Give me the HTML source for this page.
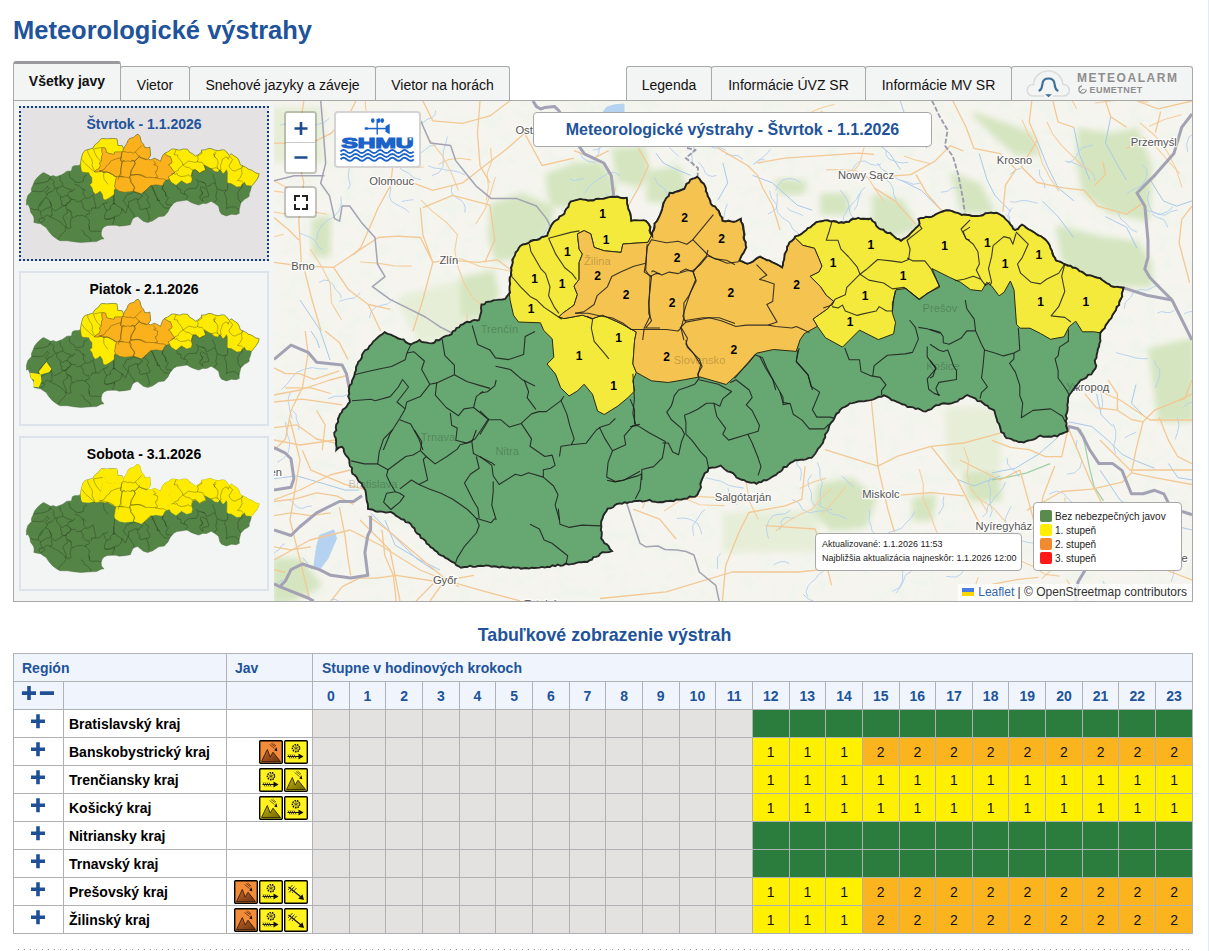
<!DOCTYPE html>
<html><head><meta charset="utf-8">
<style>
html,body{margin:0;padding:0;background:#fff;}
body{width:1209px;height:951px;overflow:hidden;position:relative;font-family:"Liberation Sans",sans-serif;}
.abs{position:absolute;}
h1{position:absolute;left:13px;top:16px;margin:0;font-size:25.5px;font-weight:bold;color:#21539a;white-space:nowrap;letter-spacing:0px}
.tab{position:absolute;top:66px;height:33px;border:1px solid #a9a9a9;border-bottom:none;border-radius:3px 3px 0 0;background:#f3f4f4;font-size:14px;color:#111;text-align:center;line-height:36px;box-sizing:content-box}
.tab.act{top:61px;border-top:3px solid #9a9a9e;font-weight:bold;line-height:35px;z-index:3;height:36px}
.panel{position:absolute;left:13px;top:100px;width:1178px;height:500px;border:1px solid #a9a9a9;background:#f3f4f4}
.card{position:absolute;left:5px;width:246px;height:151px;border:2px solid #dde3ea;background:#f3f4f4}
.card.sel{border:2px dotted #0a3c88;background:#e4e2e2}
.ctitle{position:absolute;left:0;right:0;top:8px;text-align:center;font-weight:bold;font-size:14px;color:#000}
.sel .ctitle{color:#21539a}
.map{position:absolute;left:260px;top:0px;width:918px;height:500px;overflow:hidden;background:#f2efe9}
.ttl{position:absolute;left:0;right:0;top:625px;text-align:center;font-size:17.8px;font-weight:bold;color:#21539a}
table.t{position:absolute;left:13px;top:653px;border-collapse:collapse;table-layout:fixed;width:1180px}
table.t td, table.t th{border:1px solid #b0b1b5;padding:0;height:27px;font-size:14px}
table.t th{background:#f0f5fd;color:#21539a;font-weight:bold;text-align:left}
table.t th.h{text-align:center}
td.pl{color:#21539a;font-weight:bold;font-size:22px !important;text-align:center}
td.nm{font-weight:bold;padding-left:5px !important;font-size:14px !important;color:#000}
td.jv{text-align:right;padding-right:4px !important;font-size:0 !important;white-space:nowrap}
.ic{display:inline-block;width:24px;height:24px;margin-left:1px;vertical-align:middle}
.ic svg{display:block}
td.g{background:#e4e2e0}
td.gr{background:#2a7d3d}
td.y{background:#fff000;text-align:center;color:#111}
td.o{background:#fbb41d;text-align:center;color:#111}
.lbar{position:absolute;box-sizing:border-box;border:2px solid rgba(0,0,0,0.2);border-radius:4px;background:#fff;overflow:hidden;background-clip:padding-box}
.zb{background:#fff} .zb svg, .lbar svg{display:block}
.lbox{position:absolute;box-sizing:border-box;background:#fff;border:1px solid #a8a8a8;border-radius:4px}
.mtitle{font-size:16px;font-weight:bold;color:#21539a;text-align:center;line-height:33px}
.upd{font-size:9px;color:#222;padding:3px 0 0 6px;line-height:14px;white-space:nowrap}
.leg{font-size:10px;color:#222;padding:7px 0 0 6px;line-height:14px;white-space:nowrap}
.leg i{display:inline-block;width:12px;height:12px;border-radius:2px;vertical-align:-2px;margin-right:3px}
.leg div{height:14px}
.attr{position:absolute;right:0;bottom:0;height:17px;background:rgba(255,255,255,0.8);font-size:12px;color:#333;padding:0 5px 0 4px;line-height:17px;white-space:nowrap}
.dots{position:absolute;left:0;top:0}
</style></head><body>
<h1>Meteorologické výstrahy</h1>
<div class="tab act" style="left:13px;width:106px">Všetky javy</div>
<div class="tab" style="left:120px;width:68px">Vietor</div>
<div class="tab" style="left:189px;width:185px">Snehové jazyky a záveje</div>
<div class="tab" style="left:375px;width:133px">Vietor na horách</div>
<div class="tab" style="left:626px;width:84px">Legenda</div>
<div class="tab" style="left:711px;width:153px">Informácie ÚVZ SR</div>
<div class="tab" style="left:865px;width:145px">Informácie MV SR</div>
<div class="tab" style="left:1011px;width:180px"><svg width="181" height="33" viewBox="1012 67 181 33" style="position:absolute;left:0;top:0;display:block">
<path d="M1033 96 C1025 96 1025.5 84 1033.5 84.5 C1034 76 1041 71 1048.5 71 C1056 71 1062 76 1063 84.5 C1071 84 1071.5 96 1063.5 96 L1053 96 M1044 96 L1033 96" fill="none" stroke="#dcdcdc" stroke-width="1.6"/>
<path d="M1039.5 90.5 C1042.5 89 1042 85 1042.5 83.5 C1043 80 1045.5 78.5 1048.5 78.5 C1051.5 78.5 1054 80 1054.5 83.5 C1055 85 1054.5 89 1057.5 90.5" fill="none" stroke="#3f7099" stroke-width="2.2" stroke-linecap="round"/>
<path d="M1045 94.2 L1052 94.2 L1048.5 97.2 Z" fill="#3f7099"/>
<text x="1077" y="82" font-family="Liberation Sans" font-weight="bold" font-size="12" fill="#8e8e8e" letter-spacing="1.55">METEOALARM</text>
<circle cx="1082.5" cy="89.5" r="3.6" fill="none" stroke="#8e8e8e" stroke-width="1.3" stroke-dasharray="16 7"/>
<path d="M1080 92.5 C1081 90 1083 89 1084.5 89.5" fill="none" stroke="#8e8e8e" stroke-width="1"/>
<text x="1089.5" y="93" font-family="Liberation Sans" font-weight="bold" font-size="9" fill="#8e8e8e" letter-spacing="0.45">EUMETNET</text>
</svg>
</div>
<div class="panel">
  <div class="card sel" style="top:5px"><svg width="246" height="151" viewBox="21 108 246 151" style="position:absolute;left:0;top:0;display:block">
<g transform="matrix(0.29069,0.01866,-0.02494,0.2839,-60.169,71.096)">
<polygon points="336.8,450.0 335.1,433.0 338.5,416.2 349.4,401.9 348.6,391.0 353.6,375.8 357.0,364.0 365.4,350.6 375.5,339.6 384.8,332.0 394.0,335.4 400.8,338.8 410.8,343.8 419.3,340.5 429.4,343.8 441.1,338.8 451.2,333.7 464.7,322.0 479.9,320.0 482.0,305.2 488.3,301.0 505.1,298.9 509.3,292.6 510.1,277.7 513.5,257.5 520.2,245.7 533.6,240.7 547.1,235.6 552.2,223.8 563.9,213.7 570.7,202.0 577.4,199.4 590.8,200.3 600.9,198.6 614.4,196.9 626.2,197.8 629.5,212.0 631.2,220.5 646.4,220.5 649.7,227.2 651.4,235.6 654.8,223.8 661.5,212.0 664.9,200.3 669.9,193.6 683.7,188.5 690.5,180.1 697.2,176.7 703.9,183.5 710.7,203.6 719.1,210.4 722.4,220.5 734.2,222.2 740.9,218.8 742.6,227.2 746.0,247.4 739.3,260.8 747.7,264.2 760.0,257.1 771.8,261.5 782.1,267.4 785.0,254.2 789.5,242.4 795.3,236.5 804.2,232.1 816.0,221.8 824.8,220.3 833.6,221.8 844.0,223.3 855.7,218.4 870.9,218.4 878.4,227.9 889.8,233.5 901.2,241.1 910.6,233.5 920.1,224.1 918.2,218.4 931.5,216.5 942.8,210.8 952.3,210.8 961.7,214.6 976.9,216.5 988.3,212.7 996.7,212.7 1005.1,218.6 1015.2,230.4 1022.0,224.5 1033.7,232.1 1045.5,238.8 1052.2,250.6 1055.6,260.7 1065.7,264.0 1077.5,269.1 1084.2,274.1 1097.7,277.5 1111.1,285.9 1122.9,287.6 1121.2,299.4 1114.5,312.8 1107.8,322.9 1101.0,333.0 1099.4,343.6 1097.7,352.0 1095.1,360.4 1096.0,368.8 1091.0,373.8 1080.8,380.6 1069.1,394.0 1067.4,407.5 1065.7,421.0 1067.4,431.0 1057.3,436.1 1040.5,436.1 1023.6,442.8 1006.8,437.8 1000.1,429.4 995.0,414.2 993.8,411.1 980.6,401.6 967.3,395.0 952.2,403.5 938.9,404.5 925.7,411.1 910.5,407.3 899.2,403.5 884.1,396.0 868.9,399.7 850.0,403.5 839.8,410.0 828.4,427.0 822.7,442.2 811.4,457.3 792.5,461.1 773.5,476.2 756.5,483.8 741.4,480.0 728.1,470.6 720.5,464.9 709.2,468.7 703.5,476.2 697.8,495.2 678.9,499.9 660.0,502.7 649.7,500.4 634.6,501.4 619.5,503.3 608.1,508.9 602.5,518.4 600.6,529.7 602.5,541.1 611.9,550.6 602.5,552.4 587.3,561.9 568.4,563.8 555.1,565.7 534.3,568.5 507.8,567.6 488.9,565.7 470.0,566.6 461.3,567.0 449.5,561.1 434.4,551.0 421.0,537.6 410.8,524.1 399.1,517.4 390.7,512.3 375.5,510.7 367.1,509.0 367.1,498.9 365.4,490.5 361.2,483.7 352.8,473.6 349.4,460.2 341.9,446.7" fill="#548446" stroke="#4a6e3e" stroke-width="1.5"/>
<polygon points="509.3,292.6 510.1,277.7 513.5,257.5 520.2,245.7 533.6,240.7 547.1,235.6 552.2,223.8 563.9,213.7 570.7,202.0 577.4,199.4 590.8,200.3 600.9,198.6 614.4,196.9 626.2,197.8 629.5,212.0 631.2,220.5 646.4,220.5 649.7,227.2 651.4,235.6 648.0,242.3 622.8,244.0 621.1,252.4 604.3,250.8 594.2,247.4 590.8,233.9 584.1,230.6 577.4,233.9 579.1,249.1 582.4,254.1 579.1,262.5 579.1,279.4 574.0,286.1 577.4,294.5 574.0,305.1 562.2,313.6 558.9,316.9 563.9,318.6 582.4,315.2 592.5,318.6 602.6,315.2 621.1,323.6 636.3,332.0 634.6,340.5 632.9,364.0 636.3,372.4 632.9,380.8 634.6,391.0 627.9,397.7 617.8,406.1 604.3,414.5 597.6,411.1 592.5,394.3 584.1,384.2 577.4,391.0 569.0,396.0 560.6,387.6 555.5,374.1 547.1,364.0 553.8,357.3 552.2,338.8 543.7,330.4 540.4,322.8 518.5,322.0 513.5,315.2 510.1,300.1" fill="#ffeb00" stroke="#5a5a20" stroke-width="1.2"/>
<polygon points="795.3,236.5 804.2,232.1 816.0,221.8 824.8,220.3 833.6,221.8 844.0,223.3 855.7,218.4 870.9,218.4 878.4,227.9 889.8,233.5 901.2,241.1 910.6,233.5 920.1,224.1 918.2,218.4 931.5,216.5 942.8,210.8 952.3,210.8 961.7,214.6 976.9,216.5 988.3,212.7 996.7,212.7 1005.1,218.6 1015.2,230.4 1022.0,224.5 1033.7,232.1 1045.5,238.8 1052.2,250.6 1055.6,260.7 1065.7,264.0 1077.5,269.1 1084.2,274.1 1097.7,277.5 1111.1,285.9 1122.9,287.6 1121.2,299.4 1114.5,312.8 1107.8,322.9 1101.0,333.0 1094.3,331.8 1082.5,331.8 1075.8,321.2 1069.1,326.7 1064.0,336.8 1050.6,339.3 1040.5,333.5 1030.0,328.2 1020.2,328.2 1016.5,324.4 1014.0,289.7 1010.3,281.0 1004.1,292.2 999.1,295.9 991.7,286.0 986.7,282.3 981.7,290.9 970.6,289.7 960.6,282.3 949.5,277.3 932.1,268.6 939.6,287.2 927.1,293.4 919.7,299.6 906.0,288.5 896.1,289.7 892.4,303.3 892.4,313.3 895.5,322.5 893.6,333.9 878.4,339.6 859.5,330.1 842.5,347.1 825.4,337.7 817.4,326.3 813.0,319.0 827.7,308.7 833.6,301.3 826.3,295.4 820.4,286.6 810.1,276.3 818.9,271.9 821.9,266.0 818.9,258.6 814.5,248.3 802.7,245.3 795.3,238.0" fill="#ffeb00" stroke="#5a5a20" stroke-width="1.2"/>
<polygon points="651.4,235.6 648.0,242.3 622.8,244.0 621.1,252.4 604.3,250.8 594.2,247.4 590.8,233.9 584.1,230.6 577.4,233.9 579.1,249.1 582.4,254.1 579.1,262.5 579.1,279.4 574.0,286.1 577.4,294.5 574.0,305.1 562.2,313.6 558.9,316.9 563.9,318.6 582.4,315.2 592.5,318.6 602.6,315.2 621.1,323.6 636.3,332.0 634.6,340.5 632.9,364.0 636.3,372.4 651.4,380.8 668.2,382.5 684.6,379.7 699.7,376.9 726.2,384.5 735.7,376.0 748.9,362.7 756.5,353.2 773.5,349.5 796.2,351.4 800.0,340.0 804.2,333.7 817.4,326.3 813.0,319.0 827.7,308.7 833.6,301.3 826.3,295.4 820.4,286.6 810.1,276.3 818.9,271.9 821.9,266.0 818.9,258.6 814.5,248.3 802.7,245.3 795.3,238.0 789.5,242.4 785.0,254.2 782.1,267.4 771.8,261.5 760.0,257.1 747.7,264.2 739.3,260.8 746.0,247.4 742.6,227.2 740.9,218.8 734.2,222.2 722.4,220.5 719.1,210.4 710.7,203.6 703.9,183.5 697.2,176.7 690.5,180.1 683.7,188.5 669.9,193.6 664.9,200.3 661.5,212.0 654.8,223.8" fill="#fbb11b" stroke="#5a5a20" stroke-width="1.2"/>
<g clip-path="url(#skc0)" fill="none" stroke="#1f2a14" stroke-width="2" stroke-opacity="0.55">
<clipPath id="skc0"><polygon points="336.8,450.0 335.1,433.0 338.5,416.2 349.4,401.9 348.6,391.0 353.6,375.8 357.0,364.0 365.4,350.6 375.5,339.6 384.8,332.0 394.0,335.4 400.8,338.8 410.8,343.8 419.3,340.5 429.4,343.8 441.1,338.8 451.2,333.7 464.7,322.0 479.9,320.0 482.0,305.2 488.3,301.0 505.1,298.9 509.3,292.6 510.1,277.7 513.5,257.5 520.2,245.7 533.6,240.7 547.1,235.6 552.2,223.8 563.9,213.7 570.7,202.0 577.4,199.4 590.8,200.3 600.9,198.6 614.4,196.9 626.2,197.8 629.5,212.0 631.2,220.5 646.4,220.5 649.7,227.2 651.4,235.6 654.8,223.8 661.5,212.0 664.9,200.3 669.9,193.6 683.7,188.5 690.5,180.1 697.2,176.7 703.9,183.5 710.7,203.6 719.1,210.4 722.4,220.5 734.2,222.2 740.9,218.8 742.6,227.2 746.0,247.4 739.3,260.8 747.7,264.2 760.0,257.1 771.8,261.5 782.1,267.4 785.0,254.2 789.5,242.4 795.3,236.5 804.2,232.1 816.0,221.8 824.8,220.3 833.6,221.8 844.0,223.3 855.7,218.4 870.9,218.4 878.4,227.9 889.8,233.5 901.2,241.1 910.6,233.5 920.1,224.1 918.2,218.4 931.5,216.5 942.8,210.8 952.3,210.8 961.7,214.6 976.9,216.5 988.3,212.7 996.7,212.7 1005.1,218.6 1015.2,230.4 1022.0,224.5 1033.7,232.1 1045.5,238.8 1052.2,250.6 1055.6,260.7 1065.7,264.0 1077.5,269.1 1084.2,274.1 1097.7,277.5 1111.1,285.9 1122.9,287.6 1121.2,299.4 1114.5,312.8 1107.8,322.9 1101.0,333.0 1099.4,343.6 1097.7,352.0 1095.1,360.4 1096.0,368.8 1091.0,373.8 1080.8,380.6 1069.1,394.0 1067.4,407.5 1065.7,421.0 1067.4,431.0 1057.3,436.1 1040.5,436.1 1023.6,442.8 1006.8,437.8 1000.1,429.4 995.0,414.2 993.8,411.1 980.6,401.6 967.3,395.0 952.2,403.5 938.9,404.5 925.7,411.1 910.5,407.3 899.2,403.5 884.1,396.0 868.9,399.7 850.0,403.5 839.8,410.0 828.4,427.0 822.7,442.2 811.4,457.3 792.5,461.1 773.5,476.2 756.5,483.8 741.4,480.0 728.1,470.6 720.5,464.9 709.2,468.7 703.5,476.2 697.8,495.2 678.9,499.9 660.0,502.7 649.7,500.4 634.6,501.4 619.5,503.3 608.1,508.9 602.5,518.4 600.6,529.7 602.5,541.1 611.9,550.6 602.5,552.4 587.3,561.9 568.4,563.8 555.1,565.7 534.3,568.5 507.8,567.6 488.9,565.7 470.0,566.6 461.3,567.0 449.5,561.1 434.4,551.0 421.0,537.6 410.8,524.1 399.1,517.4 390.7,512.3 375.5,510.7 367.1,509.0 367.1,498.9 365.4,490.5 361.2,483.7 352.8,473.6 349.4,460.2 341.9,446.7"/></clipPath>
<polyline points="354.6,374.7 365.6,372.0 377.9,369.2 391.5,366.5 405.2,359.7 407.0,353.0 410.7,344.6"/>
<polyline points="407.0,353.0 413.8,351.7 424.4,361.0 421.6,369.2 429.8,384.3 436.7,382.9 454.4,374.7 454.4,365.1 444.9,355.6 442.1,339.1"/>
<polyline points="429.8,384.3 420.3,396.6 406.6,402.0 405.2,408.9"/>
<polyline points="402.5,379.5 408.6,387.0 397.0,402.0 405.2,408.9"/>
<polyline points="351.9,400.7 371.0,399.3 375.1,400.7 390.2,396.6 398.4,387.0 402.5,379.5"/>
<polyline points="405.2,408.9 399.7,418.5 390.2,433.5 383.3,450.0"/>
<polyline points="399.7,419.8 410.7,423.9 418.9,439.0 423.0,450.0"/>
<polyline points="436.7,382.9 435.3,395.2 446.2,407.5 458.5,415.7 464.0,408.9 473.6,407.5 487.3,418.5"/>
<polyline points="454.4,374.7 466.8,381.5 480.4,385.6 490.0,388.4"/>
<polyline points="472.2,325.5 477.7,344.6 490.0,350.1"/>
<polyline points="473.6,407.5 476.3,396.6 483.2,391.1"/>
<polyline points="450.3,413.0 451.7,425.3 457.2,428.0 455.8,440.3 466.8,443.1 475.0,439.0 483.2,426.7 488.6,418.5"/>
<polyline points="392.4,430.0 383.6,438.8 379.2,452.1 377.7,463.9 364.4,463.9 351.2,460.9"/>
<polyline points="377.7,463.9 388.0,469.7 405.7,456.5 413.0,455.0 420.4,450.6"/>
<polyline points="414.5,430.0 421.8,441.8 420.4,450.6 426.3,456.5 435.1,463.9 446.9,456.5 457.2,449.1 460.1,444.7 471.9,441.8 476.3,430.0"/>
<polyline points="471.9,441.8 473.4,453.6 482.2,458.0 491.0,462.4 495.0,465.3"/>
<polyline points="388.0,469.7 386.5,475.6 390.9,484.5 395.3,491.8 386.5,493.3 383.6,502.1 390.9,509.5"/>
<polyline points="395.3,491.8 399.8,493.3 404.2,496.2 399.8,502.1 390.9,509.5"/>
<polyline points="399.8,488.9 411.5,480.0 418.9,484.5 427.7,480.0 424.8,466.8 423.3,459.4 426.3,456.5"/>
<polyline points="418.9,484.5 429.2,488.9 441.0,493.3 452.8,499.2 467.5,509.5 476.3,518.3 479.2,525.7 476.3,533.0 464.5,546.3 457.2,558.1 455.7,562.5"/>
<polyline points="476.3,518.3 491.0,522.7 495.0,518.3"/>
<polyline points="476.3,456.5 479.2,468.3 470.4,474.2 464.5,483.0 468.9,491.8 473.4,500.7 477.8,508.0 479.2,518.3"/>
<polyline points="480.0,410.9 488.8,419.7 500.6,419.7 509.4,427.1 521.2,423.4 531.5,413.9 538.9,411.6 546.2,411.6 561.0,400.6 563.9,396.2"/>
<polyline points="488.8,419.7 480.0,434.5"/>
<polyline points="521.2,423.4 531.5,438.9 530.0,446.2 544.8,456.5 552.1,455.1 555.1,465.4 550.7,468.3 543.3,469.8 543.3,477.1"/>
<polyline points="561.0,400.6 566.8,413.9 569.8,425.6 574.2,438.9 571.3,444.8 561.0,446.2 559.5,456.5"/>
<polyline points="571.3,444.8 586.0,443.3 596.3,430.0 600.7,427.1 609.5,424.2 615.4,418.3"/>
<polyline points="599.2,427.1 605.1,438.9 612.5,450.7 608.1,462.4 606.6,477.1 615.4,481.6 624.2,480.1 640.0,471.3"/>
<polyline points="612.5,450.7 625.7,444.8 624.2,435.9 633.1,425.6 640.0,424.2"/>
<polyline points="630.1,399.1 634.5,409.4 634.5,424.2"/>
<polyline points="480.0,456.5 491.8,465.4 493.2,475.7 499.1,484.5 515.3,474.2 521.2,475.7 528.6,472.7 543.3,477.1 553.6,486.0 558.0,494.8 555.1,505.1 559.5,520.0"/>
<polyline points="493.2,481.6 493.2,491.9 491.8,505.1 496.2,520.0"/>
<polyline points="524.2,380.0 528.6,391.8 527.1,397.7 535.9,409.4"/>
<polyline points="480.0,393.2 487.4,391.8 494.7,385.9 496.2,380.0"/>
<polyline points="685.9,340.0 687.4,347.4 699.2,359.1 702.1,366.5 697.7,373.9 699.2,378.3"/>
<polyline points="699.2,378.3 694.8,384.2 687.4,387.1 678.6,390.0 674.2,395.9 672.7,401.8 671.2,406.2 666.8,412.1 671.2,419.5 681.5,428.3 684.5,434.2 681.5,441.6 678.6,454.8 672.7,451.9 668.3,443.0 662.4,443.0"/>
<polyline points="699.2,379.7 718.3,384.2 731.6,391.5 722.7,398.9 719.8,406.2 713.9,403.3 706.5,403.3 697.7,409.2 688.9,413.6 684.5,415.1"/>
<polyline points="684.5,415.1 685.9,422.4 685.9,434.2 691.8,440.1 700.7,451.9 706.5,457.8 709.5,472.5"/>
<polyline points="713.9,403.3 716.8,416.5 725.7,428.3 722.7,434.2 728.6,440.1 747.8,434.2 758.1,431.3 759.5,425.4 752.2,410.7 746.3,404.8 752.2,397.4 749.2,390.0 736.0,379.7 730.1,382.7"/>
<polyline points="734.5,378.3 755.1,354.7 762.5,357.7 766.9,368.0 771.3,376.8 777.2,387.1 783.1,397.4 783.1,404.8 790.0,403.3"/>
<polyline points="747.8,434.2 752.2,443.0 758.1,457.8 761.0,466.6 758.1,475.4"/>
<polyline points="630.0,426.8 637.4,425.4 649.1,432.7 665.3,441.6 662.4,457.8 653.6,466.6 641.8,469.5 641.8,480.0"/>
<polyline points="632.9,373.9 634.4,398.9 632.9,413.6 635.9,425.4"/>
<polyline points="799.1,348.0 796.2,361.2 808.0,374.5 810.9,386.2 819.7,392.1 812.4,409.8 816.8,417.1 830.0,417.1 835.9,418.6"/>
<polyline points="780.0,392.1 782.9,402.4 790.3,403.9 793.2,414.2 802.1,420.1 809.4,428.9 824.2,428.9 828.6,424.5"/>
<polyline points="844.8,348.0 849.2,359.7 859.5,359.7 861.0,371.5 871.3,375.9 880.1,377.4 886.0,384.8 881.6,390.7 881.6,395.1"/>
<polyline points="872.7,375.9 874.2,365.6 887.4,355.3 905.1,353.9 912.5,352.4 918.4,339.1 915.4,327.4 909.5,320.0"/>
<polyline points="927.2,346.5 927.2,356.8 936.0,368.6 927.2,378.9 928.7,389.2 934.5,393.6 940.0,395.1"/>
<polyline points="918.4,327.4 927.2,328.8 940.0,333.2"/>
<polyline points="965.3,300.0 966.8,308.8 974.2,319.1 975.6,330.9 981.5,344.2 984.5,350.0 983.0,366.2 981.5,378.0 987.4,386.8 981.5,392.7 980.0,398.6"/>
<polyline points="930.0,329.4 940.3,332.4 943.2,336.8 943.2,342.7 949.1,344.2 960.9,338.3 966.8,330.9 975.6,330.9"/>
<polyline points="930.0,344.2 938.8,350.0 943.2,351.5 947.7,350.0 950.6,357.4 953.6,366.2 956.5,370.7 956.5,379.5 938.8,382.4 935.9,388.3 938.8,395.7"/>
<polyline points="930.0,360.3 935.9,367.7 932.9,376.5 930.0,378.0"/>
<polyline points="984.5,350.0 994.8,353.0 1003.6,355.9 1013.9,353.0 1019.8,350.0 1018.3,328.0"/>
<polyline points="1013.9,353.0 1013.9,358.9 1009.5,363.3 1015.4,372.1 1019.8,385.4 1019.8,395.7 1022.7,403.0 1021.3,417.8 1033.0,410.4 1050.7,408.9 1062.5,416.3 1065.4,422.2"/>
<polyline points="1068.4,329.4 1068.4,341.2 1059.5,347.1 1058.1,355.9 1055.1,358.9 1058.1,370.7 1058.1,378.0 1065.4,388.3 1069.8,395.7"/>
<polyline points="832.1,221.2 829.1,231.5 826.2,240.3 838.0,240.3 840.9,249.2 848.3,256.5 857.1,266.8 860.0,274.2 846.8,287.4 845.3,294.8 835.0,299.2 832.1,305.1 823.2,308.0"/>
<polyline points="860.0,274.2 868.9,280.1 883.6,283.0 892.4,288.9 904.2,287.4 918.9,299.2 927.8,293.3 939.5,286.0 930.7,268.3 924.8,260.9 913.0,260.9 907.1,258.0"/>
<polyline points="860.0,274.2 865.9,269.8 877.7,259.5 891.0,260.9 901.3,262.4 908.6,259.5 910.1,249.2 907.1,240.3 921.9,228.6 916.0,219.7"/>
<polyline points="832.1,306.6 838.0,308.0 842.4,305.1 845.3,311.0 857.1,315.4 863.0,313.9 876.2,311.0 879.2,306.6 886.5,311.0 892.4,311.0 893.9,297.7 895.4,290.4"/>
<polyline points="970.0,227.1 963.1,231.5 966.0,238.9 970.0,240.3"/>
<polyline points="970.2,219.8 961.1,229.0 965.7,238.1 973.3,244.2 977.9,251.8 979.4,264.0 976.3,270.1 980.9,279.3 973.3,276.2 964.1,279.3 955.0,280.8"/>
<polyline points="993.1,245.7 1003.8,236.6 1009.9,238.1 1012.9,244.2 1016.0,233.5"/>
<polyline points="1016.0,232.0 1028.2,244.2 1022.1,257.9 1017.5,264.0 1020.6,273.2 1031.2,282.3 1040.4,283.9 1046.5,279.3 1058.7,273.2 1064.8,264.0"/>
<polyline points="993.1,245.7 991.6,256.4 988.5,268.6 991.6,282.3 990.1,285.4"/>
<polyline points="1064.8,264.0 1061.7,276.2 1064.8,291.5 1058.7,306.7 1051.1,315.9 1064.8,317.4 1070.9,322.0"/>
<polyline points="980.9,279.3 985.5,285.4 990.1,282.3"/>
<polyline points="645.7,263.3 633.9,266.2 620.6,272.1 611.8,276.5 607.4,286.8 597.1,295.7 594.1,304.5 583.8,311.9 575.0,313.3"/>
<polyline points="645.7,263.3 647.1,247.1 651.5,239.7 666.3,242.7 678.0,241.2 686.9,244.2 692.8,239.7 713.4,214.7"/>
<polyline points="692.8,239.7 707.5,254.5 714.8,258.9 726.6,260.3 735.0,264.8"/>
<polyline points="707.5,255.9 700.1,264.8 692.8,270.7 695.7,279.5 689.8,294.2 683.9,303.0 683.9,317.8 681.0,328.1 683.9,340.0"/>
<polyline points="651.5,272.1 653.0,270.7 661.8,275.1 669.2,272.1 678.0,273.6 686.9,270.7 692.8,270.7"/>
<polyline points="645.7,263.3 644.2,272.1 651.5,276.5 648.6,303.0 650.1,316.3 644.2,328.1 642.7,340.0"/>
<polyline points="683.9,320.7 703.1,317.8 719.2,317.8 735.0,323.6"/>
<polyline points="575.0,313.3 588.2,313.3 601.5,316.3 611.8,317.8 623.6,323.6 630.9,329.5 644.2,329.5 666.3,329.5 678.0,331.0 681.0,328.1"/>
<polyline points="680.0,272.1 685.9,269.1 693.2,272.1 696.2,280.9 690.3,292.7 685.9,305.9 682.9,316.2 685.9,322.1 680.0,328.0"/>
<polyline points="685.9,322.1 709.4,317.7 721.2,320.7 735.9,326.5 746.2,325.1 768.3,325.1 777.1,322.1 766.8,304.5 772.7,301.5 774.2,283.9 765.4,280.9 759.5,279.4 766.8,275.0 756.5,264.7"/>
<polyline points="768.3,325.1 775.7,326.5 791.9,328.0 796.3,326.5 809.5,332.4"/>
<polyline points="708.0,250.0 706.5,255.9 697.7,266.2 693.2,272.1"/>
<polyline points="708.0,255.9 719.7,260.3 727.1,263.2 738.9,261.8"/>
<polyline points="681.5,328.0 687.4,338.3 685.9,344.2 693.2,353.0 700.6,364.8 697.7,376.6"/>
<polyline points="759.5,356.0 765.4,367.8 772.7,379.5 775.7,390.0"/>
<polyline points="797.8,350.1 796.3,361.9 808.1,375.1 812.5,390.0"/>
<polyline points="548.6,238.2 570.7,232.4 579.5,230.9"/>
<polyline points="529.4,244.1 530.9,251.5 541.2,269.2 545.6,273.6 550.0,286.8 548.6,295.7 554.5,307.4 558.9,313.3"/>
<polyline points="548.6,238.2 555.9,254.4 564.8,267.7 572.1,273.6 576.5,279.5"/>
<polyline points="511.8,276.5 520.6,286.8 530.9,297.1 536.8,300.1 544.2,307.4 553.0,313.3 561.8,319.2"/>
<polyline points="586.8,316.3 592.7,319.2 591.3,328.0 594.2,341.3 603.0,351.6 608.9,358.9"/>
<polyline points="647.2,244.1 645.7,270.6 650.1,276.5 656.0,273.6 660.0,273.6"/>
<polyline points="650.1,276.5 648.7,313.3 651.6,320.7 645.7,328.0 660.0,328.0"/>
<polyline points="558.3,508.6 559.9,524.3 569.3,527.4 581.9,525.1 600.7,525.9"/>
<polyline points="530.0,524.3 539.4,529.0 544.1,540.0 552.0,543.2 567.7,555.7 566.1,563.6"/>
<polyline points="607.0,480.3 614.9,481.9 622.7,480.3 638.4,475.6 641.6,474.0 640.0,489.7 635.3,499.1"/>
<polyline points="489.7,349.6 495.5,357.9 508.7,359.6 523.6,354.6 525.2,336.4 535.0,331.4"/>
<polyline points="495.5,366.2 510.4,369.5 521.9,379.4 535.0,386.0"/>
</g>
</g>
</svg><div class="ctitle">Štvrtok - 1.1.2026</div></div>
  <div class="card" style="top:170px"><svg width="246" height="151" viewBox="21 273 246 151" style="position:absolute;left:0;top:0;display:block">
<g transform="matrix(0.29069,0.01866,-0.02494,0.2839,-60.169,236.096)">
<polygon points="336.8,450.0 335.1,433.0 338.5,416.2 349.4,401.9 348.6,391.0 353.6,375.8 357.0,364.0 365.4,350.6 375.5,339.6 384.8,332.0 394.0,335.4 400.8,338.8 410.8,343.8 419.3,340.5 429.4,343.8 441.1,338.8 451.2,333.7 464.7,322.0 479.9,320.0 482.0,305.2 488.3,301.0 505.1,298.9 509.3,292.6 510.1,277.7 513.5,257.5 520.2,245.7 533.6,240.7 547.1,235.6 552.2,223.8 563.9,213.7 570.7,202.0 577.4,199.4 590.8,200.3 600.9,198.6 614.4,196.9 626.2,197.8 629.5,212.0 631.2,220.5 646.4,220.5 649.7,227.2 651.4,235.6 654.8,223.8 661.5,212.0 664.9,200.3 669.9,193.6 683.7,188.5 690.5,180.1 697.2,176.7 703.9,183.5 710.7,203.6 719.1,210.4 722.4,220.5 734.2,222.2 740.9,218.8 742.6,227.2 746.0,247.4 739.3,260.8 747.7,264.2 760.0,257.1 771.8,261.5 782.1,267.4 785.0,254.2 789.5,242.4 795.3,236.5 804.2,232.1 816.0,221.8 824.8,220.3 833.6,221.8 844.0,223.3 855.7,218.4 870.9,218.4 878.4,227.9 889.8,233.5 901.2,241.1 910.6,233.5 920.1,224.1 918.2,218.4 931.5,216.5 942.8,210.8 952.3,210.8 961.7,214.6 976.9,216.5 988.3,212.7 996.7,212.7 1005.1,218.6 1015.2,230.4 1022.0,224.5 1033.7,232.1 1045.5,238.8 1052.2,250.6 1055.6,260.7 1065.7,264.0 1077.5,269.1 1084.2,274.1 1097.7,277.5 1111.1,285.9 1122.9,287.6 1121.2,299.4 1114.5,312.8 1107.8,322.9 1101.0,333.0 1099.4,343.6 1097.7,352.0 1095.1,360.4 1096.0,368.8 1091.0,373.8 1080.8,380.6 1069.1,394.0 1067.4,407.5 1065.7,421.0 1067.4,431.0 1057.3,436.1 1040.5,436.1 1023.6,442.8 1006.8,437.8 1000.1,429.4 995.0,414.2 993.8,411.1 980.6,401.6 967.3,395.0 952.2,403.5 938.9,404.5 925.7,411.1 910.5,407.3 899.2,403.5 884.1,396.0 868.9,399.7 850.0,403.5 839.8,410.0 828.4,427.0 822.7,442.2 811.4,457.3 792.5,461.1 773.5,476.2 756.5,483.8 741.4,480.0 728.1,470.6 720.5,464.9 709.2,468.7 703.5,476.2 697.8,495.2 678.9,499.9 660.0,502.7 649.7,500.4 634.6,501.4 619.5,503.3 608.1,508.9 602.5,518.4 600.6,529.7 602.5,541.1 611.9,550.6 602.5,552.4 587.3,561.9 568.4,563.8 555.1,565.7 534.3,568.5 507.8,567.6 488.9,565.7 470.0,566.6 461.3,567.0 449.5,561.1 434.4,551.0 421.0,537.6 410.8,524.1 399.1,517.4 390.7,512.3 375.5,510.7 367.1,509.0 367.1,498.9 365.4,490.5 361.2,483.7 352.8,473.6 349.4,460.2 341.9,446.7" fill="#548446" stroke="#4a6e3e" stroke-width="1.5"/>
<polygon points="509.3,292.6 510.1,277.7 513.5,257.5 520.2,245.7 533.6,240.7 547.1,235.6 552.2,223.8 563.9,213.7 570.7,202.0 577.4,199.4 590.8,200.3 600.9,198.6 614.4,196.9 626.2,197.8 629.5,212.0 631.2,220.5 646.4,220.5 649.7,227.2 651.4,235.6 648.0,242.3 622.8,244.0 621.1,252.4 604.3,250.8 594.2,247.4 590.8,233.9 584.1,230.6 577.4,233.9 579.1,249.1 582.4,254.1 579.1,262.5 579.1,279.4 574.0,286.1 577.4,294.5 574.0,305.1 562.2,313.6 558.9,316.9 563.9,318.6 582.4,315.2 592.5,318.6 602.6,315.2 621.1,323.6 636.3,332.0 634.6,340.5 632.9,364.0 636.3,372.4 632.9,380.8 634.6,391.0 627.9,397.7 617.8,406.1 604.3,414.5 597.6,411.1 592.5,394.3 584.1,384.2 577.4,391.0 569.0,396.0 560.6,387.6 555.5,374.1 547.1,364.0 553.8,357.3 552.2,338.8 543.7,330.4 540.4,322.8 518.5,322.0 513.5,315.2 510.1,300.1" fill="#ffeb00" stroke="#5a5a20" stroke-width="1.2"/>
<polygon points="795.3,236.5 804.2,232.1 816.0,221.8 824.8,220.3 833.6,221.8 844.0,223.3 855.7,218.4 870.9,218.4 878.4,227.9 889.8,233.5 901.2,241.1 910.6,233.5 920.1,224.1 918.2,218.4 931.5,216.5 942.8,210.8 952.3,210.8 961.7,214.6 976.9,216.5 988.3,212.7 996.7,212.7 1005.1,218.6 1015.2,230.4 1022.0,224.5 1033.7,232.1 1045.5,238.8 1052.2,250.6 1055.6,260.7 1065.7,264.0 1077.5,269.1 1084.2,274.1 1097.7,277.5 1111.1,285.9 1122.9,287.6 1121.2,299.4 1114.5,312.8 1107.8,322.9 1101.0,333.0 1094.3,331.8 1082.5,331.8 1075.8,321.2 1069.1,326.7 1064.0,336.8 1050.6,339.3 1040.5,333.5 1030.0,328.2 1020.2,328.2 1016.5,324.4 1014.0,289.7 1010.3,281.0 1004.1,292.2 999.1,295.9 991.7,286.0 986.7,282.3 981.7,290.9 970.6,289.7 960.6,282.3 949.5,277.3 932.1,268.6 939.6,287.2 927.1,293.4 919.7,299.6 906.0,288.5 896.1,289.7 892.4,303.3 892.4,313.3 895.5,322.5 893.6,333.9 878.4,339.6 859.5,330.1 842.5,347.1 825.4,337.7 817.4,326.3 813.0,319.0 827.7,308.7 833.6,301.3 826.3,295.4 820.4,286.6 810.1,276.3 818.9,271.9 821.9,266.0 818.9,258.6 814.5,248.3 802.7,245.3 795.3,238.0" fill="#ffeb00" stroke="#5a5a20" stroke-width="1.2"/>
<polygon points="651.4,235.6 648.0,242.3 622.8,244.0 621.1,252.4 604.3,250.8 594.2,247.4 590.8,233.9 584.1,230.6 577.4,233.9 579.1,249.1 582.4,254.1 579.1,262.5 579.1,279.4 574.0,286.1 577.4,294.5 574.0,305.1 562.2,313.6 558.9,316.9 563.9,318.6 582.4,315.2 592.5,318.6 602.6,315.2 621.1,323.6 636.3,332.0 634.6,340.5 632.9,364.0 636.3,372.4 651.4,380.8 668.2,382.5 684.6,379.7 699.7,376.9 726.2,384.5 735.7,376.0 748.9,362.7 756.5,353.2 773.5,349.5 796.2,351.4 800.0,340.0 804.2,333.7 817.4,326.3 813.0,319.0 827.7,308.7 833.6,301.3 826.3,295.4 820.4,286.6 810.1,276.3 818.9,271.9 821.9,266.0 818.9,258.6 814.5,248.3 802.7,245.3 795.3,238.0 789.5,242.4 785.0,254.2 782.1,267.4 771.8,261.5 760.0,257.1 747.7,264.2 739.3,260.8 746.0,247.4 742.6,227.2 740.9,218.8 734.2,222.2 722.4,220.5 719.1,210.4 710.7,203.6 703.9,183.5 697.2,176.7 690.5,180.1 683.7,188.5 669.9,193.6 664.9,200.3 661.5,212.0 654.8,223.8" fill="#fbb11b" stroke="#5a5a20" stroke-width="1.2"/>
<g clip-path="url(#skc1)" fill="none" stroke="#1f2a14" stroke-width="2" stroke-opacity="0.55">
<clipPath id="skc1"><polygon points="336.8,450.0 335.1,433.0 338.5,416.2 349.4,401.9 348.6,391.0 353.6,375.8 357.0,364.0 365.4,350.6 375.5,339.6 384.8,332.0 394.0,335.4 400.8,338.8 410.8,343.8 419.3,340.5 429.4,343.8 441.1,338.8 451.2,333.7 464.7,322.0 479.9,320.0 482.0,305.2 488.3,301.0 505.1,298.9 509.3,292.6 510.1,277.7 513.5,257.5 520.2,245.7 533.6,240.7 547.1,235.6 552.2,223.8 563.9,213.7 570.7,202.0 577.4,199.4 590.8,200.3 600.9,198.6 614.4,196.9 626.2,197.8 629.5,212.0 631.2,220.5 646.4,220.5 649.7,227.2 651.4,235.6 654.8,223.8 661.5,212.0 664.9,200.3 669.9,193.6 683.7,188.5 690.5,180.1 697.2,176.7 703.9,183.5 710.7,203.6 719.1,210.4 722.4,220.5 734.2,222.2 740.9,218.8 742.6,227.2 746.0,247.4 739.3,260.8 747.7,264.2 760.0,257.1 771.8,261.5 782.1,267.4 785.0,254.2 789.5,242.4 795.3,236.5 804.2,232.1 816.0,221.8 824.8,220.3 833.6,221.8 844.0,223.3 855.7,218.4 870.9,218.4 878.4,227.9 889.8,233.5 901.2,241.1 910.6,233.5 920.1,224.1 918.2,218.4 931.5,216.5 942.8,210.8 952.3,210.8 961.7,214.6 976.9,216.5 988.3,212.7 996.7,212.7 1005.1,218.6 1015.2,230.4 1022.0,224.5 1033.7,232.1 1045.5,238.8 1052.2,250.6 1055.6,260.7 1065.7,264.0 1077.5,269.1 1084.2,274.1 1097.7,277.5 1111.1,285.9 1122.9,287.6 1121.2,299.4 1114.5,312.8 1107.8,322.9 1101.0,333.0 1099.4,343.6 1097.7,352.0 1095.1,360.4 1096.0,368.8 1091.0,373.8 1080.8,380.6 1069.1,394.0 1067.4,407.5 1065.7,421.0 1067.4,431.0 1057.3,436.1 1040.5,436.1 1023.6,442.8 1006.8,437.8 1000.1,429.4 995.0,414.2 993.8,411.1 980.6,401.6 967.3,395.0 952.2,403.5 938.9,404.5 925.7,411.1 910.5,407.3 899.2,403.5 884.1,396.0 868.9,399.7 850.0,403.5 839.8,410.0 828.4,427.0 822.7,442.2 811.4,457.3 792.5,461.1 773.5,476.2 756.5,483.8 741.4,480.0 728.1,470.6 720.5,464.9 709.2,468.7 703.5,476.2 697.8,495.2 678.9,499.9 660.0,502.7 649.7,500.4 634.6,501.4 619.5,503.3 608.1,508.9 602.5,518.4 600.6,529.7 602.5,541.1 611.9,550.6 602.5,552.4 587.3,561.9 568.4,563.8 555.1,565.7 534.3,568.5 507.8,567.6 488.9,565.7 470.0,566.6 461.3,567.0 449.5,561.1 434.4,551.0 421.0,537.6 410.8,524.1 399.1,517.4 390.7,512.3 375.5,510.7 367.1,509.0 367.1,498.9 365.4,490.5 361.2,483.7 352.8,473.6 349.4,460.2 341.9,446.7"/></clipPath>
<polyline points="354.6,374.7 365.6,372.0 377.9,369.2 391.5,366.5 405.2,359.7 407.0,353.0 410.7,344.6"/>
<polyline points="407.0,353.0 413.8,351.7 424.4,361.0 421.6,369.2 429.8,384.3 436.7,382.9 454.4,374.7 454.4,365.1 444.9,355.6 442.1,339.1"/>
<polyline points="429.8,384.3 420.3,396.6 406.6,402.0 405.2,408.9"/>
<polyline points="402.5,379.5 408.6,387.0 397.0,402.0 405.2,408.9"/>
<polyline points="351.9,400.7 371.0,399.3 375.1,400.7 390.2,396.6 398.4,387.0 402.5,379.5"/>
<polyline points="405.2,408.9 399.7,418.5 390.2,433.5 383.3,450.0"/>
<polyline points="399.7,419.8 410.7,423.9 418.9,439.0 423.0,450.0"/>
<polyline points="436.7,382.9 435.3,395.2 446.2,407.5 458.5,415.7 464.0,408.9 473.6,407.5 487.3,418.5"/>
<polyline points="454.4,374.7 466.8,381.5 480.4,385.6 490.0,388.4"/>
<polyline points="472.2,325.5 477.7,344.6 490.0,350.1"/>
<polyline points="473.6,407.5 476.3,396.6 483.2,391.1"/>
<polyline points="450.3,413.0 451.7,425.3 457.2,428.0 455.8,440.3 466.8,443.1 475.0,439.0 483.2,426.7 488.6,418.5"/>
<polyline points="392.4,430.0 383.6,438.8 379.2,452.1 377.7,463.9 364.4,463.9 351.2,460.9"/>
<polyline points="377.7,463.9 388.0,469.7 405.7,456.5 413.0,455.0 420.4,450.6"/>
<polyline points="414.5,430.0 421.8,441.8 420.4,450.6 426.3,456.5 435.1,463.9 446.9,456.5 457.2,449.1 460.1,444.7 471.9,441.8 476.3,430.0"/>
<polyline points="471.9,441.8 473.4,453.6 482.2,458.0 491.0,462.4 495.0,465.3"/>
<polyline points="388.0,469.7 386.5,475.6 390.9,484.5 395.3,491.8 386.5,493.3 383.6,502.1 390.9,509.5"/>
<polyline points="395.3,491.8 399.8,493.3 404.2,496.2 399.8,502.1 390.9,509.5"/>
<polyline points="399.8,488.9 411.5,480.0 418.9,484.5 427.7,480.0 424.8,466.8 423.3,459.4 426.3,456.5"/>
<polyline points="418.9,484.5 429.2,488.9 441.0,493.3 452.8,499.2 467.5,509.5 476.3,518.3 479.2,525.7 476.3,533.0 464.5,546.3 457.2,558.1 455.7,562.5"/>
<polyline points="476.3,518.3 491.0,522.7 495.0,518.3"/>
<polyline points="476.3,456.5 479.2,468.3 470.4,474.2 464.5,483.0 468.9,491.8 473.4,500.7 477.8,508.0 479.2,518.3"/>
<polyline points="480.0,410.9 488.8,419.7 500.6,419.7 509.4,427.1 521.2,423.4 531.5,413.9 538.9,411.6 546.2,411.6 561.0,400.6 563.9,396.2"/>
<polyline points="488.8,419.7 480.0,434.5"/>
<polyline points="521.2,423.4 531.5,438.9 530.0,446.2 544.8,456.5 552.1,455.1 555.1,465.4 550.7,468.3 543.3,469.8 543.3,477.1"/>
<polyline points="561.0,400.6 566.8,413.9 569.8,425.6 574.2,438.9 571.3,444.8 561.0,446.2 559.5,456.5"/>
<polyline points="571.3,444.8 586.0,443.3 596.3,430.0 600.7,427.1 609.5,424.2 615.4,418.3"/>
<polyline points="599.2,427.1 605.1,438.9 612.5,450.7 608.1,462.4 606.6,477.1 615.4,481.6 624.2,480.1 640.0,471.3"/>
<polyline points="612.5,450.7 625.7,444.8 624.2,435.9 633.1,425.6 640.0,424.2"/>
<polyline points="630.1,399.1 634.5,409.4 634.5,424.2"/>
<polyline points="480.0,456.5 491.8,465.4 493.2,475.7 499.1,484.5 515.3,474.2 521.2,475.7 528.6,472.7 543.3,477.1 553.6,486.0 558.0,494.8 555.1,505.1 559.5,520.0"/>
<polyline points="493.2,481.6 493.2,491.9 491.8,505.1 496.2,520.0"/>
<polyline points="524.2,380.0 528.6,391.8 527.1,397.7 535.9,409.4"/>
<polyline points="480.0,393.2 487.4,391.8 494.7,385.9 496.2,380.0"/>
<polyline points="685.9,340.0 687.4,347.4 699.2,359.1 702.1,366.5 697.7,373.9 699.2,378.3"/>
<polyline points="699.2,378.3 694.8,384.2 687.4,387.1 678.6,390.0 674.2,395.9 672.7,401.8 671.2,406.2 666.8,412.1 671.2,419.5 681.5,428.3 684.5,434.2 681.5,441.6 678.6,454.8 672.7,451.9 668.3,443.0 662.4,443.0"/>
<polyline points="699.2,379.7 718.3,384.2 731.6,391.5 722.7,398.9 719.8,406.2 713.9,403.3 706.5,403.3 697.7,409.2 688.9,413.6 684.5,415.1"/>
<polyline points="684.5,415.1 685.9,422.4 685.9,434.2 691.8,440.1 700.7,451.9 706.5,457.8 709.5,472.5"/>
<polyline points="713.9,403.3 716.8,416.5 725.7,428.3 722.7,434.2 728.6,440.1 747.8,434.2 758.1,431.3 759.5,425.4 752.2,410.7 746.3,404.8 752.2,397.4 749.2,390.0 736.0,379.7 730.1,382.7"/>
<polyline points="734.5,378.3 755.1,354.7 762.5,357.7 766.9,368.0 771.3,376.8 777.2,387.1 783.1,397.4 783.1,404.8 790.0,403.3"/>
<polyline points="747.8,434.2 752.2,443.0 758.1,457.8 761.0,466.6 758.1,475.4"/>
<polyline points="630.0,426.8 637.4,425.4 649.1,432.7 665.3,441.6 662.4,457.8 653.6,466.6 641.8,469.5 641.8,480.0"/>
<polyline points="632.9,373.9 634.4,398.9 632.9,413.6 635.9,425.4"/>
<polyline points="799.1,348.0 796.2,361.2 808.0,374.5 810.9,386.2 819.7,392.1 812.4,409.8 816.8,417.1 830.0,417.1 835.9,418.6"/>
<polyline points="780.0,392.1 782.9,402.4 790.3,403.9 793.2,414.2 802.1,420.1 809.4,428.9 824.2,428.9 828.6,424.5"/>
<polyline points="844.8,348.0 849.2,359.7 859.5,359.7 861.0,371.5 871.3,375.9 880.1,377.4 886.0,384.8 881.6,390.7 881.6,395.1"/>
<polyline points="872.7,375.9 874.2,365.6 887.4,355.3 905.1,353.9 912.5,352.4 918.4,339.1 915.4,327.4 909.5,320.0"/>
<polyline points="927.2,346.5 927.2,356.8 936.0,368.6 927.2,378.9 928.7,389.2 934.5,393.6 940.0,395.1"/>
<polyline points="918.4,327.4 927.2,328.8 940.0,333.2"/>
<polyline points="965.3,300.0 966.8,308.8 974.2,319.1 975.6,330.9 981.5,344.2 984.5,350.0 983.0,366.2 981.5,378.0 987.4,386.8 981.5,392.7 980.0,398.6"/>
<polyline points="930.0,329.4 940.3,332.4 943.2,336.8 943.2,342.7 949.1,344.2 960.9,338.3 966.8,330.9 975.6,330.9"/>
<polyline points="930.0,344.2 938.8,350.0 943.2,351.5 947.7,350.0 950.6,357.4 953.6,366.2 956.5,370.7 956.5,379.5 938.8,382.4 935.9,388.3 938.8,395.7"/>
<polyline points="930.0,360.3 935.9,367.7 932.9,376.5 930.0,378.0"/>
<polyline points="984.5,350.0 994.8,353.0 1003.6,355.9 1013.9,353.0 1019.8,350.0 1018.3,328.0"/>
<polyline points="1013.9,353.0 1013.9,358.9 1009.5,363.3 1015.4,372.1 1019.8,385.4 1019.8,395.7 1022.7,403.0 1021.3,417.8 1033.0,410.4 1050.7,408.9 1062.5,416.3 1065.4,422.2"/>
<polyline points="1068.4,329.4 1068.4,341.2 1059.5,347.1 1058.1,355.9 1055.1,358.9 1058.1,370.7 1058.1,378.0 1065.4,388.3 1069.8,395.7"/>
<polyline points="832.1,221.2 829.1,231.5 826.2,240.3 838.0,240.3 840.9,249.2 848.3,256.5 857.1,266.8 860.0,274.2 846.8,287.4 845.3,294.8 835.0,299.2 832.1,305.1 823.2,308.0"/>
<polyline points="860.0,274.2 868.9,280.1 883.6,283.0 892.4,288.9 904.2,287.4 918.9,299.2 927.8,293.3 939.5,286.0 930.7,268.3 924.8,260.9 913.0,260.9 907.1,258.0"/>
<polyline points="860.0,274.2 865.9,269.8 877.7,259.5 891.0,260.9 901.3,262.4 908.6,259.5 910.1,249.2 907.1,240.3 921.9,228.6 916.0,219.7"/>
<polyline points="832.1,306.6 838.0,308.0 842.4,305.1 845.3,311.0 857.1,315.4 863.0,313.9 876.2,311.0 879.2,306.6 886.5,311.0 892.4,311.0 893.9,297.7 895.4,290.4"/>
<polyline points="970.0,227.1 963.1,231.5 966.0,238.9 970.0,240.3"/>
<polyline points="970.2,219.8 961.1,229.0 965.7,238.1 973.3,244.2 977.9,251.8 979.4,264.0 976.3,270.1 980.9,279.3 973.3,276.2 964.1,279.3 955.0,280.8"/>
<polyline points="993.1,245.7 1003.8,236.6 1009.9,238.1 1012.9,244.2 1016.0,233.5"/>
<polyline points="1016.0,232.0 1028.2,244.2 1022.1,257.9 1017.5,264.0 1020.6,273.2 1031.2,282.3 1040.4,283.9 1046.5,279.3 1058.7,273.2 1064.8,264.0"/>
<polyline points="993.1,245.7 991.6,256.4 988.5,268.6 991.6,282.3 990.1,285.4"/>
<polyline points="1064.8,264.0 1061.7,276.2 1064.8,291.5 1058.7,306.7 1051.1,315.9 1064.8,317.4 1070.9,322.0"/>
<polyline points="980.9,279.3 985.5,285.4 990.1,282.3"/>
<polyline points="645.7,263.3 633.9,266.2 620.6,272.1 611.8,276.5 607.4,286.8 597.1,295.7 594.1,304.5 583.8,311.9 575.0,313.3"/>
<polyline points="645.7,263.3 647.1,247.1 651.5,239.7 666.3,242.7 678.0,241.2 686.9,244.2 692.8,239.7 713.4,214.7"/>
<polyline points="692.8,239.7 707.5,254.5 714.8,258.9 726.6,260.3 735.0,264.8"/>
<polyline points="707.5,255.9 700.1,264.8 692.8,270.7 695.7,279.5 689.8,294.2 683.9,303.0 683.9,317.8 681.0,328.1 683.9,340.0"/>
<polyline points="651.5,272.1 653.0,270.7 661.8,275.1 669.2,272.1 678.0,273.6 686.9,270.7 692.8,270.7"/>
<polyline points="645.7,263.3 644.2,272.1 651.5,276.5 648.6,303.0 650.1,316.3 644.2,328.1 642.7,340.0"/>
<polyline points="683.9,320.7 703.1,317.8 719.2,317.8 735.0,323.6"/>
<polyline points="575.0,313.3 588.2,313.3 601.5,316.3 611.8,317.8 623.6,323.6 630.9,329.5 644.2,329.5 666.3,329.5 678.0,331.0 681.0,328.1"/>
<polyline points="680.0,272.1 685.9,269.1 693.2,272.1 696.2,280.9 690.3,292.7 685.9,305.9 682.9,316.2 685.9,322.1 680.0,328.0"/>
<polyline points="685.9,322.1 709.4,317.7 721.2,320.7 735.9,326.5 746.2,325.1 768.3,325.1 777.1,322.1 766.8,304.5 772.7,301.5 774.2,283.9 765.4,280.9 759.5,279.4 766.8,275.0 756.5,264.7"/>
<polyline points="768.3,325.1 775.7,326.5 791.9,328.0 796.3,326.5 809.5,332.4"/>
<polyline points="708.0,250.0 706.5,255.9 697.7,266.2 693.2,272.1"/>
<polyline points="708.0,255.9 719.7,260.3 727.1,263.2 738.9,261.8"/>
<polyline points="681.5,328.0 687.4,338.3 685.9,344.2 693.2,353.0 700.6,364.8 697.7,376.6"/>
<polyline points="759.5,356.0 765.4,367.8 772.7,379.5 775.7,390.0"/>
<polyline points="797.8,350.1 796.3,361.9 808.1,375.1 812.5,390.0"/>
<polyline points="548.6,238.2 570.7,232.4 579.5,230.9"/>
<polyline points="529.4,244.1 530.9,251.5 541.2,269.2 545.6,273.6 550.0,286.8 548.6,295.7 554.5,307.4 558.9,313.3"/>
<polyline points="548.6,238.2 555.9,254.4 564.8,267.7 572.1,273.6 576.5,279.5"/>
<polyline points="511.8,276.5 520.6,286.8 530.9,297.1 536.8,300.1 544.2,307.4 553.0,313.3 561.8,319.2"/>
<polyline points="586.8,316.3 592.7,319.2 591.3,328.0 594.2,341.3 603.0,351.6 608.9,358.9"/>
<polyline points="647.2,244.1 645.7,270.6 650.1,276.5 656.0,273.6 660.0,273.6"/>
<polyline points="650.1,276.5 648.7,313.3 651.6,320.7 645.7,328.0 660.0,328.0"/>
<polyline points="558.3,508.6 559.9,524.3 569.3,527.4 581.9,525.1 600.7,525.9"/>
<polyline points="530.0,524.3 539.4,529.0 544.1,540.0 552.0,543.2 567.7,555.7 566.1,563.6"/>
<polyline points="607.0,480.3 614.9,481.9 622.7,480.3 638.4,475.6 641.6,474.0 640.0,489.7 635.3,499.1"/>
<polyline points="489.7,349.6 495.5,357.9 508.7,359.6 523.6,354.6 525.2,336.4 535.0,331.4"/>
<polyline points="495.5,366.2 510.4,369.5 521.9,379.4 535.0,386.0"/>
</g>
</g>
<polygon points="46.5,362.1 51.5,369.0 49.0,372.2 40.2,374.7 38.9,371.5 42.7,366.5" fill="#ffeb00"/>
<polygon points="30.1,372.8 38.9,374.1 40.8,375.3 41.5,381.6 38.9,387.3 33.9,386.7 33.9,379.7 30.7,377.9" fill="#ffeb00"/>
</svg><div class="ctitle">Piatok - 2.1.2026</div></div>
  <div class="card" style="top:335px"><svg width="246" height="151" viewBox="21 438 246 151" style="position:absolute;left:0;top:0;display:block">
<g transform="matrix(0.29069,0.01866,-0.02494,0.2839,-60.169,401.096)">
<polygon points="336.8,450.0 335.1,433.0 338.5,416.2 349.4,401.9 348.6,391.0 353.6,375.8 357.0,364.0 365.4,350.6 375.5,339.6 384.8,332.0 394.0,335.4 400.8,338.8 410.8,343.8 419.3,340.5 429.4,343.8 441.1,338.8 451.2,333.7 464.7,322.0 479.9,320.0 482.0,305.2 488.3,301.0 505.1,298.9 509.3,292.6 510.1,277.7 513.5,257.5 520.2,245.7 533.6,240.7 547.1,235.6 552.2,223.8 563.9,213.7 570.7,202.0 577.4,199.4 590.8,200.3 600.9,198.6 614.4,196.9 626.2,197.8 629.5,212.0 631.2,220.5 646.4,220.5 649.7,227.2 651.4,235.6 654.8,223.8 661.5,212.0 664.9,200.3 669.9,193.6 683.7,188.5 690.5,180.1 697.2,176.7 703.9,183.5 710.7,203.6 719.1,210.4 722.4,220.5 734.2,222.2 740.9,218.8 742.6,227.2 746.0,247.4 739.3,260.8 747.7,264.2 760.0,257.1 771.8,261.5 782.1,267.4 785.0,254.2 789.5,242.4 795.3,236.5 804.2,232.1 816.0,221.8 824.8,220.3 833.6,221.8 844.0,223.3 855.7,218.4 870.9,218.4 878.4,227.9 889.8,233.5 901.2,241.1 910.6,233.5 920.1,224.1 918.2,218.4 931.5,216.5 942.8,210.8 952.3,210.8 961.7,214.6 976.9,216.5 988.3,212.7 996.7,212.7 1005.1,218.6 1015.2,230.4 1022.0,224.5 1033.7,232.1 1045.5,238.8 1052.2,250.6 1055.6,260.7 1065.7,264.0 1077.5,269.1 1084.2,274.1 1097.7,277.5 1111.1,285.9 1122.9,287.6 1121.2,299.4 1114.5,312.8 1107.8,322.9 1101.0,333.0 1099.4,343.6 1097.7,352.0 1095.1,360.4 1096.0,368.8 1091.0,373.8 1080.8,380.6 1069.1,394.0 1067.4,407.5 1065.7,421.0 1067.4,431.0 1057.3,436.1 1040.5,436.1 1023.6,442.8 1006.8,437.8 1000.1,429.4 995.0,414.2 993.8,411.1 980.6,401.6 967.3,395.0 952.2,403.5 938.9,404.5 925.7,411.1 910.5,407.3 899.2,403.5 884.1,396.0 868.9,399.7 850.0,403.5 839.8,410.0 828.4,427.0 822.7,442.2 811.4,457.3 792.5,461.1 773.5,476.2 756.5,483.8 741.4,480.0 728.1,470.6 720.5,464.9 709.2,468.7 703.5,476.2 697.8,495.2 678.9,499.9 660.0,502.7 649.7,500.4 634.6,501.4 619.5,503.3 608.1,508.9 602.5,518.4 600.6,529.7 602.5,541.1 611.9,550.6 602.5,552.4 587.3,561.9 568.4,563.8 555.1,565.7 534.3,568.5 507.8,567.6 488.9,565.7 470.0,566.6 461.3,567.0 449.5,561.1 434.4,551.0 421.0,537.6 410.8,524.1 399.1,517.4 390.7,512.3 375.5,510.7 367.1,509.0 367.1,498.9 365.4,490.5 361.2,483.7 352.8,473.6 349.4,460.2 341.9,446.7" fill="#548446" stroke="#4a6e3e" stroke-width="1.5"/>
<polygon points="509.3,292.6 510.1,277.7 513.5,257.5 520.2,245.7 533.6,240.7 547.1,235.6 552.2,223.8 563.9,213.7 570.7,202.0 577.4,199.4 590.8,200.3 600.9,198.6 614.4,196.9 626.2,197.8 629.5,212.0 631.2,220.5 646.4,220.5 649.7,227.2 651.4,235.6 648.0,242.3 622.8,244.0 621.1,252.4 604.3,250.8 594.2,247.4 590.8,233.9 584.1,230.6 577.4,233.9 579.1,249.1 582.4,254.1 579.1,262.5 579.1,279.4 574.0,286.1 577.4,294.5 574.0,305.1 562.2,313.6 558.9,316.9 540.4,322.8 518.5,322.0 513.5,315.2 510.1,300.1" fill="#ffeb00"/>
<polygon points="651.4,235.6 648.0,242.3 622.8,244.0 621.1,252.4 604.3,250.8 594.2,247.4 590.8,233.9 584.1,230.6 577.4,233.9 579.1,249.1 582.4,254.1 579.1,262.5 579.1,279.4 574.0,286.1 577.4,294.5 574.0,305.1 562.2,313.6 558.9,316.9 563.9,318.6 582.4,315.2 592.5,318.6 602.6,315.2 621.1,323.6 636.3,332.0 634.6,340.5 632.9,364.0 636.3,372.4 651.4,380.8 668.2,382.5 684.6,379.7 699.7,376.9 726.2,384.5 735.7,376.0 748.9,362.7 756.5,353.2 773.5,349.5 796.2,351.4 800.0,340.0 804.2,333.7 817.4,326.3 813.0,319.0 827.7,308.7 833.6,301.3 826.3,295.4 820.4,286.6 810.1,276.3 818.9,271.9 821.9,266.0 818.9,258.6 814.5,248.3 802.7,245.3 795.3,238.0 789.5,242.4 785.0,254.2 782.1,267.4 771.8,261.5 760.0,257.1 747.7,264.2 739.3,260.8 746.0,247.4 742.6,227.2 740.9,218.8 734.2,222.2 722.4,220.5 719.1,210.4 710.7,203.6 703.9,183.5 697.2,176.7 690.5,180.1 683.7,188.5 669.9,193.6 664.9,200.3 661.5,212.0 654.8,223.8" fill="#ffeb00" stroke="#ffeb00" stroke-width="2"/>
<polygon points="795.3,236.5 804.2,232.1 816.0,221.8 824.8,220.3 833.6,221.8 844.0,223.3 855.7,218.4 870.9,218.4 878.4,227.9 889.8,233.5 901.2,241.1 910.6,233.5 920.1,224.1 918.2,218.4 931.5,216.5 942.8,210.8 952.3,210.8 961.7,214.6 976.9,216.5 988.3,212.7 996.7,212.7 1005.1,218.6 1015.2,230.4 1022.0,224.5 1033.7,232.1 1045.5,238.8 1052.2,250.6 1055.6,260.7 1065.7,264.0 1077.5,269.1 1084.2,274.1 1097.7,277.5 1111.1,285.9 1122.9,287.6 1121.2,299.4 1114.5,312.8 1107.8,322.9 1101.0,333.0 1094.3,331.8 1082.5,331.8 1075.8,321.2 1069.1,326.7 1064.0,336.8 1050.6,339.3 1040.5,333.5 1030.0,328.2 1020.2,328.2 1016.5,324.4 1014.0,289.7 1010.3,281.0 1004.1,292.2 999.1,295.9 991.7,286.0 986.7,282.3 981.7,290.9 970.6,289.7 960.6,282.3 949.5,277.3 932.1,268.6 939.6,287.2 927.1,293.4 919.7,299.6 906.0,288.5 896.1,289.7 892.4,303.3 892.4,313.3 895.5,322.5 893.6,333.9 878.4,339.6 859.5,330.1 842.5,347.1 825.4,337.7 817.4,326.3 813.0,319.0 827.7,308.7 833.6,301.3 826.3,295.4 820.4,286.6 810.1,276.3 818.9,271.9 821.9,266.0 818.9,258.6 814.5,248.3 802.7,245.3 795.3,238.0" fill="#ffeb00" stroke="#ffeb00" stroke-width="2"/>
<g clip-path="url(#skc2)" fill="none" stroke="#1f2a14" stroke-width="2" stroke-opacity="0.55">
<clipPath id="skc2"><polygon points="336.8,450.0 335.1,433.0 338.5,416.2 349.4,401.9 348.6,391.0 353.6,375.8 357.0,364.0 365.4,350.6 375.5,339.6 384.8,332.0 394.0,335.4 400.8,338.8 410.8,343.8 419.3,340.5 429.4,343.8 441.1,338.8 451.2,333.7 464.7,322.0 479.9,320.0 482.0,305.2 488.3,301.0 505.1,298.9 509.3,292.6 510.1,277.7 513.5,257.5 520.2,245.7 533.6,240.7 547.1,235.6 552.2,223.8 563.9,213.7 570.7,202.0 577.4,199.4 590.8,200.3 600.9,198.6 614.4,196.9 626.2,197.8 629.5,212.0 631.2,220.5 646.4,220.5 649.7,227.2 651.4,235.6 654.8,223.8 661.5,212.0 664.9,200.3 669.9,193.6 683.7,188.5 690.5,180.1 697.2,176.7 703.9,183.5 710.7,203.6 719.1,210.4 722.4,220.5 734.2,222.2 740.9,218.8 742.6,227.2 746.0,247.4 739.3,260.8 747.7,264.2 760.0,257.1 771.8,261.5 782.1,267.4 785.0,254.2 789.5,242.4 795.3,236.5 804.2,232.1 816.0,221.8 824.8,220.3 833.6,221.8 844.0,223.3 855.7,218.4 870.9,218.4 878.4,227.9 889.8,233.5 901.2,241.1 910.6,233.5 920.1,224.1 918.2,218.4 931.5,216.5 942.8,210.8 952.3,210.8 961.7,214.6 976.9,216.5 988.3,212.7 996.7,212.7 1005.1,218.6 1015.2,230.4 1022.0,224.5 1033.7,232.1 1045.5,238.8 1052.2,250.6 1055.6,260.7 1065.7,264.0 1077.5,269.1 1084.2,274.1 1097.7,277.5 1111.1,285.9 1122.9,287.6 1121.2,299.4 1114.5,312.8 1107.8,322.9 1101.0,333.0 1099.4,343.6 1097.7,352.0 1095.1,360.4 1096.0,368.8 1091.0,373.8 1080.8,380.6 1069.1,394.0 1067.4,407.5 1065.7,421.0 1067.4,431.0 1057.3,436.1 1040.5,436.1 1023.6,442.8 1006.8,437.8 1000.1,429.4 995.0,414.2 993.8,411.1 980.6,401.6 967.3,395.0 952.2,403.5 938.9,404.5 925.7,411.1 910.5,407.3 899.2,403.5 884.1,396.0 868.9,399.7 850.0,403.5 839.8,410.0 828.4,427.0 822.7,442.2 811.4,457.3 792.5,461.1 773.5,476.2 756.5,483.8 741.4,480.0 728.1,470.6 720.5,464.9 709.2,468.7 703.5,476.2 697.8,495.2 678.9,499.9 660.0,502.7 649.7,500.4 634.6,501.4 619.5,503.3 608.1,508.9 602.5,518.4 600.6,529.7 602.5,541.1 611.9,550.6 602.5,552.4 587.3,561.9 568.4,563.8 555.1,565.7 534.3,568.5 507.8,567.6 488.9,565.7 470.0,566.6 461.3,567.0 449.5,561.1 434.4,551.0 421.0,537.6 410.8,524.1 399.1,517.4 390.7,512.3 375.5,510.7 367.1,509.0 367.1,498.9 365.4,490.5 361.2,483.7 352.8,473.6 349.4,460.2 341.9,446.7"/></clipPath>
<polyline points="354.6,374.7 365.6,372.0 377.9,369.2 391.5,366.5 405.2,359.7 407.0,353.0 410.7,344.6"/>
<polyline points="407.0,353.0 413.8,351.7 424.4,361.0 421.6,369.2 429.8,384.3 436.7,382.9 454.4,374.7 454.4,365.1 444.9,355.6 442.1,339.1"/>
<polyline points="429.8,384.3 420.3,396.6 406.6,402.0 405.2,408.9"/>
<polyline points="402.5,379.5 408.6,387.0 397.0,402.0 405.2,408.9"/>
<polyline points="351.9,400.7 371.0,399.3 375.1,400.7 390.2,396.6 398.4,387.0 402.5,379.5"/>
<polyline points="405.2,408.9 399.7,418.5 390.2,433.5 383.3,450.0"/>
<polyline points="399.7,419.8 410.7,423.9 418.9,439.0 423.0,450.0"/>
<polyline points="436.7,382.9 435.3,395.2 446.2,407.5 458.5,415.7 464.0,408.9 473.6,407.5 487.3,418.5"/>
<polyline points="454.4,374.7 466.8,381.5 480.4,385.6 490.0,388.4"/>
<polyline points="472.2,325.5 477.7,344.6 490.0,350.1"/>
<polyline points="473.6,407.5 476.3,396.6 483.2,391.1"/>
<polyline points="450.3,413.0 451.7,425.3 457.2,428.0 455.8,440.3 466.8,443.1 475.0,439.0 483.2,426.7 488.6,418.5"/>
<polyline points="392.4,430.0 383.6,438.8 379.2,452.1 377.7,463.9 364.4,463.9 351.2,460.9"/>
<polyline points="377.7,463.9 388.0,469.7 405.7,456.5 413.0,455.0 420.4,450.6"/>
<polyline points="414.5,430.0 421.8,441.8 420.4,450.6 426.3,456.5 435.1,463.9 446.9,456.5 457.2,449.1 460.1,444.7 471.9,441.8 476.3,430.0"/>
<polyline points="471.9,441.8 473.4,453.6 482.2,458.0 491.0,462.4 495.0,465.3"/>
<polyline points="388.0,469.7 386.5,475.6 390.9,484.5 395.3,491.8 386.5,493.3 383.6,502.1 390.9,509.5"/>
<polyline points="395.3,491.8 399.8,493.3 404.2,496.2 399.8,502.1 390.9,509.5"/>
<polyline points="399.8,488.9 411.5,480.0 418.9,484.5 427.7,480.0 424.8,466.8 423.3,459.4 426.3,456.5"/>
<polyline points="418.9,484.5 429.2,488.9 441.0,493.3 452.8,499.2 467.5,509.5 476.3,518.3 479.2,525.7 476.3,533.0 464.5,546.3 457.2,558.1 455.7,562.5"/>
<polyline points="476.3,518.3 491.0,522.7 495.0,518.3"/>
<polyline points="476.3,456.5 479.2,468.3 470.4,474.2 464.5,483.0 468.9,491.8 473.4,500.7 477.8,508.0 479.2,518.3"/>
<polyline points="480.0,410.9 488.8,419.7 500.6,419.7 509.4,427.1 521.2,423.4 531.5,413.9 538.9,411.6 546.2,411.6 561.0,400.6 563.9,396.2"/>
<polyline points="488.8,419.7 480.0,434.5"/>
<polyline points="521.2,423.4 531.5,438.9 530.0,446.2 544.8,456.5 552.1,455.1 555.1,465.4 550.7,468.3 543.3,469.8 543.3,477.1"/>
<polyline points="561.0,400.6 566.8,413.9 569.8,425.6 574.2,438.9 571.3,444.8 561.0,446.2 559.5,456.5"/>
<polyline points="571.3,444.8 586.0,443.3 596.3,430.0 600.7,427.1 609.5,424.2 615.4,418.3"/>
<polyline points="599.2,427.1 605.1,438.9 612.5,450.7 608.1,462.4 606.6,477.1 615.4,481.6 624.2,480.1 640.0,471.3"/>
<polyline points="612.5,450.7 625.7,444.8 624.2,435.9 633.1,425.6 640.0,424.2"/>
<polyline points="630.1,399.1 634.5,409.4 634.5,424.2"/>
<polyline points="480.0,456.5 491.8,465.4 493.2,475.7 499.1,484.5 515.3,474.2 521.2,475.7 528.6,472.7 543.3,477.1 553.6,486.0 558.0,494.8 555.1,505.1 559.5,520.0"/>
<polyline points="493.2,481.6 493.2,491.9 491.8,505.1 496.2,520.0"/>
<polyline points="524.2,380.0 528.6,391.8 527.1,397.7 535.9,409.4"/>
<polyline points="480.0,393.2 487.4,391.8 494.7,385.9 496.2,380.0"/>
<polyline points="685.9,340.0 687.4,347.4 699.2,359.1 702.1,366.5 697.7,373.9 699.2,378.3"/>
<polyline points="699.2,378.3 694.8,384.2 687.4,387.1 678.6,390.0 674.2,395.9 672.7,401.8 671.2,406.2 666.8,412.1 671.2,419.5 681.5,428.3 684.5,434.2 681.5,441.6 678.6,454.8 672.7,451.9 668.3,443.0 662.4,443.0"/>
<polyline points="699.2,379.7 718.3,384.2 731.6,391.5 722.7,398.9 719.8,406.2 713.9,403.3 706.5,403.3 697.7,409.2 688.9,413.6 684.5,415.1"/>
<polyline points="684.5,415.1 685.9,422.4 685.9,434.2 691.8,440.1 700.7,451.9 706.5,457.8 709.5,472.5"/>
<polyline points="713.9,403.3 716.8,416.5 725.7,428.3 722.7,434.2 728.6,440.1 747.8,434.2 758.1,431.3 759.5,425.4 752.2,410.7 746.3,404.8 752.2,397.4 749.2,390.0 736.0,379.7 730.1,382.7"/>
<polyline points="734.5,378.3 755.1,354.7 762.5,357.7 766.9,368.0 771.3,376.8 777.2,387.1 783.1,397.4 783.1,404.8 790.0,403.3"/>
<polyline points="747.8,434.2 752.2,443.0 758.1,457.8 761.0,466.6 758.1,475.4"/>
<polyline points="630.0,426.8 637.4,425.4 649.1,432.7 665.3,441.6 662.4,457.8 653.6,466.6 641.8,469.5 641.8,480.0"/>
<polyline points="632.9,373.9 634.4,398.9 632.9,413.6 635.9,425.4"/>
<polyline points="799.1,348.0 796.2,361.2 808.0,374.5 810.9,386.2 819.7,392.1 812.4,409.8 816.8,417.1 830.0,417.1 835.9,418.6"/>
<polyline points="780.0,392.1 782.9,402.4 790.3,403.9 793.2,414.2 802.1,420.1 809.4,428.9 824.2,428.9 828.6,424.5"/>
<polyline points="844.8,348.0 849.2,359.7 859.5,359.7 861.0,371.5 871.3,375.9 880.1,377.4 886.0,384.8 881.6,390.7 881.6,395.1"/>
<polyline points="872.7,375.9 874.2,365.6 887.4,355.3 905.1,353.9 912.5,352.4 918.4,339.1 915.4,327.4 909.5,320.0"/>
<polyline points="927.2,346.5 927.2,356.8 936.0,368.6 927.2,378.9 928.7,389.2 934.5,393.6 940.0,395.1"/>
<polyline points="918.4,327.4 927.2,328.8 940.0,333.2"/>
<polyline points="965.3,300.0 966.8,308.8 974.2,319.1 975.6,330.9 981.5,344.2 984.5,350.0 983.0,366.2 981.5,378.0 987.4,386.8 981.5,392.7 980.0,398.6"/>
<polyline points="930.0,329.4 940.3,332.4 943.2,336.8 943.2,342.7 949.1,344.2 960.9,338.3 966.8,330.9 975.6,330.9"/>
<polyline points="930.0,344.2 938.8,350.0 943.2,351.5 947.7,350.0 950.6,357.4 953.6,366.2 956.5,370.7 956.5,379.5 938.8,382.4 935.9,388.3 938.8,395.7"/>
<polyline points="930.0,360.3 935.9,367.7 932.9,376.5 930.0,378.0"/>
<polyline points="984.5,350.0 994.8,353.0 1003.6,355.9 1013.9,353.0 1019.8,350.0 1018.3,328.0"/>
<polyline points="1013.9,353.0 1013.9,358.9 1009.5,363.3 1015.4,372.1 1019.8,385.4 1019.8,395.7 1022.7,403.0 1021.3,417.8 1033.0,410.4 1050.7,408.9 1062.5,416.3 1065.4,422.2"/>
<polyline points="1068.4,329.4 1068.4,341.2 1059.5,347.1 1058.1,355.9 1055.1,358.9 1058.1,370.7 1058.1,378.0 1065.4,388.3 1069.8,395.7"/>
<polyline points="832.1,221.2 829.1,231.5 826.2,240.3 838.0,240.3 840.9,249.2 848.3,256.5 857.1,266.8 860.0,274.2 846.8,287.4 845.3,294.8 835.0,299.2 832.1,305.1 823.2,308.0"/>
<polyline points="860.0,274.2 868.9,280.1 883.6,283.0 892.4,288.9 904.2,287.4 918.9,299.2 927.8,293.3 939.5,286.0 930.7,268.3 924.8,260.9 913.0,260.9 907.1,258.0"/>
<polyline points="860.0,274.2 865.9,269.8 877.7,259.5 891.0,260.9 901.3,262.4 908.6,259.5 910.1,249.2 907.1,240.3 921.9,228.6 916.0,219.7"/>
<polyline points="832.1,306.6 838.0,308.0 842.4,305.1 845.3,311.0 857.1,315.4 863.0,313.9 876.2,311.0 879.2,306.6 886.5,311.0 892.4,311.0 893.9,297.7 895.4,290.4"/>
<polyline points="970.0,227.1 963.1,231.5 966.0,238.9 970.0,240.3"/>
<polyline points="970.2,219.8 961.1,229.0 965.7,238.1 973.3,244.2 977.9,251.8 979.4,264.0 976.3,270.1 980.9,279.3 973.3,276.2 964.1,279.3 955.0,280.8"/>
<polyline points="993.1,245.7 1003.8,236.6 1009.9,238.1 1012.9,244.2 1016.0,233.5"/>
<polyline points="1016.0,232.0 1028.2,244.2 1022.1,257.9 1017.5,264.0 1020.6,273.2 1031.2,282.3 1040.4,283.9 1046.5,279.3 1058.7,273.2 1064.8,264.0"/>
<polyline points="993.1,245.7 991.6,256.4 988.5,268.6 991.6,282.3 990.1,285.4"/>
<polyline points="1064.8,264.0 1061.7,276.2 1064.8,291.5 1058.7,306.7 1051.1,315.9 1064.8,317.4 1070.9,322.0"/>
<polyline points="980.9,279.3 985.5,285.4 990.1,282.3"/>
<polyline points="645.7,263.3 633.9,266.2 620.6,272.1 611.8,276.5 607.4,286.8 597.1,295.7 594.1,304.5 583.8,311.9 575.0,313.3"/>
<polyline points="645.7,263.3 647.1,247.1 651.5,239.7 666.3,242.7 678.0,241.2 686.9,244.2 692.8,239.7 713.4,214.7"/>
<polyline points="692.8,239.7 707.5,254.5 714.8,258.9 726.6,260.3 735.0,264.8"/>
<polyline points="707.5,255.9 700.1,264.8 692.8,270.7 695.7,279.5 689.8,294.2 683.9,303.0 683.9,317.8 681.0,328.1 683.9,340.0"/>
<polyline points="651.5,272.1 653.0,270.7 661.8,275.1 669.2,272.1 678.0,273.6 686.9,270.7 692.8,270.7"/>
<polyline points="645.7,263.3 644.2,272.1 651.5,276.5 648.6,303.0 650.1,316.3 644.2,328.1 642.7,340.0"/>
<polyline points="683.9,320.7 703.1,317.8 719.2,317.8 735.0,323.6"/>
<polyline points="575.0,313.3 588.2,313.3 601.5,316.3 611.8,317.8 623.6,323.6 630.9,329.5 644.2,329.5 666.3,329.5 678.0,331.0 681.0,328.1"/>
<polyline points="680.0,272.1 685.9,269.1 693.2,272.1 696.2,280.9 690.3,292.7 685.9,305.9 682.9,316.2 685.9,322.1 680.0,328.0"/>
<polyline points="685.9,322.1 709.4,317.7 721.2,320.7 735.9,326.5 746.2,325.1 768.3,325.1 777.1,322.1 766.8,304.5 772.7,301.5 774.2,283.9 765.4,280.9 759.5,279.4 766.8,275.0 756.5,264.7"/>
<polyline points="768.3,325.1 775.7,326.5 791.9,328.0 796.3,326.5 809.5,332.4"/>
<polyline points="708.0,250.0 706.5,255.9 697.7,266.2 693.2,272.1"/>
<polyline points="708.0,255.9 719.7,260.3 727.1,263.2 738.9,261.8"/>
<polyline points="681.5,328.0 687.4,338.3 685.9,344.2 693.2,353.0 700.6,364.8 697.7,376.6"/>
<polyline points="759.5,356.0 765.4,367.8 772.7,379.5 775.7,390.0"/>
<polyline points="797.8,350.1 796.3,361.9 808.1,375.1 812.5,390.0"/>
<polyline points="548.6,238.2 570.7,232.4 579.5,230.9"/>
<polyline points="529.4,244.1 530.9,251.5 541.2,269.2 545.6,273.6 550.0,286.8 548.6,295.7 554.5,307.4 558.9,313.3"/>
<polyline points="548.6,238.2 555.9,254.4 564.8,267.7 572.1,273.6 576.5,279.5"/>
<polyline points="511.8,276.5 520.6,286.8 530.9,297.1 536.8,300.1 544.2,307.4 553.0,313.3 561.8,319.2"/>
<polyline points="586.8,316.3 592.7,319.2 591.3,328.0 594.2,341.3 603.0,351.6 608.9,358.9"/>
<polyline points="647.2,244.1 645.7,270.6 650.1,276.5 656.0,273.6 660.0,273.6"/>
<polyline points="650.1,276.5 648.7,313.3 651.6,320.7 645.7,328.0 660.0,328.0"/>
<polyline points="558.3,508.6 559.9,524.3 569.3,527.4 581.9,525.1 600.7,525.9"/>
<polyline points="530.0,524.3 539.4,529.0 544.1,540.0 552.0,543.2 567.7,555.7 566.1,563.6"/>
<polyline points="607.0,480.3 614.9,481.9 622.7,480.3 638.4,475.6 641.6,474.0 640.0,489.7 635.3,499.1"/>
<polyline points="489.7,349.6 495.5,357.9 508.7,359.6 523.6,354.6 525.2,336.4 535.0,331.4"/>
<polyline points="495.5,366.2 510.4,369.5 521.9,379.4 535.0,386.0"/>
</g>
</g>
</svg><div class="ctitle">Sobota - 3.1.2026</div></div>
  <div class="map"><svg width="918" height="500" viewBox="274 101 918 500" style="display:block;font-family:'Liberation Sans',sans-serif">
<defs><filter id="bl" x="-50%" y="-50%" width="200%" height="200%"><feGaussianBlur stdDeviation="6"/></filter><filter id="bl2" x="-30%" y="-30%" width="160%" height="160%"><feGaussianBlur stdDeviation="3.2"/></filter><filter id="hal"><feMorphology operator="dilate" radius="1"/></filter></defs>
<rect x="274" y="101" width="918" height="500" fill="#f6f4ef"/>
<filter id="tex" x="0" y="0" width="100%" height="100%"><feTurbulence type="fractalNoise" baseFrequency="0.07" numOctaves="3" seed="11"/><feColorMatrix type="matrix" values="0 0 0 0 0.88  0 0 0 0 0.915  0 0 0 0 0.84  4.5 0 0 0 -1.9"/></filter>
<rect x="274" y="101" width="918" height="500" filter="url(#tex)" opacity="0.9"/>
<polygon points="725.7,515.8 815.1,512.5 815.1,548.9 725.7,548.9" fill="#e6eed8" stroke="#e6eed8" stroke-width="6" stroke-linejoin="round" filter="url(#bl2)"/>
<polygon points="947.4,409.9 1000.0,409.9 997.0,466.2 950.7,466.2" fill="#e6eed8" stroke="#e6eed8" stroke-width="6" stroke-linejoin="round" filter="url(#bl2)"/>
<polygon points="274.0,110.0 320.0,110.0 320.0,160.0 274.0,160.0" fill="#e6eed8" stroke="#e6eed8" stroke-width="6" stroke-linejoin="round" filter="url(#bl2)"/>
<polygon points="400.0,300.0 470.0,280.0 480.0,330.0 420.0,340.0" fill="#e6eed8" stroke="#e6eed8" stroke-width="6" stroke-linejoin="round" filter="url(#bl2)"/>
<polygon points="492.4,205.2 522.1,195.3 551.9,207.7 547.0,230.0 522.1,254.8 497.3,259.8 489.9,237.5" fill="#d4e5c0" stroke="#d4e5c0" stroke-width="4" stroke-linejoin="round" filter="url(#bl2)"/>
<polygon points="462.6,279.7 492.4,272.2 497.3,294.5 482.4,314.4 462.6,314.4" fill="#d4e5c0" stroke="#d4e5c0" stroke-width="4" stroke-linejoin="round" filter="url(#bl2)"/>
<polygon points="313.7,220.1 328.6,217.6 328.6,254.8 313.7,254.8" fill="#d4e5c0" stroke="#d4e5c0" stroke-width="4" stroke-linejoin="round" filter="url(#bl2)"/>
<polygon points="547.0,175.4 574.0,165.5 574.0,205.2 551.9,205.2" fill="#d4e5c0" stroke="#d4e5c0" stroke-width="4" stroke-linejoin="round" filter="url(#bl2)"/>
<polygon points="574.0,165.5 598.8,163.0 613.7,182.9 611.2,200.3 574.0,200.3" fill="#d4e5c0" stroke="#d4e5c0" stroke-width="4" stroke-linejoin="round" filter="url(#bl2)"/>
<polygon points="613.7,150.6 643.5,148.1 648.4,175.4 638.5,185.4 618.7,180.4" fill="#d4e5c0" stroke="#d4e5c0" stroke-width="4" stroke-linejoin="round" filter="url(#bl2)"/>
<polygon points="648.4,173.0 678.2,168.0 685.7,187.8 673.3,200.3 648.4,200.3" fill="#d4e5c0" stroke="#d4e5c0" stroke-width="4" stroke-linejoin="round" filter="url(#bl2)"/>
<polygon points="777.5,180.4 804.8,182.9 802.3,192.8 780.0,192.8" fill="#d4e5c0" stroke="#d4e5c0" stroke-width="4" stroke-linejoin="round" filter="url(#bl2)"/>
<polygon points="822.1,195.3 847.0,195.3 847.0,212.7 822.1,212.7" fill="#d4e5c0" stroke="#d4e5c0" stroke-width="4" stroke-linejoin="round" filter="url(#bl2)"/>
<polygon points="973.9,114.2 997.6,122.0 1031.8,135.2 1037.1,153.6 1016.0,153.6 995.0,135.2" fill="#d4e5c0" stroke="#d4e5c0" stroke-width="4" stroke-linejoin="round" filter="url(#bl2)"/>
<polygon points="1079.2,129.9 1110.7,135.2 1137.0,129.9 1150.2,166.8 1147.5,219.4 1110.7,211.5 1084.4,193.1 1079.2,166.8" fill="#d4e5c0" stroke="#d4e5c0" stroke-width="4" stroke-linejoin="round" filter="url(#bl2)"/>
<polygon points="1058.1,227.2 1097.6,237.8 1137.0,243.0 1150.2,264.1 1150.2,285.1 1084.4,285.1 1063.4,258.8" fill="#d4e5c0" stroke="#d4e5c0" stroke-width="4" stroke-linejoin="round" filter="url(#bl2)"/>
<polygon points="874.0,195.7 900.3,200.9 916.1,227.2 895.0,235.1 874.0,232.5" fill="#d4e5c0" stroke="#d4e5c0" stroke-width="4" stroke-linejoin="round" filter="url(#bl2)"/>
<polygon points="952.9,174.6 979.2,185.2 992.4,211.5 963.4,211.5" fill="#d4e5c0" stroke="#d4e5c0" stroke-width="4" stroke-linejoin="round" filter="url(#bl2)"/>
<polygon points="818.4,486.0 851.4,479.4 874.6,499.3 864.7,525.7 831.6,529.0 815.1,512.5" fill="#d4e5c0" stroke="#d4e5c0" stroke-width="4" stroke-linejoin="round" filter="url(#bl2)"/>
<polygon points="914.3,499.3 934.2,495.9 930.9,519.1 914.3,519.1" fill="#d4e5c0" stroke="#d4e5c0" stroke-width="4" stroke-linejoin="round" filter="url(#bl2)"/>
<polygon points="963.9,472.8 997.0,472.8 1000.0,499.3 970.6,499.3" fill="#d4e5c0" stroke="#d4e5c0" stroke-width="4" stroke-linejoin="round" filter="url(#bl2)"/>
<polygon points="1150.0,350.0 1192.0,340.0 1192.0,420.0 1160.0,420.0" fill="#d4e5c0" stroke="#d4e5c0" stroke-width="4" stroke-linejoin="round" filter="url(#bl2)"/>
<polygon points="274.0,560.0 300.0,560.0 320.0,585.0 290.0,601.0 274.0,601.0" fill="#d4e5c0" stroke="#d4e5c0" stroke-width="4" stroke-linejoin="round" filter="url(#bl2)"/>
<polyline points="655.9,153.1 663.3,163.0 673.3,168.0 690.6,175.4" fill="none" stroke="#a9c9ea" stroke-width="1"/>
<polyline points="722.9,163.0 727.8,182.9 717.9,200.3" fill="none" stroke="#a9c9ea" stroke-width="1"/>
<polyline points="752.7,175.4 772.5,182.9 797.3,205.2 812.2,210.2" fill="none" stroke="#a9c9ea" stroke-width="1"/>
<polyline points="900.3,179.9 921.3,190.4 942.4,211.5" fill="none" stroke="#a9c9ea" stroke-width="1"/>
<polyline points="1042.3,200.9 1058.1,216.7 1073.9,237.8" fill="none" stroke="#a9c9ea" stroke-width="1"/>
<polyline points="1105.5,216.7 1126.5,227.2 1137.0,248.3" fill="none" stroke="#a9c9ea" stroke-width="1"/>
<polyline points="957.3,479.4 973.9,486.0 1000.0,476.1" fill="none" stroke="#a9c9ea" stroke-width="1"/>
<polyline points="300.0,300.0 320.0,330.0 330.0,360.0" fill="none" stroke="#a9c9ea" stroke-width="1"/>
<polyline points="1100.0,470.0 1120.0,500.0 1150.0,520.0 1192.0,530.0" fill="none" stroke="#a9c9ea" stroke-width="1"/>
<polyline points="385.0,520.0 395.0,545.0 420.0,560.0 440.0,570.0" fill="none" stroke="#a9c9ea" stroke-width="1"/>
<polyline points="274.0,478.7 296.7,475.9 316.6,481.6 345.0,490.1 359.2,490.1" fill="none" stroke="#a9c9ea" stroke-width="1"/>
<polyline points="370.6,512.8 382.0,524.2 393.3,535.5 404.7,546.9 416.0,558.3 433.1,569.6" fill="none" stroke="#a9c9ea" stroke-width="1"/>
<polyline points="310.9,331.0 316.6,339.5 319.5,348.0" fill="none" stroke="#a9c9ea" stroke-width="1"/>
<polyline points="1068.7,421.8 1091.9,426.5 1108.1,440.4 1122.1,454.3 1131.4,459.0 1154.6,468.3" fill="none" stroke="#a9c9ea" stroke-width="1"/>
<polyline points="992.0,472.9 1015.2,468.3 1038.5,454.3 1057.0,438.1" fill="none" stroke="#a9c9ea" stroke-width="1"/>
<polyline points="1096.5,393.9 1101.2,414.8 1112.8,426.5" fill="none" stroke="#a9c9ea" stroke-width="1"/>
<polyline points="1136.0,384.6 1131.4,403.2 1145.3,417.2" fill="none" stroke="#a9c9ea" stroke-width="1"/>
<polyline points="1168.5,463.6 1177.8,477.6 1192.0,479.9" fill="none" stroke="#a9c9ea" stroke-width="1"/>
<polyline points="900.3,101.0 905.6,116.8 921.3,127.3 926.6,148.3" fill="none" stroke="#a9c9ea" stroke-width="1"/>
<polyline points="979.2,153.6 987.1,179.9 995.0,195.7 1010.8,211.5" fill="none" stroke="#a9c9ea" stroke-width="1"/>
<polyline points="1037.1,140.5 1047.6,166.8 1058.1,187.8 1073.9,200.9" fill="none" stroke="#a9c9ea" stroke-width="1"/>
<polyline points="1073.9,127.3 1079.2,153.6 1089.7,179.9" fill="none" stroke="#a9c9ea" stroke-width="1"/>
<polyline points="1110.7,116.8 1105.5,143.1 1118.6,166.8 1126.5,179.9" fill="none" stroke="#a9c9ea" stroke-width="1"/>
<polyline points="1150.2,179.9 1163.3,200.9 1176.5,206.2 1192.0,200.9" fill="none" stroke="#a9c9ea" stroke-width="1"/>
<polyline points="874.0,140.5 889.8,153.6 900.3,169.4" fill="none" stroke="#a9c9ea" stroke-width="1"/>
<polyline points="764.7,159.8 760.4,159.7 756.8,162.0 753.2,164.3" fill="none" stroke="#b3cfee" stroke-width="0.9"/>
<polyline points="583.7,178.2 579.0,179.6 574.1,180.7 569.6,178.6" fill="none" stroke="#b3cfee" stroke-width="0.9"/>
<polyline points="958.6,187.9 952.2,187.8 947.1,191.4 940.8,192.2" fill="none" stroke="#b3cfee" stroke-width="0.9"/>
<polyline points="743.0,159.4 738.0,155.7 731.7,155.2 725.5,154.1" fill="none" stroke="#b3cfee" stroke-width="0.9"/>
<polyline points="678.7,156.3 674.1,152.1 669.7,147.7 667.3,141.9" fill="none" stroke="#b3cfee" stroke-width="0.9"/>
<polyline points="854.3,210.0 857.0,205.6 858.0,200.5 859.6,195.5 861.3,190.6 865.2,187.2" fill="none" stroke="#b3cfee" stroke-width="0.9"/>
<polyline points="1021.0,168.7 1016.6,169.4 1013.0,172.1 1009.5,174.8" fill="none" stroke="#b3cfee" stroke-width="0.9"/>
<polyline points="584.8,193.4 587.9,188.0 592.4,183.6 597.5,179.8 602.9,176.7 608.1,173.2 614.4,172.4 619.9,175.5" fill="none" stroke="#b3cfee" stroke-width="0.9"/>
<polyline points="859.6,193.2 856.4,199.3 851.8,204.4 847.5,209.9" fill="none" stroke="#b3cfee" stroke-width="0.9"/>
<polyline points="1012.9,207.7 1009.8,210.3 1008.5,214.2 1009.6,218.1 1009.3,222.2 1011.0,225.9" fill="none" stroke="#b3cfee" stroke-width="0.9"/>
<polyline points="716.5,175.4 712.3,176.5 708.2,175.3 704.9,172.4 703.5,168.3 701.0,164.8 698.0,161.7" fill="none" stroke="#b3cfee" stroke-width="0.9"/>
<polyline points="786.7,207.5 790.2,210.5 794.5,212.2 798.8,213.7 802.9,215.7" fill="none" stroke="#b3cfee" stroke-width="0.9"/>
<polyline points="726.1,150.3 720.5,147.7 714.4,148.2 708.8,145.8 705.7,140.5 703.8,134.6 703.9,128.5" fill="none" stroke="#b3cfee" stroke-width="0.9"/>
<polyline points="848.6,206.6 846.5,211.8 843.5,216.5 843.8,222.0 847.2,226.5 852.0,229.2 857.6,229.4 863.1,228.4" fill="none" stroke="#b3cfee" stroke-width="0.9"/>
<polyline points="593.2,150.0 599.3,149.0 603.7,144.7 606.1,139.1 607.4,133.1" fill="none" stroke="#b3cfee" stroke-width="0.9"/>
<polyline points="960.9,212.1 962.6,217.3 960.6,222.4 958.8,227.5 957.2,232.7 958.6,238.0 962.6,241.7 967.4,244.4" fill="none" stroke="#b3cfee" stroke-width="0.9"/>
<polyline points="727.3,203.9 725.2,209.6 724.3,215.6 721.8,221.1 716.7,224.4" fill="none" stroke="#b3cfee" stroke-width="0.9"/>
<polyline points="1039.1,169.4 1039.9,176.1 1043.7,181.8 1045.1,188.4" fill="none" stroke="#b3cfee" stroke-width="0.9"/>
<polyline points="896.6,200.6 893.7,194.8 893.1,188.3 889.8,182.6 884.7,178.4 879.1,175.1" fill="none" stroke="#b3cfee" stroke-width="0.9"/>
<polyline points="1067.7,163.0 1072.5,160.5 1076.3,156.7 1078.7,151.8 1082.2,147.7 1087.5,146.5 1092.7,145.0" fill="none" stroke="#b3cfee" stroke-width="0.9"/>
<polyline points="1152.2,214.2 1155.8,216.7 1159.8,218.2 1163.9,219.7 1166.1,223.4 1167.7,227.4" fill="none" stroke="#b3cfee" stroke-width="0.9"/>
<polyline points="561.2,209.1 566.4,214.0 568.1,221.0 567.0,228.1 563.5,234.4 560.3,240.8" fill="none" stroke="#b3cfee" stroke-width="0.9"/>
<polyline points="672.8,201.3 677.2,201.2 681.5,200.8 685.7,201.9 689.8,200.5 692.9,197.4" fill="none" stroke="#b3cfee" stroke-width="0.9"/>
<polyline points="1187.6,151.8 1186.6,144.2 1188.9,137.0 1195.3,132.8 1202.4,130.1 1208.8,126.0 1215.5,122.3 1219.4,115.8" fill="none" stroke="#b3cfee" stroke-width="0.9"/>
<polyline points="569.0,213.1 574.3,210.1 580.4,210.2 585.9,212.9" fill="none" stroke="#b3cfee" stroke-width="0.9"/>
<polyline points="693.4,166.4 692.4,160.4 691.8,154.5 694.0,148.9 692.5,143.0 693.1,137.1" fill="none" stroke="#b3cfee" stroke-width="0.9"/>
<polyline points="1127.3,193.1 1132.3,190.2 1137.3,187.7 1142.5,185.2 1145.0,180.1 1147.1,174.8 1146.7,169.2 1142.7,165.1" fill="none" stroke="#b3cfee" stroke-width="0.9"/>
<polyline points="1065.1,161.2 1071.5,162.1 1077.5,164.6 1083.3,167.4 1089.2,170.0 1093.7,174.7 1095.2,181.0" fill="none" stroke="#b3cfee" stroke-width="0.9"/>
<polyline points="595.9,162.4 588.9,161.5 582.7,158.1 579.3,151.9" fill="none" stroke="#b3cfee" stroke-width="0.9"/>
<polyline points="840.1,189.8 843.9,195.0 847.6,200.2 848.9,206.5 850.0,212.9 853.2,218.4 856.3,224.1 856.1,230.5" fill="none" stroke="#b3cfee" stroke-width="0.9"/>
<polyline points="1146.4,210.0 1153.3,212.4 1160.5,214.2 1167.4,211.7 1173.0,206.9" fill="none" stroke="#b3cfee" stroke-width="0.9"/>
<polyline points="606.2,193.5 608.4,200.8 609.0,208.3 613.1,214.7" fill="none" stroke="#b3cfee" stroke-width="0.9"/>
<polyline points="1118.0,212.9 1120.9,219.2 1126.5,223.5 1130.8,228.9 1137.0,232.3" fill="none" stroke="#b3cfee" stroke-width="0.9"/>
<polyline points="1006.4,214.6 1009.4,219.0 1010.9,224.2 1015.3,227.3 1019.4,230.7 1023.8,233.7 1029.2,233.4" fill="none" stroke="#b3cfee" stroke-width="0.9"/>
<polyline points="769.5,190.6 771.6,198.1 776.4,204.3 777.4,212.1 782.6,218.0 789.3,222.1 792.8,229.1 799.0,233.9" fill="none" stroke="#b3cfee" stroke-width="0.9"/>
<polyline points="1037.7,203.3 1032.2,201.9 1026.7,200.6 1021.1,200.6 1015.8,202.3 1010.2,201.7" fill="none" stroke="#b3cfee" stroke-width="0.9"/>
<polyline points="675.9,208.2 673.5,200.8 667.5,195.9 664.6,188.7 658.1,184.5 654.4,177.7" fill="none" stroke="#b3cfee" stroke-width="0.9"/>
<polyline points="846.8,172.0 852.1,170.0 855.1,165.2 859.4,161.5 865.1,161.0 869.9,164.0 875.4,165.3 880.9,164.1" fill="none" stroke="#b3cfee" stroke-width="0.9"/>
<polyline points="1149.2,190.9 1147.4,197.7 1148.8,204.6 1151.7,211.0 1157.9,214.3 1164.9,215.2 1170.9,211.5 1177.8,210.0" fill="none" stroke="#b3cfee" stroke-width="0.9"/>
<polyline points="908.3,162.3 903.3,162.9 898.4,162.4 893.6,160.8 889.0,159.0 886.0,155.0 886.1,150.0" fill="none" stroke="#b3cfee" stroke-width="0.9"/>
<polyline points="754.5,164.0 758.4,160.3 762.9,157.3 767.0,153.8 770.2,149.5" fill="none" stroke="#b3cfee" stroke-width="0.9"/>
<polyline points="594.4,158.4 598.6,153.5 599.3,147.1 601.3,140.9" fill="none" stroke="#b3cfee" stroke-width="0.9"/>
<polyline points="800.7,182.9 795.3,179.4 789.0,178.6 782.7,179.8 778.7,184.8 775.7,190.4" fill="none" stroke="#b3cfee" stroke-width="0.9"/>
<polyline points="767.9,214.0 772.3,211.7 776.1,208.5 777.1,203.7 777.2,198.7 777.1,193.7" fill="none" stroke="#b3cfee" stroke-width="0.9"/>
<polyline points="877.7,163.1 881.5,169.1 887.7,172.6 893.4,176.8 899.7,180.2 906.6,181.6 913.2,184.3 920.2,183.0" fill="none" stroke="#b3cfee" stroke-width="0.9"/>
<polyline points="1171.2,581.8 1173.2,575.5 1174.3,568.9 1173.7,562.3 1177.4,556.8" fill="none" stroke="#b3cfee" stroke-width="0.9"/>
<polyline points="773.5,564.9 777.2,562.9 781.2,561.6 785.4,561.7 789.1,563.5" fill="none" stroke="#b3cfee" stroke-width="0.9"/>
<polyline points="768.5,538.6 766.8,532.6 766.6,526.3 769.0,520.5 773.0,515.7 779.1,514.2 785.4,513.9 790.5,510.2" fill="none" stroke="#b3cfee" stroke-width="0.9"/>
<polyline points="720.6,553.5 717.3,557.9 717.5,563.4 717.5,568.9" fill="none" stroke="#b3cfee" stroke-width="0.9"/>
<polyline points="820.3,504.6 820.3,497.4 820.5,490.2 822.4,483.2 820.0,476.5 819.9,469.3 817.4,462.5" fill="none" stroke="#b3cfee" stroke-width="0.9"/>
<polyline points="736.6,504.8 733.5,501.0 732.5,496.2 729.0,492.7 727.9,487.9" fill="none" stroke="#b3cfee" stroke-width="0.9"/>
<polyline points="841.4,476.1 845.0,478.5 847.6,481.9 851.0,484.5 854.2,487.4" fill="none" stroke="#b3cfee" stroke-width="0.9"/>
<polyline points="706.1,477.9 713.8,479.7 721.5,481.4 728.4,485.3 736.1,486.9 743.9,488.1" fill="none" stroke="#b3cfee" stroke-width="0.9"/>
<polyline points="1077.4,600.1 1081.7,602.3 1086.4,601.3 1091.1,600.1 1095.8,601.0 1099.0,604.5 1102.4,607.9 1106.7,609.9" fill="none" stroke="#b3cfee" stroke-width="0.9"/>
<polyline points="803.2,593.9 805.9,597.3 809.5,599.6 813.4,601.2 817.2,603.4" fill="none" stroke="#b3cfee" stroke-width="0.9"/>
<polyline points="1010.8,506.6 1007.9,512.8 1005.1,519.0 1006.8,525.6" fill="none" stroke="#b3cfee" stroke-width="0.9"/>
<polyline points="701.8,534.4 700.3,529.0 697.9,523.9 693.3,520.7 688.1,518.7 682.5,518.0 676.9,518.6" fill="none" stroke="#b3cfee" stroke-width="0.9"/>
<polyline points="895.9,593.1 900.1,587.7 903.3,581.6 905.5,575.1 911.3,571.6" fill="none" stroke="#b3cfee" stroke-width="0.9"/>
<polyline points="989.9,517.3 992.3,510.6 990.3,503.9 989.9,496.9 990.8,489.9 988.4,483.4 990.5,476.6" fill="none" stroke="#b3cfee" stroke-width="0.9"/>
<polyline points="914.6,511.3 911.5,517.8 906.3,522.6 901.7,528.2 895.1,530.7 888.2,532.7" fill="none" stroke="#b3cfee" stroke-width="0.9"/>
<polyline points="800.1,480.6 801.3,474.9 800.9,469.1 797.1,464.7 796.4,459.0 792.9,454.3 789.3,449.8" fill="none" stroke="#b3cfee" stroke-width="0.9"/>
<polyline points="869.1,509.0 869.6,514.6 868.8,520.2 871.0,525.4 872.0,530.9 876.0,534.9" fill="none" stroke="#b3cfee" stroke-width="0.9"/>
<polyline points="946.3,576.3 951.2,576.9 956.0,577.0 960.4,574.8 963.4,571.0 963.9,566.1 963.3,561.3 960.1,557.5" fill="none" stroke="#b3cfee" stroke-width="0.9"/>
<polyline points="817.7,503.8 821.5,506.7 825.8,509.0 829.0,512.5 833.4,514.4 838.2,514.9 842.5,517.0 846.9,519.1" fill="none" stroke="#b3cfee" stroke-width="0.9"/>
<polyline points="982.5,517.2 986.7,512.7 987.7,506.6 991.7,502.0 995.0,496.9 999.2,492.5 1003.1,487.7 1005.5,482.1" fill="none" stroke="#b3cfee" stroke-width="0.9"/>
<polyline points="1100.7,596.8 1101.9,592.9 1102.9,588.9 1104.5,585.0 1103.2,581.1" fill="none" stroke="#b3cfee" stroke-width="0.9"/>
<polyline points="892.6,591.4 899.0,587.7 902.6,581.1 902.6,573.7 902.9,566.3 905.1,559.2 911.0,554.7 918.0,552.1" fill="none" stroke="#b3cfee" stroke-width="0.9"/>
<polyline points="1018.5,570.2 1016.3,566.4 1012.5,564.3 1009.0,561.8 1004.6,562.0 1000.4,560.8 997.8,557.4" fill="none" stroke="#b3cfee" stroke-width="0.9"/>
<polyline points="1008.2,539.2 1015.0,539.9 1021.7,540.8 1028.3,542.5 1035.1,543.2 1041.6,541.2 1048.3,540.2" fill="none" stroke="#b3cfee" stroke-width="0.9"/>
<polyline points="705.1,509.5 701.2,512.7 698.6,517.1 695.8,521.4 692.8,525.6 692.9,530.7 693.7,535.7" fill="none" stroke="#b3cfee" stroke-width="0.9"/>
<polyline points="1019.6,477.2 1016.3,472.3 1011.5,468.7 1007.7,464.1 1007.1,458.1" fill="none" stroke="#b3cfee" stroke-width="0.9"/>
<polyline points="811.6,474.5 807.9,480.3 808.8,487.1 811.6,493.4 811.2,500.2 814.8,506.1" fill="none" stroke="#b3cfee" stroke-width="0.9"/>
<polyline points="943.9,496.3 943.0,501.1 943.5,506.0 941.0,510.2 938.5,514.5" fill="none" stroke="#b3cfee" stroke-width="0.9"/>
<polyline points="792.2,499.3 798.9,502.8 802.5,509.6 809.4,512.9 816.9,511.3 824.5,510.7 832.0,509.2" fill="none" stroke="#b3cfee" stroke-width="0.9"/>
<polyline points="1049.3,494.1 1056.2,491.1 1063.5,493.3 1068.3,499.2 1074.3,503.8 1081.7,505.4 1086.9,511.0" fill="none" stroke="#b3cfee" stroke-width="0.9"/>
<polyline points="1067.2,474.2 1074.4,472.9 1079.9,468.0 1081.8,460.9 1079.4,453.9 1076.2,447.3 1076.9,440.0" fill="none" stroke="#b3cfee" stroke-width="0.9"/>
<polyline points="976.1,569.4 980.3,566.0 984.2,562.3 985.2,556.9 985.9,551.5 985.7,546.1 988.5,541.5" fill="none" stroke="#b3cfee" stroke-width="0.9"/>
<polyline points="795.0,517.7 790.9,518.2 786.9,517.2 783.1,518.8 781.0,522.4 781.4,526.5 779.4,530.1" fill="none" stroke="#b3cfee" stroke-width="0.9"/>
<polyline points="826.5,567.9 822.7,571.7 818.3,574.8 815.3,579.2 811.0,582.5 807.8,586.7 806.0,591.8 807.8,596.8" fill="none" stroke="#b3cfee" stroke-width="0.9"/>
<polyline points="1071.8,590.1 1072.3,594.1 1070.4,597.7 1066.6,599.4" fill="none" stroke="#b3cfee" stroke-width="0.9"/>
<polyline points="384.5,158.5 389.5,163.8 396.6,164.9 402.0,169.8 408.5,173.1 413.8,177.9 420.9,179.7" fill="none" stroke="#b3cfee" stroke-width="0.9"/>
<polyline points="341.5,298.2 339.5,293.2 335.5,289.4 333.1,284.6 329.1,280.8 323.8,280.0 319.0,282.6" fill="none" stroke="#b3cfee" stroke-width="0.9"/>
<polyline points="432.0,175.6 439.0,172.6 443.1,166.3 443.2,158.8 443.3,151.2 445.6,144.1 447.3,136.7" fill="none" stroke="#b3cfee" stroke-width="0.9"/>
<polyline points="341.0,196.5 341.3,204.0 338.8,211.1 333.9,216.9 327.1,220.4 321.6,225.6 318.0,232.2 316.7,239.7" fill="none" stroke="#b3cfee" stroke-width="0.9"/>
<polyline points="346.7,160.6 349.1,165.0 349.0,169.9 348.4,174.9 348.9,179.9 350.2,184.7 348.1,189.2" fill="none" stroke="#b3cfee" stroke-width="0.9"/>
<polyline points="419.1,154.0 424.5,150.2 429.7,146.1 436.2,144.8" fill="none" stroke="#b3cfee" stroke-width="0.9"/>
<polyline points="514.4,310.4 519.4,315.9 523.7,322.2 524.7,329.6" fill="none" stroke="#b3cfee" stroke-width="0.9"/>
<polyline points="329.5,118.2 323.6,122.8 316.4,124.7 309.4,122.1 302.1,123.6 294.7,124.1 287.2,123.3 280.1,125.4" fill="none" stroke="#b3cfee" stroke-width="0.9"/>
<polyline points="379.5,133.4 386.2,137.7 389.5,144.9 389.4,152.9 385.8,160.1" fill="none" stroke="#b3cfee" stroke-width="0.9"/>
<polyline points="391.0,186.1 390.3,191.4 389.4,196.5 391.5,201.3 395.9,204.2 400.6,206.5 405.2,209.0 409.2,212.4" fill="none" stroke="#b3cfee" stroke-width="0.9"/>
<polyline points="300.1,138.5 300.4,144.1 297.4,148.9 295.6,154.2 293.4,159.4 292.3,164.9" fill="none" stroke="#b3cfee" stroke-width="0.9"/>
<polyline points="393.1,298.9 388.6,303.7 382.2,305.0 375.9,307.0 371.2,311.6 369.5,317.9" fill="none" stroke="#b3cfee" stroke-width="0.9"/>
<polyline points="299.9,233.3 305.4,235.3 310.7,237.6 315.5,241.0 317.7,246.4 322.5,249.7" fill="none" stroke="#b3cfee" stroke-width="0.9"/>
<polyline points="451.9,185.9 451.3,190.6 452.8,195.0 456.5,197.8 460.7,200.0 463.8,203.5 465.3,207.9 464.8,212.6" fill="none" stroke="#b3cfee" stroke-width="0.9"/>
<polyline points="360.3,292.7 354.4,298.0 346.6,299.1 339.0,301.4" fill="none" stroke="#b3cfee" stroke-width="0.9"/>
<polyline points="532.6,243.1 537.5,238.7 543.0,235.1 546.5,229.6 549.9,223.9" fill="none" stroke="#b3cfee" stroke-width="0.9"/>
<polyline points="435.7,110.6 434.8,115.1 431.3,118.1 426.9,119.4 423.4,122.4 418.8,123.2 414.4,121.8 410.5,119.3" fill="none" stroke="#b3cfee" stroke-width="0.9"/>
<polyline points="465.0,175.2 459.4,172.2 453.1,170.8 446.8,170.2 440.5,168.7 434.2,168.0 428.1,165.8" fill="none" stroke="#b3cfee" stroke-width="0.9"/>
<polyline points="401.8,201.4 405.8,200.8 409.7,200.0 413.7,199.8" fill="none" stroke="#b3cfee" stroke-width="0.9"/>
<polyline points="508.2,292.6 513.7,293.8 519.3,294.0 524.3,296.5 529.3,299.0 533.7,302.5 539.3,302.8" fill="none" stroke="#b3cfee" stroke-width="0.9"/>
<polyline points="282.6,579.9 276.5,583.6 270.5,587.3 265.1,592.0 258.0,592.6 252.2,596.6" fill="none" stroke="#b3cfee" stroke-width="0.9"/>
<polyline points="330.6,599.9 335.3,599.3 339.5,601.7 341.7,605.9" fill="none" stroke="#b3cfee" stroke-width="0.9"/>
<polyline points="284.9,543.7 281.3,546.0 279.2,549.7 275.5,551.7 272.6,554.9" fill="none" stroke="#b3cfee" stroke-width="0.9"/>
<polyline points="327.8,368.9 320.0,368.9 312.2,367.6 304.5,369.2 297.2,372.1 291.8,377.8 287.1,384.1 281.4,389.5" fill="none" stroke="#b3cfee" stroke-width="0.9"/>
<polyline points="292.4,418.8 290.9,414.4 289.6,409.9 289.2,405.3 287.9,400.8 289.0,396.2 290.4,391.8" fill="none" stroke="#b3cfee" stroke-width="0.9"/>
<polyline points="312.3,569.2 308.5,565.9 306.1,561.5 302.8,557.7" fill="none" stroke="#b3cfee" stroke-width="0.9"/>
<polyline points="298.8,430.0 298.8,424.5 296.5,419.6 296.0,414.2 292.3,410.2" fill="none" stroke="#b3cfee" stroke-width="0.9"/>
<polyline points="328.1,398.7 335.4,396.2 343.1,396.3 350.3,393.5 356.3,388.7 363.1,385.1 369.5,380.7 374.9,375.2" fill="none" stroke="#b3cfee" stroke-width="0.9"/>
<polyline points="277.2,462.4 282.8,458.9 287.6,454.3 289.3,447.9 289.7,441.3 287.5,435.1 286.2,428.6 285.6,422.0" fill="none" stroke="#b3cfee" stroke-width="0.9"/>
<polyline points="287.5,499.1 291.5,501.4 294.7,504.7 298.2,507.8 302.8,508.3 307.1,506.6 311.7,506.0" fill="none" stroke="#b3cfee" stroke-width="0.9"/>
<polyline points="1124.8,438.0 1128.4,435.7 1132.2,433.8 1136.2,432.4" fill="none" stroke="#b3cfee" stroke-width="0.9"/>
<polyline points="1155.4,388.0 1157.0,383.3 1158.8,378.6 1159.9,373.7 1159.3,368.8 1155.9,365.1 1154.1,360.5" fill="none" stroke="#b3cfee" stroke-width="0.9"/>
<polyline points="1101.1,393.7 1101.9,398.2 1102.6,402.7 1102.4,407.2 1100.3,411.3" fill="none" stroke="#b3cfee" stroke-width="0.9"/>
<polyline points="1116.1,352.6 1122.3,354.4 1128.6,355.9 1134.9,357.8 1141.3,358.6 1147.8,358.8" fill="none" stroke="#b3cfee" stroke-width="0.9"/>
<polyline points="1183.9,313.7 1188.3,312.0 1193.0,311.3 1196.6,308.3 1201.3,307.7 1205.5,309.8 1207.7,313.9" fill="none" stroke="#b3cfee" stroke-width="0.9"/>
<polyline points="1124.2,308.9 1125.4,302.3 1130.4,297.8 1133.9,292.1 1140.1,289.4 1146.7,290.3 1152.8,287.4 1158.9,284.5" fill="none" stroke="#b3cfee" stroke-width="0.9"/>
<polyline points="1115.6,453.8 1113.6,446.3 1115.6,438.8 1115.8,431.0 1113.1,423.7" fill="none" stroke="#b3cfee" stroke-width="0.9"/>
<polyline points="1183.5,407.2 1187.9,403.3 1193.6,401.9 1199.2,400.1 1205.0,400.0 1210.9,400.6 1216.7,399.6 1221.6,396.3" fill="none" stroke="#b3cfee" stroke-width="0.9"/>
<polyline points="1157.3,313.2 1161.5,311.5 1166.0,312.5 1170.6,312.5 1174.6,310.3" fill="none" stroke="#b3cfee" stroke-width="0.9"/>
<polyline points="1102.6,307.1 1098.3,301.9 1094.7,296.1 1090.0,291.2" fill="none" stroke="#b3cfee" stroke-width="0.9"/>
<polyline points="1175.2,439.3 1177.6,432.2 1178.9,424.8 1177.5,417.4" fill="none" stroke="#b3cfee" stroke-width="0.9"/>
<polyline points="1118.7,305.8 1112.4,302.1 1105.1,302.3 1099.0,306.4" fill="none" stroke="#b3cfee" stroke-width="0.9"/>
<polyline points="490.6,147.9 491.7,161.3 487.1,173.8 488.4,187.1 486.3,200.3" fill="none" stroke="#f3cf9f" stroke-width="1.1"/>
<polyline points="534.4,277.2 516.5,272.2 498.3,268.8 479.9,266.5 462.9,259.4 444.9,255.0" fill="none" stroke="#f3cf9f" stroke-width="1.1"/>
<polyline points="475.5,224.2 484.7,209.7 490.5,193.5 495.3,177.1" fill="none" stroke="#f3cf9f" stroke-width="1.1"/>
<polyline points="423.7,167.0 413.7,167.7 403.9,165.4" fill="none" stroke="#f3cf9f" stroke-width="1.1"/>
<polyline points="326.8,214.3 307.5,210.9 288.2,214.2 268.8,211.4 252.5,200.6" fill="none" stroke="#f3cf9f" stroke-width="1.1"/>
<polyline points="340.2,139.0 355.1,139.0 368.9,133.3" fill="none" stroke="#f3cf9f" stroke-width="1.1"/>
<polyline points="367.4,122.8 365.3,104.0 366.0,85.1 364.3,66.2 358.9,48.1 352.2,30.4" fill="none" stroke="#f3cf9f" stroke-width="1.1"/>
<polyline points="429.9,140.2 442.1,155.3 451.2,172.4 458.5,190.5" fill="none" stroke="#f3cf9f" stroke-width="1.1"/>
<polyline points="283.7,234.2 265.6,239.0 248.7,246.9 232.1,255.4" fill="none" stroke="#f3cf9f" stroke-width="1.1"/>
<polyline points="471.1,159.9 459.9,158.3 448.7,159.6 438.5,164.2" fill="none" stroke="#f3cf9f" stroke-width="1.1"/>
<polyline points="360.2,262.0 377.4,263.1 394.4,265.9 411.7,266.1" fill="none" stroke="#f3cf9f" stroke-width="1.1"/>
<polyline points="341.6,319.9 331.5,302.9 330.1,283.2 321.1,265.6 310.2,249.1" fill="none" stroke="#f3cf9f" stroke-width="1.1"/>
<polyline points="555.4,283.0 558.2,297.1 566.3,309.0 577.4,318.0 589.5,325.8" fill="none" stroke="#f3cf9f" stroke-width="1.1"/>
<polyline points="283.7,192.4 266.9,190.1 250.1,188.5 233.7,192.8 217.0,195.5 200.6,199.7" fill="none" stroke="#f3cf9f" stroke-width="1.1"/>
<polyline points="485.9,308.9 472.8,298.0 464.2,283.4 458.2,267.5 454.7,250.8 457.5,234.0" fill="none" stroke="#f3cf9f" stroke-width="1.1"/>
<polyline points="457.5,234.7 446.3,222.2 433.0,211.9 421.1,200.1" fill="none" stroke="#f3cf9f" stroke-width="1.1"/>
<polyline points="302.0,197.1 287.5,187.9 272.3,179.9 256.9,172.6 242.4,163.5 227.1,155.7" fill="none" stroke="#f3cf9f" stroke-width="1.1"/>
<polyline points="467.1,314.0 467.1,333.0 460.9,350.9 448.2,364.9" fill="none" stroke="#f3cf9f" stroke-width="1.1"/>
<polyline points="663.0,502.9 669.9,493.6 677.0,484.4 679.9,473.2" fill="none" stroke="#f3cf9f" stroke-width="1.1"/>
<polyline points="940.1,540.9 934.7,526.8 929.5,512.6 923.1,498.8 923.3,483.7 919.2,469.2" fill="none" stroke="#f3cf9f" stroke-width="1.1"/>
<polyline points="1005.1,521.4 993.8,508.4 979.5,498.6" fill="none" stroke="#f3cf9f" stroke-width="1.1"/>
<polyline points="826.0,478.1 812.5,482.3 799.7,488.5" fill="none" stroke="#f3cf9f" stroke-width="1.1"/>
<polyline points="757.0,499.4 737.7,501.6 718.6,497.9 699.3,496.4 680.3,500.4 664.1,511.0" fill="none" stroke="#f3cf9f" stroke-width="1.1"/>
<polyline points="1059.8,576.1 1045.2,574.4 1032.9,566.4 1019.5,560.2" fill="none" stroke="#f3cf9f" stroke-width="1.1"/>
<polyline points="978.2,577.3 973.5,591.2 974.2,605.8 970.1,619.9 968.0,634.5 961.1,647.4" fill="none" stroke="#f3cf9f" stroke-width="1.1"/>
<polyline points="758.3,519.3 749.4,501.6 746.2,482.0 748.9,462.4 748.8,442.5" fill="none" stroke="#f3cf9f" stroke-width="1.1"/>
<polyline points="987.4,512.0 979.9,499.8 970.9,488.8 967.2,475.0 968.5,460.7 963.7,447.3" fill="none" stroke="#f3cf9f" stroke-width="1.1"/>
<polyline points="1090.1,588.7 1080.5,600.6 1069.1,610.8 1061.2,623.9" fill="none" stroke="#f3cf9f" stroke-width="1.1"/>
<polyline points="642.6,508.4 647.9,493.5 652.4,478.4" fill="none" stroke="#f3cf9f" stroke-width="1.1"/>
<polyline points="1064.7,497.3 1066.9,515.1 1067.2,533.0 1062.5,550.3 1055.0,566.6 1041.8,578.7" fill="none" stroke="#f3cf9f" stroke-width="1.1"/>
<polyline points="1066.5,579.9 1075.6,591.7 1080.3,606.0 1082.4,620.7" fill="none" stroke="#f3cf9f" stroke-width="1.1"/>
<polyline points="669.3,485.5 677.2,494.9 688.5,500.0 699.9,504.8 712.2,505.2 724.5,505.6" fill="none" stroke="#f3cf9f" stroke-width="1.1"/>
<polyline points="894.9,540.7 888.0,550.0 881.1,559.3" fill="none" stroke="#f3cf9f" stroke-width="1.1"/>
<polyline points="775.7,531.0 786.8,522.1 799.0,514.9 812.0,509.3 821.1,498.4 831.4,488.6" fill="none" stroke="#f3cf9f" stroke-width="1.1"/>
<polyline points="1004.1,592.0 1019.3,601.9 1031.5,615.2 1047.5,623.5 1065.3,626.9" fill="none" stroke="#f3cf9f" stroke-width="1.1"/>
<polyline points="846.0,486.6 834.0,500.8 821.6,514.7" fill="none" stroke="#f3cf9f" stroke-width="1.1"/>
<polyline points="1047.0,121.9 1052.7,134.0 1060.8,144.7 1070.4,154.1 1080.0,163.5 1091.0,171.1" fill="none" stroke="#f3cf9f" stroke-width="1.1"/>
<polyline points="1182.1,187.4 1176.0,168.6 1166.9,151.1 1154.8,135.5 1139.8,122.7" fill="none" stroke="#f3cf9f" stroke-width="1.1"/>
<polyline points="930.6,163.8 917.1,160.4 903.8,156.1" fill="none" stroke="#f3cf9f" stroke-width="1.1"/>
<polyline points="811.8,111.7 822.9,107.2 834.4,104.5" fill="none" stroke="#f3cf9f" stroke-width="1.1"/>
<polyline points="1058.7,191.1 1049.8,177.5 1042.3,163.2 1037.5,147.8 1028.5,134.4 1021.9,119.6" fill="none" stroke="#f3cf9f" stroke-width="1.1"/>
<polyline points="849.4,176.5 859.7,163.4 864.1,147.4" fill="none" stroke="#f3cf9f" stroke-width="1.1"/>
<polyline points="1148.1,102.3 1130.4,99.7 1112.6,100.6 1094.9,103.0" fill="none" stroke="#f3cf9f" stroke-width="1.1"/>
<polyline points="761.3,143.6 747.9,137.0 736.8,126.9" fill="none" stroke="#f3cf9f" stroke-width="1.1"/>
<polyline points="826.1,169.9 840.6,169.5 855.0,170.5 867.7,177.5 875.6,189.6 883.9,201.4" fill="none" stroke="#f3cf9f" stroke-width="1.1"/>
<polyline points="820.6,111.1 831.5,116.6 843.6,116.3 855.6,118.2 867.4,115.5 879.1,118.4" fill="none" stroke="#f3cf9f" stroke-width="1.1"/>
<polyline points="615.7,187.1 612.4,201.4 609.8,215.9 603.7,229.3" fill="none" stroke="#f3cf9f" stroke-width="1.1"/>
<polyline points="1143.2,137.2 1156.9,147.8 1168.1,161.0 1179.8,173.7" fill="none" stroke="#f3cf9f" stroke-width="1.1"/>
<polyline points="1149.2,126.2 1165.0,119.2 1181.5,114.8" fill="none" stroke="#f3cf9f" stroke-width="1.1"/>
<polyline points="1076.6,108.9 1070.4,97.3 1068.5,84.3 1067.9,71.2 1065.0,58.4" fill="none" stroke="#f3cf9f" stroke-width="1.1"/>
<polyline points="1080.3,428.8 1084.9,445.0 1089.6,468.3 1094.2,486.9 1103.5,500.8" fill="none" stroke="#9fcfa8" stroke-width="1.2"/>
<polyline points="992.0,479.9 1005.9,477.6 1026.8,472.9 1050.1,463.6" fill="none" stroke="#9fcfa8" stroke-width="1.2"/>
<polygon points="319.5,535.5 333.7,529.9 336.5,538.4 328.0,558.3 319.5,569.6 313.8,566.8 316.6,546.9" fill="#b5d2f0" stroke="#b5d2f0" stroke-width="1" stroke-linejoin="round"/>
<polygon points="603.0,112.0 607.0,107.0 614.0,105.0 624.0,104.0 624.0,112.0" fill="#b5d2f0" stroke="#b5d2f0" stroke-width="1" stroke-linejoin="round"/>
<polyline points="274.0,262.3 301.3,266.0 333.6,267.3 355.9,252.4 378.2,237.5 398.1,236.2 420.4,237.5 432.8,262.3 447.7,259.8 477.5,262.3 497.3,259.8" fill="none" stroke="#f3c894" stroke-width="1.3" stroke-linejoin="round"/>
<polyline points="390.6,185.4 378.2,207.7 370.8,225.1 360.8,247.4 353.4,254.8" fill="none" stroke="#f3c894" stroke-width="1.3" stroke-linejoin="round"/>
<polyline points="390.6,185.4 413.0,182.9 432.8,190.3 462.6,182.9 484.9,165.5 504.8,150.6 524.6,133.3" fill="none" stroke="#f3c894" stroke-width="1.3" stroke-linejoin="round"/>
<polyline points="420.4,207.7 422.9,235.0 432.8,262.3" fill="none" stroke="#f3c894" stroke-width="1.3" stroke-linejoin="round"/>
<polyline points="303.8,267.3 311.2,297.0 321.1,331.0" fill="none" stroke="#f3c894" stroke-width="1.3" stroke-linejoin="round"/>
<polyline points="301.3,262.3 298.8,220.1 303.8,182.9 296.3,150.6 303.8,101.0" fill="none" stroke="#f3c894" stroke-width="1.3" stroke-linejoin="round"/>
<polyline points="480.0,101.0 477.5,133.3 480.0,165.5 489.9,182.9" fill="none" stroke="#f3c894" stroke-width="1.3" stroke-linejoin="round"/>
<polyline points="422.9,207.7 452.7,195.3 489.9,205.2 494.8,240.0 484.9,262.3" fill="none" stroke="#f3c894" stroke-width="1.3" stroke-linejoin="round"/>
<polyline points="432.8,262.3 422.9,299.5 413.0,331.0" fill="none" stroke="#f3c894" stroke-width="1.3" stroke-linejoin="round"/>
<polyline points="274.0,143.2 311.2,143.2 331.1,133.3 348.4,115.9 355.9,101.0" fill="none" stroke="#f3c894" stroke-width="1.3" stroke-linejoin="round"/>
<polyline points="390.6,185.4 393.1,163.0 388.1,145.7" fill="none" stroke="#f3c894" stroke-width="1.3" stroke-linejoin="round"/>
<polyline points="274.0,217.6 288.9,230.0 298.8,240.0" fill="none" stroke="#f3c894" stroke-width="1.3" stroke-linejoin="round"/>
<polyline points="333.6,267.3 348.4,289.6 368.3,304.5 390.6,309.4" fill="none" stroke="#f3c894" stroke-width="1.3" stroke-linejoin="round"/>
<polyline points="422.9,101.0 432.8,120.9 462.6,123.3 489.9,115.9 509.7,101.0" fill="none" stroke="#f3c894" stroke-width="1.3" stroke-linejoin="round"/>
<polyline points="524.6,133.3 542.0,165.5 574.0,158.1" fill="none" stroke="#f3c894" stroke-width="1.3" stroke-linejoin="round"/>
<polyline points="497.3,259.8 517.2,274.7 522.1,289.6" fill="none" stroke="#f3c894" stroke-width="1.3" stroke-linejoin="round"/>
<polyline points="368.3,304.5 380.7,331.0" fill="none" stroke="#f3c894" stroke-width="1.3" stroke-linejoin="round"/>
<polyline points="717.9,148.1 747.7,165.5 757.6,175.4 762.6,187.8 772.5,205.2 780.0,230.0" fill="none" stroke="#f3c894" stroke-width="1.3" stroke-linejoin="round"/>
<polyline points="757.6,163.0 784.9,158.1 822.1,155.6 859.4,153.1 874.0,154.3" fill="none" stroke="#f3c894" stroke-width="1.3" stroke-linejoin="round"/>
<polyline points="638.5,148.1 648.4,165.5 638.5,187.8 628.6,205.2" fill="none" stroke="#f3c894" stroke-width="1.3" stroke-linejoin="round"/>
<polyline points="574.0,150.6 593.9,158.1 608.7,150.6" fill="none" stroke="#f3c894" stroke-width="1.3" stroke-linejoin="round"/>
<polyline points="952.9,101.0 966.1,127.3 973.9,148.3 1000.2,153.6 1016.0,169.4 1005.5,185.2 1002.9,211.5" fill="none" stroke="#f3c894" stroke-width="1.3" stroke-linejoin="round"/>
<polyline points="1031.8,101.0 1029.2,122.0 1037.1,140.5 1021.3,166.8 1037.1,182.5 1063.4,187.8 1084.4,190.4 1097.6,206.2 1126.5,214.1 1142.3,203.6" fill="none" stroke="#f3c894" stroke-width="1.3" stroke-linejoin="round"/>
<polyline points="874.0,177.3 910.8,174.6 934.5,161.5 950.3,145.7 963.4,151.0" fill="none" stroke="#f3c894" stroke-width="1.3" stroke-linejoin="round"/>
<polyline points="1137.0,101.0 1158.1,108.9 1192.0,101.0" fill="none" stroke="#f3c894" stroke-width="1.3" stroke-linejoin="round"/>
<polyline points="1160.7,111.5 1155.4,132.6" fill="none" stroke="#f3c894" stroke-width="1.3" stroke-linejoin="round"/>
<polyline points="1102.8,161.5 1105.5,174.6 1094.9,185.2" fill="none" stroke="#f3c894" stroke-width="1.3" stroke-linejoin="round"/>
<polyline points="1126.5,148.3 1137.0,143.1" fill="none" stroke="#f3c894" stroke-width="1.3" stroke-linejoin="round"/>
<polyline points="874.0,187.8 895.0,200.9 916.1,224.6" fill="none" stroke="#f3c894" stroke-width="1.3" stroke-linejoin="round"/>
<polyline points="1192.0,206.2 1181.7,219.4 1179.1,243.0 1189.6,282.5" fill="none" stroke="#f3c894" stroke-width="1.3" stroke-linejoin="round"/>
<polyline points="805.1,466.2 801.8,499.3 785.3,505.9 748.9,512.5 739.0,532.3 725.7,565.4 722.4,601.2" fill="none" stroke="#f3c894" stroke-width="1.3" stroke-linejoin="round"/>
<polyline points="825.0,449.6 877.9,466.2 897.8,456.2 930.9,446.3 963.9,443.0 1000.0,433.1" fill="none" stroke="#f3c894" stroke-width="1.3" stroke-linejoin="round"/>
<polyline points="871.3,400.0 874.6,433.1 877.9,466.2 887.8,509.2 894.5,532.3" fill="none" stroke="#f3c894" stroke-width="1.3" stroke-linejoin="round"/>
<polyline points="891.1,495.9 930.9,492.6 963.9,495.9" fill="none" stroke="#f3c894" stroke-width="1.3" stroke-linejoin="round"/>
<polyline points="765.4,525.7 815.1,529.0 825.0,558.8 831.6,585.3" fill="none" stroke="#f3c894" stroke-width="1.3" stroke-linejoin="round"/>
<polyline points="600.0,598.5 666.2,591.9 732.3,572.0 798.5,572.0 831.6,568.7" fill="none" stroke="#f3c894" stroke-width="1.3" stroke-linejoin="round"/>
<polyline points="930.9,446.3 957.3,479.4 980.5,525.7" fill="none" stroke="#f3c894" stroke-width="1.3" stroke-linejoin="round"/>
<polyline points="633.1,509.2 659.6,519.1 676.1,539.0" fill="none" stroke="#f3c894" stroke-width="1.3" stroke-linejoin="round"/>
<polyline points="274.0,395.0 300.0,390.0 330.0,380.0 345.0,376.0" fill="none" stroke="#f3c894" stroke-width="1.3" stroke-linejoin="round"/>
<polyline points="274.0,440.0 300.0,445.0 335.0,440.0" fill="none" stroke="#f3c894" stroke-width="1.3" stroke-linejoin="round"/>
<polyline points="274.0,560.0 310.0,540.0 350.0,530.0 380.0,545.0 420.0,570.0 445.0,580.0 480.0,590.0 520.0,601.0" fill="none" stroke="#f3c894" stroke-width="1.3" stroke-linejoin="round"/>
<polyline points="445.0,580.0 430.0,601.0" fill="none" stroke="#f3c894" stroke-width="1.3" stroke-linejoin="round"/>
<polyline points="274.0,500.0 300.0,490.0 330.0,475.0 350.0,470.0" fill="none" stroke="#f3c894" stroke-width="1.3" stroke-linejoin="round"/>
<polyline points="290.0,420.0 300.0,460.0 290.0,520.0 300.0,560.0 310.0,601.0" fill="none" stroke="#f3c894" stroke-width="1.3" stroke-linejoin="round"/>
<polyline points="360.0,520.0 390.0,550.0 400.0,601.0" fill="none" stroke="#f3c894" stroke-width="1.3" stroke-linejoin="round"/>
<polyline points="1065.0,420.0 1090.0,480.0 1110.0,520.0 1140.0,560.0 1192.0,580.0" fill="none" stroke="#f3c894" stroke-width="1.3" stroke-linejoin="round"/>
<polyline points="1087.0,386.0 1120.0,400.0 1150.0,420.0 1192.0,420.0" fill="none" stroke="#f3c894" stroke-width="1.3" stroke-linejoin="round"/>
<polyline points="1100.0,440.0 1130.0,470.0 1192.0,470.0" fill="none" stroke="#f3c894" stroke-width="1.3" stroke-linejoin="round"/>
<polyline points="1020.0,470.0 1035.0,525.0 1060.0,540.0 1100.0,545.0" fill="none" stroke="#f3c894" stroke-width="1.3" stroke-linejoin="round"/>
<polyline points="960.0,460.0 1000.0,480.0 1020.0,470.0" fill="none" stroke="#f3c894" stroke-width="1.3" stroke-linejoin="round"/>
<polyline points="274.0,367.9 285.4,373.6 299.6,373.6 313.8,379.3 339.3,370.8" fill="none" stroke="#f3c894" stroke-width="1.3" stroke-linejoin="round"/>
<polyline points="305.2,331.0 308.1,353.7 302.4,387.8 291.0,410.5 285.4,439.0 274.0,450.3" fill="none" stroke="#f3c894" stroke-width="1.3" stroke-linejoin="round"/>
<polyline points="274.0,402.0 302.4,399.2 342.2,404.9" fill="none" stroke="#f3c894" stroke-width="1.3" stroke-linejoin="round"/>
<polyline points="274.0,427.6 296.7,424.8 316.6,439.0 342.2,444.6" fill="none" stroke="#f3c894" stroke-width="1.3" stroke-linejoin="round"/>
<polyline points="302.4,450.3 310.9,470.2 345.0,484.4 367.8,490.1" fill="none" stroke="#f3c894" stroke-width="1.3" stroke-linejoin="round"/>
<polyline points="274.0,501.5 296.7,498.6 316.6,492.9 336.5,495.8 353.5,504.3" fill="none" stroke="#f3c894" stroke-width="1.3" stroke-linejoin="round"/>
<polyline points="339.3,507.1 345.0,535.5 347.9,558.3 350.7,575.3" fill="none" stroke="#f3c894" stroke-width="1.3" stroke-linejoin="round"/>
<polyline points="274.0,515.7 291.0,512.8 310.9,515.7 330.8,512.8" fill="none" stroke="#f3c894" stroke-width="1.3" stroke-linejoin="round"/>
<polyline points="367.8,515.7 387.6,529.9 407.5,546.9 427.4,564.0 444.5,578.2 458.7,586.7" fill="none" stroke="#f3c894" stroke-width="1.3" stroke-linejoin="round"/>
<polyline points="382.0,529.9 384.8,555.4 393.3,575.3 396.2,601.2" fill="none" stroke="#f3c894" stroke-width="1.3" stroke-linejoin="round"/>
<polyline points="330.8,601.2 342.2,586.7 359.2,578.2 376.3,578.2 396.2,575.3 433.1,581.0 458.7,578.2 474.0,575.3" fill="none" stroke="#f3c894" stroke-width="1.3" stroke-linejoin="round"/>
<polyline points="416.0,601.2 433.1,583.8" fill="none" stroke="#f3c894" stroke-width="1.3" stroke-linejoin="round"/>
<polyline points="325.1,331.0 339.3,342.4 347.9,359.4" fill="none" stroke="#f3c894" stroke-width="1.3" stroke-linejoin="round"/>
<polyline points="274.0,546.9 291.0,549.8 310.9,546.9" fill="none" stroke="#f3c894" stroke-width="1.3" stroke-linejoin="round"/>
<polyline points="274.0,569.6 285.4,572.5" fill="none" stroke="#f3c894" stroke-width="1.3" stroke-linejoin="round"/>
<polyline points="285.4,387.8 310.9,387.8 330.8,393.5" fill="none" stroke="#f3c894" stroke-width="1.3" stroke-linejoin="round"/>
<polyline points="316.6,410.5 325.1,424.8 322.3,450.3" fill="none" stroke="#f3c894" stroke-width="1.3" stroke-linejoin="round"/>
<polyline points="1084.9,393.9 1096.5,407.9 1117.4,410.2 1131.4,419.5 1143.0,421.8 1154.6,410.2 1177.8,400.9 1192.0,393.9" fill="none" stroke="#f3c894" stroke-width="1.3" stroke-linejoin="round"/>
<polyline points="1143.0,421.8 1136.0,449.7 1131.4,472.9 1122.1,482.2 1091.9,489.2 1061.7,491.5 1045.4,500.8 1026.8,510.1" fill="none" stroke="#f3c894" stroke-width="1.3" stroke-linejoin="round"/>
<polyline points="992.0,440.4 1010.6,447.4 1029.2,449.7 1045.4,456.7 1061.7,456.7 1068.7,426.5" fill="none" stroke="#f3c894" stroke-width="1.3" stroke-linejoin="round"/>
<polyline points="1131.4,472.9 1154.6,477.6 1192.0,484.5" fill="none" stroke="#f3c894" stroke-width="1.3" stroke-linejoin="round"/>
<polyline points="1159.2,417.2 1168.5,440.4 1177.8,456.7 1192.0,463.6" fill="none" stroke="#f3c894" stroke-width="1.3" stroke-linejoin="round"/>
<polyline points="1054.7,465.9 1043.1,496.1 1038.5,519.4" fill="none" stroke="#f3c894" stroke-width="1.3" stroke-linejoin="round"/>
<polyline points="992.0,584.4 1015.2,579.8 1038.5,577.4" fill="none" stroke="#f3c894" stroke-width="1.3" stroke-linejoin="round"/>
<polyline points="1108.1,380.0 1117.4,393.9 1117.4,410.2" fill="none" stroke="#f3c894" stroke-width="1.3" stroke-linejoin="round"/>
<polyline points="1191.8,380.0 1184.8,398.6 1177.8,400.9" fill="none" stroke="#f3c894" stroke-width="1.3" stroke-linejoin="round"/>
<polyline points="874.0,127.3 895.0,135.2 913.5,127.3 931.9,116.8" fill="none" stroke="#f3c894" stroke-width="1.3" stroke-linejoin="round"/>
<polyline points="916.1,174.6 926.6,193.1 942.4,211.5" fill="none" stroke="#f3c894" stroke-width="1.3" stroke-linejoin="round"/>
<polyline points="1052.9,101.0 1058.1,122.0 1073.9,127.3" fill="none" stroke="#f3c894" stroke-width="1.3" stroke-linejoin="round"/>
<polyline points="1105.5,101.0 1110.7,116.8 1126.5,127.3" fill="none" stroke="#f3c894" stroke-width="1.3" stroke-linejoin="round"/>
<polyline points="626.5,502.6 633.0,522.4 640.0,543.3 646.0,546.8 658.0,546.0 665.0,549.5 677.0,550.0 686.0,551.5 694.0,555.0 699.3,572.0 715.8,585.3 719.1,601.0" fill="none" stroke="#a3a3b3" stroke-width="1.5" stroke-linejoin="round"/>
<polyline points="320.7,100.0 323.2,130.3 325.7,163.1 320.7,183.3 329.5,195.9 334.6,218.6 339.6,221.1 342.1,206.0 349.7,206.0 362.3,223.6 375.0,237.5 377.5,264.0 385.0,276.6 372.4,286.7 390.0,299.3 405.2,306.9 425.4,317.0 440.5,327.1 452.0,333.0" fill="none" stroke="#a3a3b3" stroke-width="1.5" stroke-linejoin="round"/>
<polyline points="274.0,180.7 294.2,175.7 324.5,175.7" fill="none" stroke="#a3a3b3" stroke-width="1.5" stroke-linejoin="round"/>
<polyline points="420.4,120.2 430.4,142.9 450.6,145.4 455.7,160.6 465.8,173.2 475.9,185.8 491.0,198.4 516.2,198.4 536.4,206.0 546.5,218.6 551.6,228.7" fill="none" stroke="#a3a3b3" stroke-width="1.5" stroke-linejoin="round"/>
<polyline points="687.0,148.0 695.6,150.0 685.7,158.0 698.0,168.0 697.6,176.0" fill="none" stroke="#9a9aac" stroke-width="1.8" stroke-dasharray="5 2" stroke-linejoin="round"/>
<polyline points="932.0,100.7 939.8,116.8 947.6,130.0 945.0,145.7 952.9,156.2 958.2,174.6 963.4,201.0 963.6,205.0 965.0,212.0" fill="none" stroke="#9a9aac" stroke-width="1.8" stroke-dasharray="5 2" stroke-linejoin="round"/>
<polyline points="533.0,101.0 536.5,106.6 540.7,109.0 545.0,107.4 554.7,106.6 558.9,110.8 570.0,130.0 579.6,147.1 584.5,153.8 592.8,157.9 603.8,163.0 611.2,175.4 613.7,196.0" fill="none" stroke="#a2a2b4" stroke-width="3" stroke-linejoin="round"/>
<polyline points="1192.0,114.0 1181.7,127.3 1173.9,153.6 1155.4,174.6 1137.0,193.0 1144.9,206.2 1148.0,240.5 1148.0,257.3 1144.8,269.0 1149.8,277.5 1160.0,288.0 1172.0,300.0 1182.0,320.0 1192.0,340.0" fill="none" stroke="#a2a2b4" stroke-width="3" stroke-linejoin="round"/>
<polyline points="1122.9,287.6 1146.5,295.3 1172.0,300.0" fill="none" stroke="#a2a2b4" stroke-width="3" stroke-linejoin="round"/>
<polyline points="1067.4,431.0 1068.7,426.5 1078.0,428.8 1082.6,435.7 1089.6,449.7 1098.9,463.6 1112.8,463.6 1122.1,470.6 1126.7,482.2 1131.4,493.8 1143.0,493.8 1154.6,490.3 1163.9,493.8 1168.5,503.1 1177.8,510.1 1192.0,514.7" fill="none" stroke="#a2a2b4" stroke-width="3" stroke-linejoin="round"/>
<polyline points="1084.9,570.5 1078.0,582.1 1075.6,601.0" fill="none" stroke="#a2a2b4" stroke-width="3" stroke-linejoin="round"/>
<polyline points="370.6,515.7 370.6,529.9 367.8,535.5 364.9,552.6 367.8,575.3 350.7,578.1 330.8,575.3 319.5,569.6 302.4,564.0 291.0,569.6 285.4,581.0 279.7,586.7 274.0,583.8" fill="none" stroke="#a2a2b4" stroke-width="3" stroke-linejoin="round"/>
<polyline points="279.7,586.7 308.1,598.0 313.8,601.0" fill="none" stroke="#a2a2b4" stroke-width="3" stroke-linejoin="round"/>
<polyline points="274.0,359.4 291.0,345.2 308.1,352.3 316.6,362.3 342.2,365.1 346.4,373.6 349.2,387.8" fill="none" stroke="#a2a2b4" stroke-width="3" stroke-linejoin="round"/>
<polyline points="274.0,530.0 291.0,535.5 299.6,527.0 316.6,512.8 339.3,501.5 353.5,501.5 362.0,495.8" fill="none" stroke="#a2a2b4" stroke-width="3" stroke-linejoin="round"/>
<polyline points="274.0,447.5 285.4,453.2 291.0,458.8 293.9,478.7 291.0,487.3 274.0,490.1" fill="none" stroke="#a2a2b4" stroke-width="3" stroke-linejoin="round"/>
<text x="391.7" y="185.3" text-anchor="middle" font-size="11.2" fill="#555" stroke="#fff" stroke-width="2.5" paint-order="stroke" stroke-opacity="0.8">Olomouc</text>
<text x="303" y="270" text-anchor="middle" font-size="11.2" fill="#555" stroke="#fff" stroke-width="2.5" paint-order="stroke" stroke-opacity="0.8">Brno</text>
<text x="448.8" y="263.5" text-anchor="middle" font-size="11.2" fill="#555" stroke="#fff" stroke-width="2.5" paint-order="stroke" stroke-opacity="0.8">Zlín</text>
<text x="535" y="134" text-anchor="middle" font-size="11.2" fill="#555" stroke="#fff" stroke-width="2.5" paint-order="stroke" stroke-opacity="0.8">Ostrava</text>
<text x="866" y="178.7" text-anchor="middle" font-size="11.2" fill="#555" stroke="#fff" stroke-width="2.5" paint-order="stroke" stroke-opacity="0.8">Nowy Sącz</text>
<text x="1014.6" y="164" text-anchor="middle" font-size="11.2" fill="#555" stroke="#fff" stroke-width="2.5" paint-order="stroke" stroke-opacity="0.8">Krosno</text>
<text x="1153.8" y="145.7" text-anchor="middle" font-size="11.2" fill="#555" stroke="#fff" stroke-width="2.5" paint-order="stroke" stroke-opacity="0.8">Przemyśl</text>
<text x="275.8" y="476.2" text-anchor="middle" font-size="11.2" fill="#555" stroke="#fff" stroke-width="2.5" paint-order="stroke" stroke-opacity="0.8">en</text>
<text x="445" y="584" text-anchor="middle" font-size="11.2" fill="#555" stroke="#fff" stroke-width="2.5" paint-order="stroke" stroke-opacity="0.8">Győr</text>
<text x="550" y="608" text-anchor="middle" font-size="11.2" fill="#555" stroke="#fff" stroke-width="2.5" paint-order="stroke" stroke-opacity="0.8">Tatabánya</text>
<text x="743" y="500.7" text-anchor="middle" font-size="11.2" fill="#555" stroke="#fff" stroke-width="2.5" paint-order="stroke" stroke-opacity="0.8">Salgótarján</text>
<text x="880.9" y="498.4" text-anchor="middle" font-size="11.2" fill="#555" stroke="#fff" stroke-width="2.5" paint-order="stroke" stroke-opacity="0.8">Miskolc</text>
<text x="1007" y="529.5" text-anchor="middle" font-size="11.2" fill="#555" stroke="#fff" stroke-width="2.5" paint-order="stroke" stroke-opacity="0.8">Nyíregyháza</text>
<text x="1162" y="561.7" text-anchor="middle" font-size="11.2" fill="#555" stroke="#fff" stroke-width="2.5" paint-order="stroke" stroke-opacity="0.8">Satu Mare</text>
<text x="1087.7" y="390.7" text-anchor="middle" font-size="11.2" fill="#555" stroke="#fff" stroke-width="2.5" paint-order="stroke" stroke-opacity="0.8">Ужгород</text>
<polygon points="336.8,450.0 335.1,433.0 338.5,416.2 349.4,401.9 348.6,391.0 353.6,375.8 357.0,364.0 365.4,350.6 375.5,339.6 384.8,332.0 394.0,335.4 400.8,338.8 410.8,343.8 419.3,340.5 429.4,343.8 441.1,338.8 451.2,333.7 464.7,322.0 479.9,320.0 482.0,305.2 488.3,301.0 505.1,298.9 509.3,292.6 510.1,277.7 513.5,257.5 520.2,245.7 533.6,240.7 547.1,235.6 552.2,223.8 563.9,213.7 570.7,202.0 577.4,199.4 590.8,200.3 600.9,198.6 614.4,196.9 626.2,197.8 629.5,212.0 631.2,220.5 646.4,220.5 649.7,227.2 651.4,235.6 654.8,223.8 661.5,212.0 664.9,200.3 669.9,193.6 683.7,188.5 690.5,180.1 697.2,176.7 703.9,183.5 710.7,203.6 719.1,210.4 722.4,220.5 734.2,222.2 740.9,218.8 742.6,227.2 746.0,247.4 739.3,260.8 747.7,264.2 760.0,257.1 771.8,261.5 782.1,267.4 785.0,254.2 789.5,242.4 795.3,236.5 804.2,232.1 816.0,221.8 824.8,220.3 833.6,221.8 844.0,223.3 855.7,218.4 870.9,218.4 878.4,227.9 889.8,233.5 901.2,241.1 910.6,233.5 920.1,224.1 918.2,218.4 931.5,216.5 942.8,210.8 952.3,210.8 961.7,214.6 976.9,216.5 988.3,212.7 996.7,212.7 1005.1,218.6 1015.2,230.4 1022.0,224.5 1033.7,232.1 1045.5,238.8 1052.2,250.6 1055.6,260.7 1065.7,264.0 1077.5,269.1 1084.2,274.1 1097.7,277.5 1111.1,285.9 1122.9,287.6 1121.2,299.4 1114.5,312.8 1107.8,322.9 1101.0,333.0 1099.4,343.6 1097.7,352.0 1095.1,360.4 1096.0,368.8 1091.0,373.8 1080.8,380.6 1069.1,394.0 1067.4,407.5 1065.7,421.0 1067.4,431.0 1057.3,436.1 1040.5,436.1 1023.6,442.8 1006.8,437.8 1000.1,429.4 995.0,414.2 993.8,411.1 980.6,401.6 967.3,395.0 952.2,403.5 938.9,404.5 925.7,411.1 910.5,407.3 899.2,403.5 884.1,396.0 868.9,399.7 850.0,403.5 839.8,410.0 828.4,427.0 822.7,442.2 811.4,457.3 792.5,461.1 773.5,476.2 756.5,483.8 741.4,480.0 728.1,470.6 720.5,464.9 709.2,468.7 703.5,476.2 697.8,495.2 678.9,499.9 660.0,502.7 649.7,500.4 634.6,501.4 619.5,503.3 608.1,508.9 602.5,518.4 600.6,529.7 602.5,541.1 611.9,550.6 602.5,552.4 587.3,561.9 568.4,563.8 555.1,565.7 534.3,568.5 507.8,567.6 488.9,565.7 470.0,566.6 461.3,567.0 449.5,561.1 434.4,551.0 421.0,537.6 410.8,524.1 399.1,517.4 390.7,512.3 375.5,510.7 367.1,509.0 367.1,498.9 365.4,490.5 361.2,483.7 352.8,473.6 349.4,460.2 341.9,446.7" fill="#67a872" stroke="none"/>
<polygon points="509.3,292.6 510.1,277.7 513.5,257.5 520.2,245.7 533.6,240.7 547.1,235.6 552.2,223.8 563.9,213.7 570.7,202.0 577.4,199.4 590.8,200.3 600.9,198.6 614.4,196.9 626.2,197.8 629.5,212.0 631.2,220.5 646.4,220.5 649.7,227.2 651.4,235.6 648.0,242.3 622.8,244.0 621.1,252.4 604.3,250.8 594.2,247.4 590.8,233.9 584.1,230.6 577.4,233.9 579.1,249.1 582.4,254.1 579.1,262.5 579.1,279.4 574.0,286.1 577.4,294.5 574.0,305.1 562.2,313.6 558.9,316.9 563.9,318.6 582.4,315.2 592.5,318.6 602.6,315.2 621.1,323.6 636.3,332.0 634.6,340.5 632.9,364.0 636.3,372.4 632.9,380.8 634.6,391.0 627.9,397.7 617.8,406.1 604.3,414.5 597.6,411.1 592.5,394.3 584.1,384.2 577.4,391.0 569.0,396.0 560.6,387.6 555.5,374.1 547.1,364.0 553.8,357.3 552.2,338.8 543.7,330.4 540.4,322.8 518.5,322.0 513.5,315.2 510.1,300.1" fill="#f4ea3c" stroke="#2b2b10" stroke-width="1"/>
<polygon points="795.3,236.5 804.2,232.1 816.0,221.8 824.8,220.3 833.6,221.8 844.0,223.3 855.7,218.4 870.9,218.4 878.4,227.9 889.8,233.5 901.2,241.1 910.6,233.5 920.1,224.1 918.2,218.4 931.5,216.5 942.8,210.8 952.3,210.8 961.7,214.6 976.9,216.5 988.3,212.7 996.7,212.7 1005.1,218.6 1015.2,230.4 1022.0,224.5 1033.7,232.1 1045.5,238.8 1052.2,250.6 1055.6,260.7 1065.7,264.0 1077.5,269.1 1084.2,274.1 1097.7,277.5 1111.1,285.9 1122.9,287.6 1121.2,299.4 1114.5,312.8 1107.8,322.9 1101.0,333.0 1094.3,331.8 1082.5,331.8 1075.8,321.2 1069.1,326.7 1064.0,336.8 1050.6,339.3 1040.5,333.5 1030.0,328.2 1020.2,328.2 1016.5,324.4 1014.0,289.7 1010.3,281.0 1004.1,292.2 999.1,295.9 991.7,286.0 986.7,282.3 981.7,290.9 970.6,289.7 960.6,282.3 949.5,277.3 932.1,268.6 939.6,287.2 927.1,293.4 919.7,299.6 906.0,288.5 896.1,289.7 892.4,303.3 892.4,313.3 895.5,322.5 893.6,333.9 878.4,339.6 859.5,330.1 842.5,347.1 825.4,337.7 817.4,326.3 813.0,319.0 827.7,308.7 833.6,301.3 826.3,295.4 820.4,286.6 810.1,276.3 818.9,271.9 821.9,266.0 818.9,258.6 814.5,248.3 802.7,245.3 795.3,238.0" fill="#f4ea3c" stroke="#2b2b10" stroke-width="1"/>
<polygon points="651.4,235.6 648.0,242.3 622.8,244.0 621.1,252.4 604.3,250.8 594.2,247.4 590.8,233.9 584.1,230.6 577.4,233.9 579.1,249.1 582.4,254.1 579.1,262.5 579.1,279.4 574.0,286.1 577.4,294.5 574.0,305.1 562.2,313.6 558.9,316.9 563.9,318.6 582.4,315.2 592.5,318.6 602.6,315.2 621.1,323.6 636.3,332.0 634.6,340.5 632.9,364.0 636.3,372.4 651.4,380.8 668.2,382.5 684.6,379.7 699.7,376.9 726.2,384.5 735.7,376.0 748.9,362.7 756.5,353.2 773.5,349.5 796.2,351.4 800.0,340.0 804.2,333.7 817.4,326.3 813.0,319.0 827.7,308.7 833.6,301.3 826.3,295.4 820.4,286.6 810.1,276.3 818.9,271.9 821.9,266.0 818.9,258.6 814.5,248.3 802.7,245.3 795.3,238.0 789.5,242.4 785.0,254.2 782.1,267.4 771.8,261.5 760.0,257.1 747.7,264.2 739.3,260.8 746.0,247.4 742.6,227.2 740.9,218.8 734.2,222.2 722.4,220.5 719.1,210.4 710.7,203.6 703.9,183.5 697.2,176.7 690.5,180.1 683.7,188.5 669.9,193.6 664.9,200.3 661.5,212.0 654.8,223.8" fill="#f4c350" stroke="#2b2b10" stroke-width="1"/>
<clipPath id="skc"><polygon points="336.8,450.0 335.1,433.0 338.5,416.2 349.4,401.9 348.6,391.0 353.6,375.8 357.0,364.0 365.4,350.6 375.5,339.6 384.8,332.0 394.0,335.4 400.8,338.8 410.8,343.8 419.3,340.5 429.4,343.8 441.1,338.8 451.2,333.7 464.7,322.0 479.9,320.0 482.0,305.2 488.3,301.0 505.1,298.9 509.3,292.6 510.1,277.7 513.5,257.5 520.2,245.7 533.6,240.7 547.1,235.6 552.2,223.8 563.9,213.7 570.7,202.0 577.4,199.4 590.8,200.3 600.9,198.6 614.4,196.9 626.2,197.8 629.5,212.0 631.2,220.5 646.4,220.5 649.7,227.2 651.4,235.6 654.8,223.8 661.5,212.0 664.9,200.3 669.9,193.6 683.7,188.5 690.5,180.1 697.2,176.7 703.9,183.5 710.7,203.6 719.1,210.4 722.4,220.5 734.2,222.2 740.9,218.8 742.6,227.2 746.0,247.4 739.3,260.8 747.7,264.2 760.0,257.1 771.8,261.5 782.1,267.4 785.0,254.2 789.5,242.4 795.3,236.5 804.2,232.1 816.0,221.8 824.8,220.3 833.6,221.8 844.0,223.3 855.7,218.4 870.9,218.4 878.4,227.9 889.8,233.5 901.2,241.1 910.6,233.5 920.1,224.1 918.2,218.4 931.5,216.5 942.8,210.8 952.3,210.8 961.7,214.6 976.9,216.5 988.3,212.7 996.7,212.7 1005.1,218.6 1015.2,230.4 1022.0,224.5 1033.7,232.1 1045.5,238.8 1052.2,250.6 1055.6,260.7 1065.7,264.0 1077.5,269.1 1084.2,274.1 1097.7,277.5 1111.1,285.9 1122.9,287.6 1121.2,299.4 1114.5,312.8 1107.8,322.9 1101.0,333.0 1099.4,343.6 1097.7,352.0 1095.1,360.4 1096.0,368.8 1091.0,373.8 1080.8,380.6 1069.1,394.0 1067.4,407.5 1065.7,421.0 1067.4,431.0 1057.3,436.1 1040.5,436.1 1023.6,442.8 1006.8,437.8 1000.1,429.4 995.0,414.2 993.8,411.1 980.6,401.6 967.3,395.0 952.2,403.5 938.9,404.5 925.7,411.1 910.5,407.3 899.2,403.5 884.1,396.0 868.9,399.7 850.0,403.5 839.8,410.0 828.4,427.0 822.7,442.2 811.4,457.3 792.5,461.1 773.5,476.2 756.5,483.8 741.4,480.0 728.1,470.6 720.5,464.9 709.2,468.7 703.5,476.2 697.8,495.2 678.9,499.9 660.0,502.7 649.7,500.4 634.6,501.4 619.5,503.3 608.1,508.9 602.5,518.4 600.6,529.7 602.5,541.1 611.9,550.6 602.5,552.4 587.3,561.9 568.4,563.8 555.1,565.7 534.3,568.5 507.8,567.6 488.9,565.7 470.0,566.6 461.3,567.0 449.5,561.1 434.4,551.0 421.0,537.6 410.8,524.1 399.1,517.4 390.7,512.3 375.5,510.7 367.1,509.0 367.1,498.9 365.4,490.5 361.2,483.7 352.8,473.6 349.4,460.2 341.9,446.7"/></clipPath>
<g clip-path="url(#skc)" fill="none" stroke="#1c1c1c" stroke-width="1.1" stroke-linejoin="round" stroke-opacity="0.85">
<polyline points="354.6,374.7 365.6,372.0 377.9,369.2 391.5,366.5 405.2,359.7 407.0,353.0 410.7,344.6"/>
<polyline points="407.0,353.0 413.8,351.7 424.4,361.0 421.6,369.2 429.8,384.3 436.7,382.9 454.4,374.7 454.4,365.1 444.9,355.6 442.1,339.1"/>
<polyline points="429.8,384.3 420.3,396.6 406.6,402.0 405.2,408.9"/>
<polyline points="402.5,379.5 408.6,387.0 397.0,402.0 405.2,408.9"/>
<polyline points="351.9,400.7 371.0,399.3 375.1,400.7 390.2,396.6 398.4,387.0 402.5,379.5"/>
<polyline points="405.2,408.9 399.7,418.5 390.2,433.5 383.3,450.0"/>
<polyline points="399.7,419.8 410.7,423.9 418.9,439.0 423.0,450.0"/>
<polyline points="436.7,382.9 435.3,395.2 446.2,407.5 458.5,415.7 464.0,408.9 473.6,407.5 487.3,418.5"/>
<polyline points="454.4,374.7 466.8,381.5 480.4,385.6 490.0,388.4"/>
<polyline points="472.2,325.5 477.7,344.6 490.0,350.1"/>
<polyline points="473.6,407.5 476.3,396.6 483.2,391.1"/>
<polyline points="450.3,413.0 451.7,425.3 457.2,428.0 455.8,440.3 466.8,443.1 475.0,439.0 483.2,426.7 488.6,418.5"/>
<polyline points="392.4,430.0 383.6,438.8 379.2,452.1 377.7,463.9 364.4,463.9 351.2,460.9"/>
<polyline points="377.7,463.9 388.0,469.7 405.7,456.5 413.0,455.0 420.4,450.6"/>
<polyline points="414.5,430.0 421.8,441.8 420.4,450.6 426.3,456.5 435.1,463.9 446.9,456.5 457.2,449.1 460.1,444.7 471.9,441.8 476.3,430.0"/>
<polyline points="471.9,441.8 473.4,453.6 482.2,458.0 491.0,462.4 495.0,465.3"/>
<polyline points="388.0,469.7 386.5,475.6 390.9,484.5 395.3,491.8 386.5,493.3 383.6,502.1 390.9,509.5"/>
<polyline points="395.3,491.8 399.8,493.3 404.2,496.2 399.8,502.1 390.9,509.5"/>
<polyline points="399.8,488.9 411.5,480.0 418.9,484.5 427.7,480.0 424.8,466.8 423.3,459.4 426.3,456.5"/>
<polyline points="418.9,484.5 429.2,488.9 441.0,493.3 452.8,499.2 467.5,509.5 476.3,518.3 479.2,525.7 476.3,533.0 464.5,546.3 457.2,558.1 455.7,562.5"/>
<polyline points="476.3,518.3 491.0,522.7 495.0,518.3"/>
<polyline points="476.3,456.5 479.2,468.3 470.4,474.2 464.5,483.0 468.9,491.8 473.4,500.7 477.8,508.0 479.2,518.3"/>
<polyline points="480.0,410.9 488.8,419.7 500.6,419.7 509.4,427.1 521.2,423.4 531.5,413.9 538.9,411.6 546.2,411.6 561.0,400.6 563.9,396.2"/>
<polyline points="488.8,419.7 480.0,434.5"/>
<polyline points="521.2,423.4 531.5,438.9 530.0,446.2 544.8,456.5 552.1,455.1 555.1,465.4 550.7,468.3 543.3,469.8 543.3,477.1"/>
<polyline points="561.0,400.6 566.8,413.9 569.8,425.6 574.2,438.9 571.3,444.8 561.0,446.2 559.5,456.5"/>
<polyline points="571.3,444.8 586.0,443.3 596.3,430.0 600.7,427.1 609.5,424.2 615.4,418.3"/>
<polyline points="599.2,427.1 605.1,438.9 612.5,450.7 608.1,462.4 606.6,477.1 615.4,481.6 624.2,480.1 640.0,471.3"/>
<polyline points="612.5,450.7 625.7,444.8 624.2,435.9 633.1,425.6 640.0,424.2"/>
<polyline points="630.1,399.1 634.5,409.4 634.5,424.2"/>
<polyline points="480.0,456.5 491.8,465.4 493.2,475.7 499.1,484.5 515.3,474.2 521.2,475.7 528.6,472.7 543.3,477.1 553.6,486.0 558.0,494.8 555.1,505.1 559.5,520.0"/>
<polyline points="493.2,481.6 493.2,491.9 491.8,505.1 496.2,520.0"/>
<polyline points="524.2,380.0 528.6,391.8 527.1,397.7 535.9,409.4"/>
<polyline points="480.0,393.2 487.4,391.8 494.7,385.9 496.2,380.0"/>
<polyline points="685.9,340.0 687.4,347.4 699.2,359.1 702.1,366.5 697.7,373.9 699.2,378.3"/>
<polyline points="699.2,378.3 694.8,384.2 687.4,387.1 678.6,390.0 674.2,395.9 672.7,401.8 671.2,406.2 666.8,412.1 671.2,419.5 681.5,428.3 684.5,434.2 681.5,441.6 678.6,454.8 672.7,451.9 668.3,443.0 662.4,443.0"/>
<polyline points="699.2,379.7 718.3,384.2 731.6,391.5 722.7,398.9 719.8,406.2 713.9,403.3 706.5,403.3 697.7,409.2 688.9,413.6 684.5,415.1"/>
<polyline points="684.5,415.1 685.9,422.4 685.9,434.2 691.8,440.1 700.7,451.9 706.5,457.8 709.5,472.5"/>
<polyline points="713.9,403.3 716.8,416.5 725.7,428.3 722.7,434.2 728.6,440.1 747.8,434.2 758.1,431.3 759.5,425.4 752.2,410.7 746.3,404.8 752.2,397.4 749.2,390.0 736.0,379.7 730.1,382.7"/>
<polyline points="734.5,378.3 755.1,354.7 762.5,357.7 766.9,368.0 771.3,376.8 777.2,387.1 783.1,397.4 783.1,404.8 790.0,403.3"/>
<polyline points="747.8,434.2 752.2,443.0 758.1,457.8 761.0,466.6 758.1,475.4"/>
<polyline points="630.0,426.8 637.4,425.4 649.1,432.7 665.3,441.6 662.4,457.8 653.6,466.6 641.8,469.5 641.8,480.0"/>
<polyline points="632.9,373.9 634.4,398.9 632.9,413.6 635.9,425.4"/>
<polyline points="799.1,348.0 796.2,361.2 808.0,374.5 810.9,386.2 819.7,392.1 812.4,409.8 816.8,417.1 830.0,417.1 835.9,418.6"/>
<polyline points="780.0,392.1 782.9,402.4 790.3,403.9 793.2,414.2 802.1,420.1 809.4,428.9 824.2,428.9 828.6,424.5"/>
<polyline points="844.8,348.0 849.2,359.7 859.5,359.7 861.0,371.5 871.3,375.9 880.1,377.4 886.0,384.8 881.6,390.7 881.6,395.1"/>
<polyline points="872.7,375.9 874.2,365.6 887.4,355.3 905.1,353.9 912.5,352.4 918.4,339.1 915.4,327.4 909.5,320.0"/>
<polyline points="927.2,346.5 927.2,356.8 936.0,368.6 927.2,378.9 928.7,389.2 934.5,393.6 940.0,395.1"/>
<polyline points="918.4,327.4 927.2,328.8 940.0,333.2"/>
<polyline points="965.3,300.0 966.8,308.8 974.2,319.1 975.6,330.9 981.5,344.2 984.5,350.0 983.0,366.2 981.5,378.0 987.4,386.8 981.5,392.7 980.0,398.6"/>
<polyline points="930.0,329.4 940.3,332.4 943.2,336.8 943.2,342.7 949.1,344.2 960.9,338.3 966.8,330.9 975.6,330.9"/>
<polyline points="930.0,344.2 938.8,350.0 943.2,351.5 947.7,350.0 950.6,357.4 953.6,366.2 956.5,370.7 956.5,379.5 938.8,382.4 935.9,388.3 938.8,395.7"/>
<polyline points="930.0,360.3 935.9,367.7 932.9,376.5 930.0,378.0"/>
<polyline points="984.5,350.0 994.8,353.0 1003.6,355.9 1013.9,353.0 1019.8,350.0 1018.3,328.0"/>
<polyline points="1013.9,353.0 1013.9,358.9 1009.5,363.3 1015.4,372.1 1019.8,385.4 1019.8,395.7 1022.7,403.0 1021.3,417.8 1033.0,410.4 1050.7,408.9 1062.5,416.3 1065.4,422.2"/>
<polyline points="1068.4,329.4 1068.4,341.2 1059.5,347.1 1058.1,355.9 1055.1,358.9 1058.1,370.7 1058.1,378.0 1065.4,388.3 1069.8,395.7"/>
<polyline points="832.1,221.2 829.1,231.5 826.2,240.3 838.0,240.3 840.9,249.2 848.3,256.5 857.1,266.8 860.0,274.2 846.8,287.4 845.3,294.8 835.0,299.2 832.1,305.1 823.2,308.0"/>
<polyline points="860.0,274.2 868.9,280.1 883.6,283.0 892.4,288.9 904.2,287.4 918.9,299.2 927.8,293.3 939.5,286.0 930.7,268.3 924.8,260.9 913.0,260.9 907.1,258.0"/>
<polyline points="860.0,274.2 865.9,269.8 877.7,259.5 891.0,260.9 901.3,262.4 908.6,259.5 910.1,249.2 907.1,240.3 921.9,228.6 916.0,219.7"/>
<polyline points="832.1,306.6 838.0,308.0 842.4,305.1 845.3,311.0 857.1,315.4 863.0,313.9 876.2,311.0 879.2,306.6 886.5,311.0 892.4,311.0 893.9,297.7 895.4,290.4"/>
<polyline points="970.0,227.1 963.1,231.5 966.0,238.9 970.0,240.3"/>
<polyline points="970.2,219.8 961.1,229.0 965.7,238.1 973.3,244.2 977.9,251.8 979.4,264.0 976.3,270.1 980.9,279.3 973.3,276.2 964.1,279.3 955.0,280.8"/>
<polyline points="993.1,245.7 1003.8,236.6 1009.9,238.1 1012.9,244.2 1016.0,233.5"/>
<polyline points="1016.0,232.0 1028.2,244.2 1022.1,257.9 1017.5,264.0 1020.6,273.2 1031.2,282.3 1040.4,283.9 1046.5,279.3 1058.7,273.2 1064.8,264.0"/>
<polyline points="993.1,245.7 991.6,256.4 988.5,268.6 991.6,282.3 990.1,285.4"/>
<polyline points="1064.8,264.0 1061.7,276.2 1064.8,291.5 1058.7,306.7 1051.1,315.9 1064.8,317.4 1070.9,322.0"/>
<polyline points="980.9,279.3 985.5,285.4 990.1,282.3"/>
<polyline points="645.7,263.3 633.9,266.2 620.6,272.1 611.8,276.5 607.4,286.8 597.1,295.7 594.1,304.5 583.8,311.9 575.0,313.3"/>
<polyline points="645.7,263.3 647.1,247.1 651.5,239.7 666.3,242.7 678.0,241.2 686.9,244.2 692.8,239.7 713.4,214.7"/>
<polyline points="692.8,239.7 707.5,254.5 714.8,258.9 726.6,260.3 735.0,264.8"/>
<polyline points="707.5,255.9 700.1,264.8 692.8,270.7 695.7,279.5 689.8,294.2 683.9,303.0 683.9,317.8 681.0,328.1 683.9,340.0"/>
<polyline points="651.5,272.1 653.0,270.7 661.8,275.1 669.2,272.1 678.0,273.6 686.9,270.7 692.8,270.7"/>
<polyline points="645.7,263.3 644.2,272.1 651.5,276.5 648.6,303.0 650.1,316.3 644.2,328.1 642.7,340.0"/>
<polyline points="683.9,320.7 703.1,317.8 719.2,317.8 735.0,323.6"/>
<polyline points="575.0,313.3 588.2,313.3 601.5,316.3 611.8,317.8 623.6,323.6 630.9,329.5 644.2,329.5 666.3,329.5 678.0,331.0 681.0,328.1"/>
<polyline points="680.0,272.1 685.9,269.1 693.2,272.1 696.2,280.9 690.3,292.7 685.9,305.9 682.9,316.2 685.9,322.1 680.0,328.0"/>
<polyline points="685.9,322.1 709.4,317.7 721.2,320.7 735.9,326.5 746.2,325.1 768.3,325.1 777.1,322.1 766.8,304.5 772.7,301.5 774.2,283.9 765.4,280.9 759.5,279.4 766.8,275.0 756.5,264.7"/>
<polyline points="768.3,325.1 775.7,326.5 791.9,328.0 796.3,326.5 809.5,332.4"/>
<polyline points="708.0,250.0 706.5,255.9 697.7,266.2 693.2,272.1"/>
<polyline points="708.0,255.9 719.7,260.3 727.1,263.2 738.9,261.8"/>
<polyline points="681.5,328.0 687.4,338.3 685.9,344.2 693.2,353.0 700.6,364.8 697.7,376.6"/>
<polyline points="759.5,356.0 765.4,367.8 772.7,379.5 775.7,390.0"/>
<polyline points="797.8,350.1 796.3,361.9 808.1,375.1 812.5,390.0"/>
<polyline points="548.6,238.2 570.7,232.4 579.5,230.9"/>
<polyline points="529.4,244.1 530.9,251.5 541.2,269.2 545.6,273.6 550.0,286.8 548.6,295.7 554.5,307.4 558.9,313.3"/>
<polyline points="548.6,238.2 555.9,254.4 564.8,267.7 572.1,273.6 576.5,279.5"/>
<polyline points="511.8,276.5 520.6,286.8 530.9,297.1 536.8,300.1 544.2,307.4 553.0,313.3 561.8,319.2"/>
<polyline points="586.8,316.3 592.7,319.2 591.3,328.0 594.2,341.3 603.0,351.6 608.9,358.9"/>
<polyline points="647.2,244.1 645.7,270.6 650.1,276.5 656.0,273.6 660.0,273.6"/>
<polyline points="650.1,276.5 648.7,313.3 651.6,320.7 645.7,328.0 660.0,328.0"/>
<polyline points="558.3,508.6 559.9,524.3 569.3,527.4 581.9,525.1 600.7,525.9"/>
<polyline points="530.0,524.3 539.4,529.0 544.1,540.0 552.0,543.2 567.7,555.7 566.1,563.6"/>
<polyline points="607.0,480.3 614.9,481.9 622.7,480.3 638.4,475.6 641.6,474.0 640.0,489.7 635.3,499.1"/>
<polyline points="489.7,349.6 495.5,357.9 508.7,359.6 523.6,354.6 525.2,336.4 535.0,331.4"/>
<polyline points="495.5,366.2 510.4,369.5 521.9,379.4 535.0,386.0"/>
</g>
<text x="499.4" y="333.4" text-anchor="middle" font-size="11.2" fill="#000" fill-opacity="0.22">Trenčín</text>
<text x="597.4" y="265.4" text-anchor="middle" font-size="11.2" fill="#000" fill-opacity="0.22">Žilina</text>
<text x="438" y="441.2" text-anchor="middle" font-size="11.2" fill="#000" fill-opacity="0.22">Trnava</text>
<text x="507.2" y="454.8" text-anchor="middle" font-size="11.2" fill="#000" fill-opacity="0.22">Nitra</text>
<text x="373" y="487.9" text-anchor="middle" font-size="11.2" fill="#000" fill-opacity="0.22">Bratislava</text>
<text x="940" y="311.7" text-anchor="middle" font-size="11.2" fill="#000" fill-opacity="0.22">Prešov</text>
<text x="943" y="370.4" text-anchor="middle" font-size="11.2" fill="#000" fill-opacity="0.22">Košice</text>
<text x="699.6" y="364.2" text-anchor="middle" font-size="11.2" fill="#000" fill-opacity="0.22">Slovensko</text>
<polygon points="336.3,450.0 336.6,447.2 336.0,444.4 336.1,441.5 335.9,438.6 334.6,435.9 334.2,432.8 336.3,430.3 335.8,427.3 336.3,424.5 338.2,422.0 337.9,419.0 339.0,416.6 340.0,414.1 341.8,412.3 342.7,409.7 344.9,408.2 346.8,406.4 347.9,404.0 349.8,401.9 349.5,399.2 348.2,396.5 349.3,393.7 348.8,391.1 349.1,388.4 349.5,385.7 351.7,383.6 351.9,380.9 353.1,378.5 354.3,376.0 354.8,373.0 356.0,370.1 356.0,366.9 357.5,364.3 358.3,361.7 360.5,359.9 361.8,357.7 362.0,354.7 363.4,352.5 365.0,350.3 368.0,349.0 369.4,346.1 371.6,344.2 373.2,341.6 375.5,339.6 377.7,337.5 380.0,335.6 382.6,334.0 384.7,332.1 387.6,333.8 390.8,334.6 393.7,336.1 396.0,337.1 398.1,338.5 400.7,339.1 403.6,339.5 405.5,341.9 407.9,343.3 411.1,344.5 413.7,342.8 416.6,342.0 419.5,340.0 421.6,341.9 424.3,342.3 427.0,342.6 429.1,343.1 432.0,343.4 434.4,342.6 436.1,340.1 439.0,340.3 441.0,338.7 443.3,337.0 446.0,335.9 448.9,335.4 451.6,334.2 452.6,331.4 455.2,330.5 456.4,328.1 459.2,327.3 460.6,325.1 463.2,324.2 464.8,322.9 467.2,321.7 469.9,322.2 472.3,320.7 474.7,319.9 477.4,320.5 479.1,319.9 479.8,317.0 480.6,314.1 481.4,311.1 481.0,308.1 481.5,304.5 484.5,304.4 486.0,302.1 488.4,301.8 491.2,301.4 493.9,300.1 496.7,299.9 499.5,299.6 502.3,299.5 505.2,299.0 506.6,296.9 508.1,294.8 510.1,292.6 509.5,289.6 509.5,286.6 510.2,283.7 509.5,280.7 509.7,277.6 511.4,275.3 511.0,272.7 511.5,270.1 510.9,267.5 512.1,265.0 512.8,262.6 512.2,259.9 513.7,257.6 515.0,255.3 515.5,252.4 517.7,250.5 518.8,248.0 520.3,246.0 522.8,244.5 525.7,244.0 528.4,243.1 530.6,240.9 533.3,240.0 536.4,240.0 539.3,239.4 541.5,237.2 544.4,236.5 547.3,235.7 547.8,233.1 548.9,230.8 549.9,228.4 551.0,226.1 552.3,223.9 553.9,221.8 556.0,220.3 558.4,219.1 559.4,216.4 562.0,215.5 564.3,213.9 565.0,211.2 566.2,208.8 568.5,207.0 568.9,204.1 570.5,201.5 574.0,200.6 577.4,199.8 580.1,198.9 582.8,199.4 585.5,199.6 588.1,200.7 590.8,200.2 593.4,200.5 595.8,198.9 598.3,198.7 600.9,198.9 603.7,198.9 606.3,197.8 608.9,197.1 611.6,196.6 614.4,197.0 617.4,196.6 620.3,197.9 623.2,198.2 626.8,197.7 627.2,200.5 627.0,203.6 627.9,206.4 628.3,209.3 629.8,211.9 630.7,214.7 631.0,217.6 631.2,221.0 633.7,220.1 636.3,220.2 638.8,220.4 641.3,220.4 643.9,220.3 645.7,220.8 648.6,223.6 650.6,227.0 649.5,230.2 650.2,232.9 652.2,235.8 652.1,232.6 653.9,229.9 654.7,227.0 654.4,223.6 656.5,221.7 658.0,219.4 659.1,216.9 660.2,214.4 661.1,211.9 662.1,209.0 662.7,206.0 663.3,203.0 665.0,200.4 666.3,197.8 668.7,196.2 669.6,192.8 672.9,193.3 675.5,191.9 678.4,191.3 681.2,190.2 684.3,189.0 685.5,186.5 686.4,183.7 689.1,182.5 690.2,179.6 692.6,178.6 695.1,178.1 697.2,176.7 699.5,178.9 701.1,181.8 703.7,183.6 705.0,185.9 706.0,188.4 705.8,191.2 707.3,193.5 707.7,196.2 709.3,198.5 710.4,200.9 710.7,203.6 712.4,205.7 715.3,206.5 716.7,209.1 718.4,210.6 719.4,213.1 720.2,215.6 722.4,217.7 722.4,220.7 725.3,221.6 728.4,220.5 731.3,221.4 734.0,221.8 736.5,221.1 738.6,219.8 740.9,218.8 741.0,221.7 742.9,224.2 743.4,227.1 743.7,229.6 744.1,232.1 744.6,234.6 743.5,237.4 744.1,239.9 745.9,242.2 745.6,244.9 746.3,247.5 745.0,250.2 743.6,252.9 741.7,255.3 740.5,258.1 739.4,260.6 742.3,261.4 745.0,262.8 747.4,263.6 750.2,262.9 752.8,261.7 755.0,259.8 757.2,257.9 760.2,256.6 762.4,257.8 764.7,259.0 766.9,260.2 769.5,260.4 771.5,262.0 774.3,263.2 777.0,264.3 779.6,265.7 782.1,267.4 783.0,264.8 783.1,262.1 784.2,259.6 784.4,256.8 784.6,254.0 786.0,251.9 787.1,249.6 787.0,246.8 788.5,244.7 789.4,242.3 791.9,240.9 793.9,239.0 795.2,236.3 798.6,235.7 801.5,234.0 803.9,231.8 806.1,230.3 807.7,228.2 810.5,227.4 812.3,225.5 814.5,224.0 816.1,222.3 819.0,221.6 821.9,221.2 824.8,220.4 827.9,220.1 830.6,221.5 833.7,220.9 836.3,221.5 838.7,223.0 841.5,222.1 843.7,222.6 846.1,221.7 848.9,222.0 850.8,219.8 853.0,218.6 855.7,219.0 858.2,217.7 860.8,219.0 863.3,218.7 865.8,219.0 868.4,219.2 870.8,218.5 872.4,221.1 875.3,222.6 876.1,225.8 878.4,227.9 880.5,229.4 883.3,229.5 885.0,231.7 887.2,233.1 890.2,232.8 892.3,234.8 894.3,236.6 896.3,238.6 899.2,239.2 900.8,240.7 903.3,238.9 906.0,237.5 908.5,235.8 910.5,233.4 912.3,231.5 914.3,229.6 916.1,227.7 918.1,225.9 919.4,224.3 919.2,221.2 918.3,219.2 920.8,217.9 923.6,218.1 926.1,216.7 928.9,217.2 931.7,216.9 933.9,215.6 936.0,214.2 938.3,213.1 940.7,212.2 942.8,211.5 946.0,210.2 949.1,210.1 952.1,211.2 954.4,212.4 957.0,212.7 959.4,213.6 961.7,215.0 964.3,214.4 966.8,214.8 969.4,215.0 971.8,216.0 974.4,215.9 976.7,216.0 979.9,215.9 982.9,215.4 985.3,213.3 988.3,213.1 991.1,212.5 993.9,213.3 996.6,212.8 999.0,213.8 1001.2,215.2 1003.5,216.4 1005.1,218.6 1006.9,220.4 1008.9,222.1 1010.3,224.3 1012.1,226.3 1013.1,228.8 1014.8,229.9 1018.0,229.1 1019.7,226.4 1021.9,224.6 1024.4,226.0 1026.4,228.0 1028.7,229.5 1031.3,230.7 1033.7,232.1 1035.9,233.8 1038.1,235.3 1040.9,236.0 1042.9,237.8 1044.8,239.2 1046.9,241.1 1048.6,243.3 1049.9,245.6 1050.5,248.4 1051.9,250.7 1052.3,253.4 1053.3,255.9 1055.2,258.0 1055.8,260.2 1058.3,261.1 1060.8,261.8 1063.1,263.5 1065.4,264.6 1067.8,265.7 1070.6,265.6 1072.5,267.7 1075.3,267.8 1077.6,269.0 1079.5,271.1 1082.4,271.8 1084.4,273.4 1086.8,275.4 1089.7,275.1 1092.4,275.9 1095.0,277.0 1097.5,277.8 1100.4,278.1 1102.3,280.0 1104.5,281.6 1106.6,283.1 1109.1,284.1 1111.1,286.1 1113.9,287.1 1117.0,286.6 1119.9,287.3 1123.6,287.7 1122.9,290.6 1121.8,293.5 1122.3,296.5 1120.6,299.1 1119.2,301.8 1119.2,305.1 1116.5,307.1 1116.0,310.2 1114.1,312.5 1112.4,315.1 1111.5,318.1 1109.2,320.2 1107.6,322.7 1105.6,325.1 1104.8,328.2 1102.3,330.2 1100.2,332.9 1100.3,335.6 1100.1,338.3 1100.5,341.1 1099.4,343.6 1099.1,346.5 1097.9,349.1 1097.4,351.9 1096.7,354.8 1096.5,357.8 1094.8,360.4 1095.2,363.2 1096.3,365.9 1095.5,368.3 1093.3,371.1 1091.4,374.4 1088.0,374.9 1086.3,377.7 1083.5,379.2 1080.5,380.3 1079.0,382.4 1077.4,384.4 1075.6,386.2 1074.2,388.3 1072.7,390.4 1071.2,392.5 1069.9,394.1 1068.4,396.7 1068.0,399.3 1068.0,402.1 1067.3,404.7 1067.7,407.5 1067.5,410.3 1066.9,412.9 1065.7,415.5 1066.9,418.4 1065.7,421.0 1066.6,423.4 1066.1,426.1 1067.2,428.5 1067.5,431.3 1065.0,432.4 1062.3,433.5 1059.6,434.4 1057.3,436.4 1054.5,435.5 1051.7,436.8 1048.9,436.5 1046.1,436.8 1043.3,436.8 1040.3,435.6 1037.9,436.7 1035.9,438.5 1033.5,439.5 1030.9,440.1 1028.3,440.5 1025.8,441.3 1023.7,442.4 1021.2,441.9 1018.6,442.0 1016.3,440.8 1013.8,440.5 1011.6,439.2 1009.2,438.4 1006.4,438.1 1004.8,436.0 1003.8,433.3 1001.1,432.0 1000.6,429.2 999.9,426.6 999.2,424.1 997.4,421.9 996.8,419.2 996.0,416.7 995.2,414.1 994.3,410.4 991.8,409.2 989.2,408.2 987.6,405.8 985.0,404.8 982.9,403.0 980.8,401.2 977.5,401.1 975.5,398.5 972.7,397.4 970.0,396.3 967.3,395.0 964.8,396.5 962.5,398.3 959.7,399.2 957.6,401.4 954.7,402.1 952.2,403.2 949.5,403.8 946.9,403.8 944.2,403.3 941.5,403.6 939.2,405.1 936.0,405.3 933.5,406.9 931.3,409.2 928.5,410.0 925.6,411.6 923.0,411.2 920.7,409.8 918.3,408.4 915.5,408.9 913.2,407.3 910.6,407.0 907.5,407.0 905.1,404.8 902.1,404.3 899.5,402.8 896.9,401.9 894.4,400.6 891.5,400.0 889.4,398.0 887.0,396.6 883.9,395.4 881.6,396.7 878.9,396.8 876.5,397.9 874.1,399.2 871.6,399.9 869.0,400.4 866.3,400.8 863.6,401.4 860.8,401.3 858.0,401.5 855.4,402.3 852.7,403.1 849.9,403.3 847.6,405.4 844.9,406.8 842.1,408.0 839.9,410.1 838.9,412.4 836.4,413.8 835.2,416.2 834.3,418.6 832.9,420.8 831.2,422.7 829.7,424.8 828.9,427.2 828.3,429.8 827.0,432.3 825.1,434.4 825.2,437.4 823.7,439.7 823.1,442.5 821.5,444.7 819.9,446.9 818.0,448.8 816.7,451.2 815.3,453.5 813.6,455.6 811.5,457.9 808.7,457.9 806.2,459.2 803.5,459.8 800.6,459.6 797.9,460.2 795.1,460.2 793.0,461.7 790.5,462.9 788.4,464.6 786.7,466.8 783.5,467.2 782.3,469.9 780.3,471.7 777.8,472.9 776.0,475.0 773.4,476.0 771.2,477.5 768.9,479.0 766.5,480.2 763.6,480.2 761.5,482.0 758.7,482.2 756.5,483.9 754.2,482.4 751.4,482.9 748.8,482.3 746.3,481.7 744.1,480.1 741.5,479.8 739.0,478.7 736.5,477.5 734.9,475.0 733.0,473.0 730.4,472.0 727.6,471.3 725.1,469.4 722.6,467.4 720.7,465.5 717.9,466.6 715.1,467.6 711.9,467.5 708.6,468.3 707.7,471.5 704.7,473.2 703.5,476.2 702.2,478.8 701.2,481.4 700.3,484.1 701.0,487.3 699.8,489.9 698.4,492.4 697.6,494.4 695.3,496.6 692.5,496.9 689.5,496.6 687.2,498.6 684.3,498.7 681.7,499.5 678.9,499.6 676.1,499.5 673.6,501.3 670.7,500.7 668.0,501.1 665.3,501.3 662.7,502.2 660.2,502.0 657.4,502.4 654.8,501.7 652.2,501.5 649.7,499.9 647.2,500.6 644.7,501.1 642.2,501.5 639.6,500.7 637.1,501.0 634.6,501.0 632.1,501.9 629.6,502.1 627.1,503.0 624.5,502.3 622.1,503.8 619.5,503.4 617.0,504.0 614.8,505.3 613.0,507.3 610.6,508.2 607.6,508.6 606.5,511.1 604.7,513.3 603.3,515.7 602.6,518.4 601.3,521.1 601.1,524.0 601.4,526.9 600.8,529.7 601.8,532.4 601.7,535.4 601.2,538.4 603.0,540.6 604.3,543.1 606.8,544.4 608.7,546.3 609.8,548.9 612.0,551.1 608.9,552.0 605.8,552.4 602.4,552.2 600.2,553.6 598.6,555.9 596.2,556.9 593.4,557.1 591.9,559.6 589.4,560.4 587.3,562.0 584.5,561.7 581.9,562.3 579.1,562.2 576.5,562.9 573.9,563.8 571.2,564.1 568.5,564.5 565.7,563.6 563.2,565.3 560.5,565.8 557.6,564.5 555.2,566.2 552.4,565.3 550.0,567.1 547.3,566.8 544.8,567.6 542.0,566.9 539.5,567.6 536.9,567.9 534.3,568.0 531.7,567.7 529.0,568.6 526.4,568.0 523.7,568.2 521.0,568.7 518.4,567.4 515.8,567.7 513.1,567.2 510.4,568.2 507.8,567.5 505.1,567.4 502.4,566.6 499.6,567.5 497.0,566.8 494.3,566.3 491.5,566.7 488.9,565.6 486.2,565.4 483.5,566.1 480.8,565.8 478.1,566.0 475.4,566.9 472.7,566.7 470.0,565.7 467.1,567.0 464.2,567.0 461.0,567.7 458.7,566.3 456.3,565.2 454.6,562.8 452.0,561.9 449.9,560.5 447.8,558.9 445.3,558.0 443.5,556.1 440.9,555.3 438.6,554.0 437.0,551.8 434.9,550.5 433.1,548.5 430.6,547.2 429.0,544.9 426.6,543.5 425.5,540.8 423.4,539.0 420.7,537.8 419.9,534.9 417.1,533.4 415.3,531.3 414.5,528.4 412.2,526.6 410.8,524.1 408.6,522.5 405.7,522.1 404.0,519.7 401.2,519.1 399.0,517.5 396.2,515.9 393.7,513.6 390.7,511.9 388.1,512.4 385.6,512.5 383.1,511.9 380.5,511.4 378.0,511.7 375.4,511.3 372.8,509.7 370.0,509.2 368.0,509.0 368.0,506.5 367.8,503.9 366.9,501.4 366.5,499.0 366.2,496.2 365.9,493.3 365.4,490.5 364.1,488.2 362.4,486.1 361.7,483.3 359.2,481.9 357.8,479.7 356.7,477.2 354.9,475.3 352.4,473.7 351.7,471.0 352.0,468.1 349.9,465.8 349.4,463.0 349.4,460.2 348.2,457.9 346.4,456.0 344.9,453.8 343.9,451.5 343.6,448.7 341.9,446.8 338.9,447.6" fill="none" stroke="#1e1e1e" stroke-width="1.9" stroke-linejoin="miter" stroke-opacity="0.95"/>
<text x="1087.7" y="390.7" text-anchor="middle" font-size="11.2" fill="#000" fill-opacity="0.25" clip-path="url(#skc)">Ужгород</text>
<text x="602.6" y="218.2" text-anchor="middle" font-size="12" font-weight="bold" fill="#000">1</text>
<text x="606" y="244.3" text-anchor="middle" font-size="12" font-weight="bold" fill="#000">1</text>
<text x="567.3" y="256.1" text-anchor="middle" font-size="12" font-weight="bold" fill="#000">1</text>
<text x="534.5" y="283.0" text-anchor="middle" font-size="12" font-weight="bold" fill="#000">1</text>
<text x="562.2" y="288.1" text-anchor="middle" font-size="12" font-weight="bold" fill="#000">1</text>
<text x="531.1" y="313.3" text-anchor="middle" font-size="12" font-weight="bold" fill="#000">1</text>
<text x="579.1" y="360.1" text-anchor="middle" font-size="12" font-weight="bold" fill="#000">1</text>
<text x="618.6" y="341.6" text-anchor="middle" font-size="12" font-weight="bold" fill="#000">1</text>
<text x="613.6" y="390.4" text-anchor="middle" font-size="12" font-weight="bold" fill="#000">1</text>
<text x="870.9" y="248.5" text-anchor="middle" font-size="12" font-weight="bold" fill="#000">1</text>
<text x="833" y="266.5" text-anchor="middle" font-size="12" font-weight="bold" fill="#000">1</text>
<text x="903" y="279.7" text-anchor="middle" font-size="12" font-weight="bold" fill="#000">1</text>
<text x="865.2" y="299.5" text-anchor="middle" font-size="12" font-weight="bold" fill="#000">1</text>
<text x="850" y="326.1" text-anchor="middle" font-size="12" font-weight="bold" fill="#000">1</text>
<text x="944.7" y="250.3" text-anchor="middle" font-size="12" font-weight="bold" fill="#000">1</text>
<text x="987.3" y="246.5" text-anchor="middle" font-size="12" font-weight="bold" fill="#000">1</text>
<text x="1038.8" y="259.3" text-anchor="middle" font-size="12" font-weight="bold" fill="#000">1</text>
<text x="1005.1" y="267.7" text-anchor="middle" font-size="12" font-weight="bold" fill="#000">1</text>
<text x="1040.5" y="305.5" text-anchor="middle" font-size="12" font-weight="bold" fill="#000">1</text>
<text x="1085.9" y="305.5" text-anchor="middle" font-size="12" font-weight="bold" fill="#000">1</text>
<text x="684.6" y="221.6" text-anchor="middle" font-size="12" font-weight="bold" fill="#000">2</text>
<text x="721.6" y="242.6" text-anchor="middle" font-size="12" font-weight="bold" fill="#000">2</text>
<text x="677" y="262.0" text-anchor="middle" font-size="12" font-weight="bold" fill="#000">2</text>
<text x="597.6" y="279.6" text-anchor="middle" font-size="12" font-weight="bold" fill="#000">2</text>
<text x="626.2" y="299.0" text-anchor="middle" font-size="12" font-weight="bold" fill="#000">2</text>
<text x="672" y="307.4" text-anchor="middle" font-size="12" font-weight="bold" fill="#000">2</text>
<text x="730.8" y="296.5" text-anchor="middle" font-size="12" font-weight="bold" fill="#000">2</text>
<text x="796.5" y="288.9" text-anchor="middle" font-size="12" font-weight="bold" fill="#000">2</text>
<text x="666.6" y="361.0" text-anchor="middle" font-size="12" font-weight="bold" fill="#000">2</text>
<text x="733.8" y="354.0" text-anchor="middle" font-size="12" font-weight="bold" fill="#000">2</text>
</svg>
    <div class="lbar" style="left:10px;top:10px;width:33px;height:63px">
      <div class="zb" style="height:29px;border-bottom:1px solid #ccc"><svg width="29" height="29"><path d="M8.5 15.5 H21.5 M15 9 V22" stroke="#1d4c8c" stroke-width="2.6"/></svg></div>
      <div class="zb" style="height:29px"><svg width="29" height="29"><path d="M8.5 14.5 H21.5" stroke="#1d4c8c" stroke-width="2.6"/></svg></div>
    </div>
    <div class="lbar" style="left:10px;top:85px;width:33px;height:32px"><svg width="29" height="28"><path d="M9 13 V8 H14 M16 8 H21 V13 M21 16 V21 H16 M14 21 H9 V16" fill="none" stroke="#222" stroke-width="2"/></svg></div>
    <div class="lbox" style="left:60px;top:10px;width:87px;height:57px;border:2px solid rgba(0,0,0,0.17)"><svg width="84" height="53" viewBox="0 0 84 53" style="display:block">
<g fill="#1b63c8" stroke="none">
<ellipse cx="36.8" cy="7.6" rx="1.8" ry="2.3"/><ellipse cx="42.8" cy="7.6" rx="1.8" ry="2.3"/><ellipse cx="46.3" cy="7.6" rx="1.8" ry="2.3"/>
<rect x="40.5" y="6" width="1.4" height="15.5"/>
<rect x="30" y="14.8" width="20" height="1.5"/><rect x="28.6" y="14.3" width="3.5" height="2.5" rx="1.2"/>
<path d="M49.5 13.2 L53.7 10.8 L53.7 21.2 L49.5 18.8 Z"/>
</g>
<text x="41.5" y="34.5" text-anchor="middle" font-family="Liberation Sans" font-weight="bold" font-size="15" fill="#1b63c8" stroke="#1b63c8" stroke-width="1.2" textLength="72" lengthAdjust="spacingAndGlyphs">SHMU</text>
<rect x="73.5" y="25" width="2" height="2.2" fill="#fff"/>
<g fill="none" stroke="#1b63c8" stroke-width="1.9">
<path d="M4.5 38.6 q3 -3 6.1 0 t6.1 0 t6.1 0 t6.1 0 t6.1 0 t6.1 0 t6.1 0 t6.1 0 t6.1 0 t6.1 0 t6.1 0 t6.1 0"/>
<path d="M4.5 42.4 q3 -3 6.1 0 t6.1 0 t6.1 0 t6.1 0 t6.1 0 t6.1 0 t6.1 0 t6.1 0 t6.1 0 t6.1 0 t6.1 0 t6.1 0"/>
<path d="M4.5 46.3 q3 -3 6.1 0 t6.1 0 t6.1 0 t6.1 0 t6.1 0 t6.1 0 t6.1 0 t6.1 0 t6.1 0 t6.1 0 t6.1 0 t6.1 0"/>
</g>
</svg>
</div>
    <div class="lbox mtitle" style="left:259px;top:11px;width:399px;height:35px">Meteorologické výstrahy - Štvrtok - 1.1.2026</div>
    <div class="lbox upd" style="left:541px;top:432px;width:207px;height:38px">Aktualizované: 1.1.2026 11:53<br>Najbližšia aktualizácia najneskôr: 1.1.2026 12:00</div>
    <div class="lbox leg" style="left:759px;top:401px;width:149px;height:69px">
      <div><i style="background:#5b8a4d"></i>Bez nebezpečných javov</div>
      <div><i style="background:#ffee00"></i>1. stupeň</div>
      <div><i style="background:#f28b30"></i>2. stupeň</div>
      <div><i style="background:#ff1a1a"></i>3. stupeň</div>
    </div>
    <div class="attr"><svg width="12" height="8" style="vertical-align:0px;margin-right:4px"><rect width="12" height="4" fill="#4c7be1"/><rect y="4" width="12" height="4" fill="#ffd500"/></svg><span style="color:#2d66ad">Leaflet</span> | © OpenStreetmap contributors</div>
  </div>
</div>
<div class="ttl">Tabuľkové zobrazenie výstrah</div>
<table class="t">
<colgroup><col style="width:50px"><col style="width:163px"><col style="width:86px"><col><col><col><col><col><col><col><col><col><col><col><col><col><col><col><col><col><col><col><col><col><col><col><col></colgroup>
<tr><th colspan="2" style="padding-left:8px">Región</th><th style="padding-left:8px">Jav</th><th colspan="24" style="padding-left:9px">Stupne v hodinových krokoch</th></tr>
<tr><th><svg width="49" height="27" style="display:block"><path d="M7.9 11.1 H22 M15 4.1 V18.1 M25.9 11.1 H40" stroke="#1f5096" stroke-width="3.6"/></svg></th><th></th><th></th><th class="h">0</th><th class="h">1</th><th class="h">2</th><th class="h">3</th><th class="h">4</th><th class="h">5</th><th class="h">6</th><th class="h">7</th><th class="h">8</th><th class="h">9</th><th class="h">10</th><th class="h">11</th><th class="h">12</th><th class="h">13</th><th class="h">14</th><th class="h">15</th><th class="h">16</th><th class="h">17</th><th class="h">18</th><th class="h">19</th><th class="h">20</th><th class="h">21</th><th class="h">22</th><th class="h">23</th></tr>
<tr><td class="pl"><svg width="49" height="27" style="display:block"><path d="M17 7.6 H31 M24 0.6 V14.6" transform="translate(0,3.6)" stroke="#1f5096" stroke-width="3.6"/></svg></td><td class="nm">Bratislavský kraj</td><td class="jv"></td><td class="g"></td><td class="g"></td><td class="g"></td><td class="g"></td><td class="g"></td><td class="g"></td><td class="g"></td><td class="g"></td><td class="g"></td><td class="g"></td><td class="g"></td><td class="g"></td><td class="gr"></td><td class="gr"></td><td class="gr"></td><td class="gr"></td><td class="gr"></td><td class="gr"></td><td class="gr"></td><td class="gr"></td><td class="gr"></td><td class="gr"></td><td class="gr"></td><td class="gr"></td></tr><tr><td class="pl"><svg width="49" height="27" style="display:block"><path d="M17 7.6 H31 M24 0.6 V14.6" transform="translate(0,3.6)" stroke="#1f5096" stroke-width="3.6"/></svg></td><td class="nm">Banskobystrický kraj</td><td class="jv"><svg class="ic" width="24" height="24" viewBox="0 0 24 24"><rect x="0.7" y="0.7" width="22.6" height="22.6" rx="1" fill="#f28c38" stroke="#000" stroke-width="1.4"/><defs><linearGradient id="mgo" x1="0" y1="0" x2="1" y2="1"><stop offset="0" stop-color="#c8672a"/><stop offset="1" stop-color="#6b3410"/></linearGradient></defs><path d="M2.5 21.5 L8.3 9.5 L11.2 17 L14 12.2 L21.5 21.5 Z" fill="url(#mgo)" stroke="#3a1c08" stroke-width="0.9" stroke-linejoin="round"/><path d="M10.5 4.5 L15.5 8.5 M12 3.5 L16.5 7 M13.5 3 L17 6" stroke="#6b3410" stroke-width="0.9"/><path d="M15.2 10.5 L17.5 7.2 L18.3 11.2 Z" fill="#111"/></svg><svg class="ic" width="24" height="24" viewBox="0 0 24 24"><rect x="0.7" y="0.7" width="22.6" height="22.6" rx="1" fill="#fff21f" stroke="#000" stroke-width="1.4"/><circle cx="12" cy="8.2" r="3.6" fill="none" stroke="#111" stroke-width="1.4" stroke-dasharray="1.6 0.9"/><path d="M12 5 V11.4 M9.2 6.6 L14.8 9.8 M14.8 6.6 L9.2 9.8" stroke="#222" stroke-width="0.6"/><path d="M3.5 16.5 H15" stroke="#111" stroke-width="1.1"/><path d="M4 14.5 L6 18.5 M6 14.5 L8 18.5 M8 14.5 L10 18.5 M10 14.5 L12 18.5" stroke="#333" stroke-width="0.8"/><path d="M14.5 13.6 L19.5 16.5 L14.5 19.4 Z" fill="#111"/></svg></td><td class="g"></td><td class="g"></td><td class="g"></td><td class="g"></td><td class="g"></td><td class="g"></td><td class="g"></td><td class="g"></td><td class="g"></td><td class="g"></td><td class="g"></td><td class="g"></td><td class="y">1</td><td class="y">1</td><td class="y">1</td><td class="o">2</td><td class="o">2</td><td class="o">2</td><td class="o">2</td><td class="o">2</td><td class="o">2</td><td class="o">2</td><td class="o">2</td><td class="o">2</td></tr><tr><td class="pl"><svg width="49" height="27" style="display:block"><path d="M17 7.6 H31 M24 0.6 V14.6" transform="translate(0,3.6)" stroke="#1f5096" stroke-width="3.6"/></svg></td><td class="nm">Trenčiansky kraj</td><td class="jv"><svg class="ic" width="24" height="24" viewBox="0 0 24 24"><rect x="0.7" y="0.7" width="22.6" height="22.6" rx="1" fill="#fff21f" stroke="#000" stroke-width="1.4"/><circle cx="12" cy="8.2" r="3.6" fill="none" stroke="#111" stroke-width="1.4" stroke-dasharray="1.6 0.9"/><path d="M12 5 V11.4 M9.2 6.6 L14.8 9.8 M14.8 6.6 L9.2 9.8" stroke="#222" stroke-width="0.6"/><path d="M3.5 16.5 H15" stroke="#111" stroke-width="1.1"/><path d="M4 14.5 L6 18.5 M6 14.5 L8 18.5 M8 14.5 L10 18.5 M10 14.5 L12 18.5" stroke="#333" stroke-width="0.8"/><path d="M14.5 13.6 L19.5 16.5 L14.5 19.4 Z" fill="#111"/></svg><svg class="ic" width="24" height="24" viewBox="0 0 24 24"><rect x="0.7" y="0.7" width="22.6" height="22.6" rx="1" fill="#fff21f" stroke="#000" stroke-width="1.4"/><defs><linearGradient id="mgy" x1="0" y1="0" x2="1" y2="1"><stop offset="0" stop-color="#c9b800"/><stop offset="1" stop-color="#6e6200"/></linearGradient></defs><path d="M2.5 21.5 L8.3 9.5 L11.2 17 L14 12.2 L21.5 21.5 Z" fill="url(#mgy)" stroke="#2a2600" stroke-width="0.9" stroke-linejoin="round"/><path d="M10.5 4.5 L15.5 8.5 M12 3.5 L16.5 7 M13.5 3 L17 6" stroke="#6e6200" stroke-width="0.9"/><path d="M15.2 10.5 L17.5 7.2 L18.3 11.2 Z" fill="#111"/></svg></td><td class="g"></td><td class="g"></td><td class="g"></td><td class="g"></td><td class="g"></td><td class="g"></td><td class="g"></td><td class="g"></td><td class="g"></td><td class="g"></td><td class="g"></td><td class="g"></td><td class="y">1</td><td class="y">1</td><td class="y">1</td><td class="y">1</td><td class="y">1</td><td class="y">1</td><td class="y">1</td><td class="y">1</td><td class="y">1</td><td class="y">1</td><td class="y">1</td><td class="y">1</td></tr><tr><td class="pl"><svg width="49" height="27" style="display:block"><path d="M17 7.6 H31 M24 0.6 V14.6" transform="translate(0,3.6)" stroke="#1f5096" stroke-width="3.6"/></svg></td><td class="nm">Košický kraj</td><td class="jv"><svg class="ic" width="24" height="24" viewBox="0 0 24 24"><rect x="0.7" y="0.7" width="22.6" height="22.6" rx="1" fill="#fff21f" stroke="#000" stroke-width="1.4"/><defs><linearGradient id="mgy" x1="0" y1="0" x2="1" y2="1"><stop offset="0" stop-color="#c9b800"/><stop offset="1" stop-color="#6e6200"/></linearGradient></defs><path d="M2.5 21.5 L8.3 9.5 L11.2 17 L14 12.2 L21.5 21.5 Z" fill="url(#mgy)" stroke="#2a2600" stroke-width="0.9" stroke-linejoin="round"/><path d="M10.5 4.5 L15.5 8.5 M12 3.5 L16.5 7 M13.5 3 L17 6" stroke="#6e6200" stroke-width="0.9"/><path d="M15.2 10.5 L17.5 7.2 L18.3 11.2 Z" fill="#111"/></svg><svg class="ic" width="24" height="24" viewBox="0 0 24 24"><rect x="0.7" y="0.7" width="22.6" height="22.6" rx="1" fill="#fff21f" stroke="#000" stroke-width="1.4"/><circle cx="12" cy="8.2" r="3.6" fill="none" stroke="#111" stroke-width="1.4" stroke-dasharray="1.6 0.9"/><path d="M12 5 V11.4 M9.2 6.6 L14.8 9.8 M14.8 6.6 L9.2 9.8" stroke="#222" stroke-width="0.6"/><path d="M3.5 16.5 H15" stroke="#111" stroke-width="1.1"/><path d="M4 14.5 L6 18.5 M6 14.5 L8 18.5 M8 14.5 L10 18.5 M10 14.5 L12 18.5" stroke="#333" stroke-width="0.8"/><path d="M14.5 13.6 L19.5 16.5 L14.5 19.4 Z" fill="#111"/></svg></td><td class="g"></td><td class="g"></td><td class="g"></td><td class="g"></td><td class="g"></td><td class="g"></td><td class="g"></td><td class="g"></td><td class="g"></td><td class="g"></td><td class="g"></td><td class="g"></td><td class="y">1</td><td class="y">1</td><td class="y">1</td><td class="y">1</td><td class="y">1</td><td class="y">1</td><td class="y">1</td><td class="y">1</td><td class="y">1</td><td class="y">1</td><td class="y">1</td><td class="y">1</td></tr><tr><td class="pl"><svg width="49" height="27" style="display:block"><path d="M17 7.6 H31 M24 0.6 V14.6" transform="translate(0,3.6)" stroke="#1f5096" stroke-width="3.6"/></svg></td><td class="nm">Nitriansky kraj</td><td class="jv"></td><td class="g"></td><td class="g"></td><td class="g"></td><td class="g"></td><td class="g"></td><td class="g"></td><td class="g"></td><td class="g"></td><td class="g"></td><td class="g"></td><td class="g"></td><td class="g"></td><td class="gr"></td><td class="gr"></td><td class="gr"></td><td class="gr"></td><td class="gr"></td><td class="gr"></td><td class="gr"></td><td class="gr"></td><td class="gr"></td><td class="gr"></td><td class="gr"></td><td class="gr"></td></tr><tr><td class="pl"><svg width="49" height="27" style="display:block"><path d="M17 7.6 H31 M24 0.6 V14.6" transform="translate(0,3.6)" stroke="#1f5096" stroke-width="3.6"/></svg></td><td class="nm">Trnavský kraj</td><td class="jv"></td><td class="g"></td><td class="g"></td><td class="g"></td><td class="g"></td><td class="g"></td><td class="g"></td><td class="g"></td><td class="g"></td><td class="g"></td><td class="g"></td><td class="g"></td><td class="g"></td><td class="gr"></td><td class="gr"></td><td class="gr"></td><td class="gr"></td><td class="gr"></td><td class="gr"></td><td class="gr"></td><td class="gr"></td><td class="gr"></td><td class="gr"></td><td class="gr"></td><td class="gr"></td></tr><tr><td class="pl"><svg width="49" height="27" style="display:block"><path d="M17 7.6 H31 M24 0.6 V14.6" transform="translate(0,3.6)" stroke="#1f5096" stroke-width="3.6"/></svg></td><td class="nm">Prešovský kraj</td><td class="jv"><svg class="ic" width="24" height="24" viewBox="0 0 24 24"><rect x="0.7" y="0.7" width="22.6" height="22.6" rx="1" fill="#f28c38" stroke="#000" stroke-width="1.4"/><defs><linearGradient id="mgo" x1="0" y1="0" x2="1" y2="1"><stop offset="0" stop-color="#c8672a"/><stop offset="1" stop-color="#6b3410"/></linearGradient></defs><path d="M2.5 21.5 L8.3 9.5 L11.2 17 L14 12.2 L21.5 21.5 Z" fill="url(#mgo)" stroke="#3a1c08" stroke-width="0.9" stroke-linejoin="round"/><path d="M10.5 4.5 L15.5 8.5 M12 3.5 L16.5 7 M13.5 3 L17 6" stroke="#6b3410" stroke-width="0.9"/><path d="M15.2 10.5 L17.5 7.2 L18.3 11.2 Z" fill="#111"/></svg><svg class="ic" width="24" height="24" viewBox="0 0 24 24"><rect x="0.7" y="0.7" width="22.6" height="22.6" rx="1" fill="#fff21f" stroke="#000" stroke-width="1.4"/><circle cx="12" cy="8.2" r="3.6" fill="none" stroke="#111" stroke-width="1.4" stroke-dasharray="1.6 0.9"/><path d="M12 5 V11.4 M9.2 6.6 L14.8 9.8 M14.8 6.6 L9.2 9.8" stroke="#222" stroke-width="0.6"/><path d="M3.5 16.5 H15" stroke="#111" stroke-width="1.1"/><path d="M4 14.5 L6 18.5 M6 14.5 L8 18.5 M8 14.5 L10 18.5 M10 14.5 L12 18.5" stroke="#333" stroke-width="0.8"/><path d="M14.5 13.6 L19.5 16.5 L14.5 19.4 Z" fill="#111"/></svg><svg class="ic" width="24" height="24" viewBox="0 0 24 24"><rect x="0.7" y="0.7" width="22.6" height="22.6" rx="1" fill="#fff21f" stroke="#000" stroke-width="1.4"/><path d="M4.5 7 L17 17" stroke="#111" stroke-width="1.2"/><path d="M4 10 L8.5 5 M6 11.5 L10.5 6.5 M8 13 L12.5 8 M5 12.5 L9.5 7.5" stroke="#333" stroke-width="0.9"/><path d="M14.2 18.8 L20 20 L18.5 14.2 Z" fill="#111"/></svg></td><td class="g"></td><td class="g"></td><td class="g"></td><td class="g"></td><td class="g"></td><td class="g"></td><td class="g"></td><td class="g"></td><td class="g"></td><td class="g"></td><td class="g"></td><td class="g"></td><td class="y">1</td><td class="y">1</td><td class="y">1</td><td class="o">2</td><td class="o">2</td><td class="o">2</td><td class="o">2</td><td class="o">2</td><td class="o">2</td><td class="o">2</td><td class="o">2</td><td class="o">2</td></tr><tr><td class="pl"><svg width="49" height="27" style="display:block"><path d="M17 7.6 H31 M24 0.6 V14.6" transform="translate(0,3.6)" stroke="#1f5096" stroke-width="3.6"/></svg></td><td class="nm">Žilinský kraj</td><td class="jv"><svg class="ic" width="24" height="24" viewBox="0 0 24 24"><rect x="0.7" y="0.7" width="22.6" height="22.6" rx="1" fill="#f28c38" stroke="#000" stroke-width="1.4"/><defs><linearGradient id="mgo" x1="0" y1="0" x2="1" y2="1"><stop offset="0" stop-color="#c8672a"/><stop offset="1" stop-color="#6b3410"/></linearGradient></defs><path d="M2.5 21.5 L8.3 9.5 L11.2 17 L14 12.2 L21.5 21.5 Z" fill="url(#mgo)" stroke="#3a1c08" stroke-width="0.9" stroke-linejoin="round"/><path d="M10.5 4.5 L15.5 8.5 M12 3.5 L16.5 7 M13.5 3 L17 6" stroke="#6b3410" stroke-width="0.9"/><path d="M15.2 10.5 L17.5 7.2 L18.3 11.2 Z" fill="#111"/></svg><svg class="ic" width="24" height="24" viewBox="0 0 24 24"><rect x="0.7" y="0.7" width="22.6" height="22.6" rx="1" fill="#fff21f" stroke="#000" stroke-width="1.4"/><circle cx="12" cy="8.2" r="3.6" fill="none" stroke="#111" stroke-width="1.4" stroke-dasharray="1.6 0.9"/><path d="M12 5 V11.4 M9.2 6.6 L14.8 9.8 M14.8 6.6 L9.2 9.8" stroke="#222" stroke-width="0.6"/><path d="M3.5 16.5 H15" stroke="#111" stroke-width="1.1"/><path d="M4 14.5 L6 18.5 M6 14.5 L8 18.5 M8 14.5 L10 18.5 M10 14.5 L12 18.5" stroke="#333" stroke-width="0.8"/><path d="M14.5 13.6 L19.5 16.5 L14.5 19.4 Z" fill="#111"/></svg><svg class="ic" width="24" height="24" viewBox="0 0 24 24"><rect x="0.7" y="0.7" width="22.6" height="22.6" rx="1" fill="#fff21f" stroke="#000" stroke-width="1.4"/><path d="M4.5 7 L17 17" stroke="#111" stroke-width="1.2"/><path d="M4 10 L8.5 5 M6 11.5 L10.5 6.5 M8 13 L12.5 8 M5 12.5 L9.5 7.5" stroke="#333" stroke-width="0.9"/><path d="M14.2 18.8 L20 20 L18.5 14.2 Z" fill="#111"/></svg></td><td class="g"></td><td class="g"></td><td class="g"></td><td class="g"></td><td class="g"></td><td class="g"></td><td class="g"></td><td class="g"></td><td class="g"></td><td class="g"></td><td class="g"></td><td class="g"></td><td class="y">1</td><td class="y">1</td><td class="y">1</td><td class="o">2</td><td class="o">2</td><td class="o">2</td><td class="o">2</td><td class="o">2</td><td class="o">2</td><td class="o">2</td><td class="o">2</td><td class="o">2</td></tr>
</table>
<svg class="dots" width="1209" height="951" style="pointer-events:none"><line x1="18" y1="949.5" x2="1192" y2="949.5" stroke="#9a9a9a" stroke-width="1" stroke-dasharray="1 5"/><line x1="1208.5" y1="0" x2="1208.5" y2="951" stroke="#e4eaf1" stroke-width="1"/></svg>
</body></html>
